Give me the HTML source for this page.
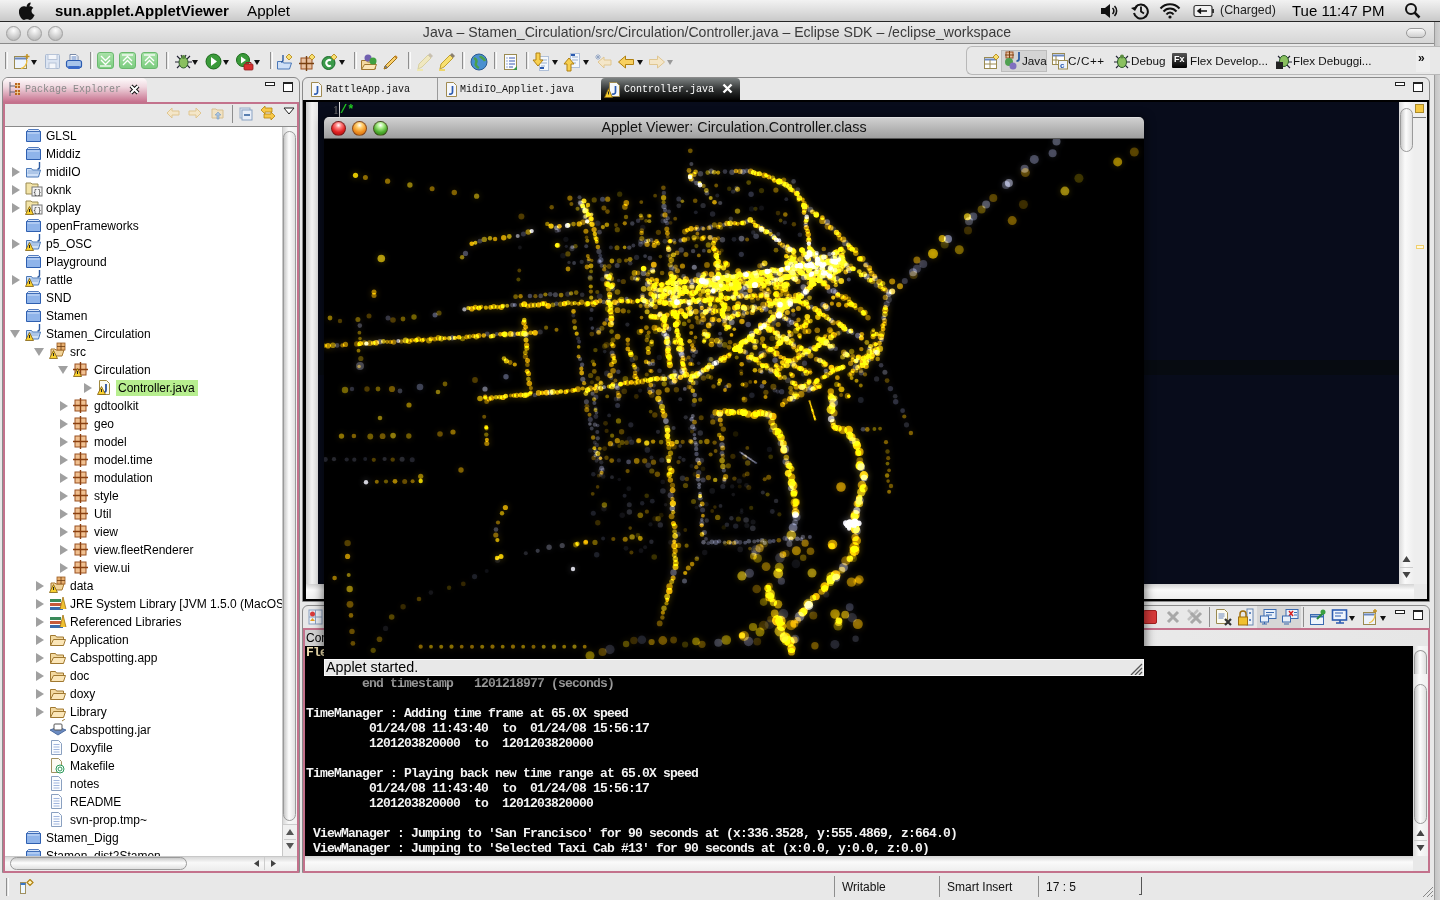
<!DOCTYPE html><html><head><meta charset="utf-8"><style>
*{margin:0;padding:0;box-sizing:border-box}
html,body{width:1440px;height:900px;overflow:hidden;background:#e8e8e8;font-family:"Liberation Sans",sans-serif}
div,svg{position:absolute}
.t{white-space:nowrap}
.sep{top:52px;width:3px;height:17px;border-left:1px solid #8e8e8e;border-right:1px solid #fbfbfb}
.dd{width:0;height:0;border-left:3.5px solid transparent;border-right:3.5px solid transparent;border-top:5px solid #111}
.tl{width:15px;height:15px;border-radius:50%;background:radial-gradient(circle at 50% 28%,#fdfdfd,#d3d3d3 50%,#acacac 100%);border:1px solid #a0a0a0}
.tri{width:0;height:0;border-top:5px solid transparent;border-bottom:5px solid transparent;border-left:8px solid #a0a0a0}
.trid{width:0;height:0;border-left:5px solid transparent;border-right:5px solid transparent;border-top:8px solid #a0a0a0}
.row{font-size:12px;color:#000;white-space:nowrap}
.mono{font-family:"Liberation Mono",monospace}
</style></head><body>
<div style="left:0;top:0;width:1440px;height:22px;background:linear-gradient(#f2f2f2,#dcdcdc 55%,#c9c9c9);border-bottom:1px solid #262626"></div>
<svg style="left:19px;top:2px" width="17" height="18" viewBox="0 0 17 18"><path d="M11.6 0.6c0.2 1.3-0.4 2.5-1.1 3.3-0.8 0.9-1.9 1.4-2.9 1.3-0.2-1.2 0.4-2.4 1.1-3.2 0.8-0.8 2-1.4 2.9-1.4zM15.6 13.1c-0.5 1.1-0.8 1.6-1.4 2.5-0.9 1.3-2.2 2.4-3.3 2.4-1.1 0-1.4-0.7-2.9-0.7-1.5 0-1.9 0.7-3 0.7-1.2 0-2.3-1.2-3.1-2.3C-0.5 12.3-0.7 8.5 1 6.3c0.9-1.3 2.3-2.1 3.7-2.1 1.3 0 2.1 0.7 3.2 0.7 1.1 0 1.7-0.7 3.2-0.7 1.1 0 2.4 0.6 3.3 1.7-2.9 1.6-2.4 5.7 1.2 7.2z" fill="#111"/></svg>
<div class="t" style="left:55px;top:2px;font-size:15px;font-weight:bold">sun.applet.AppletViewer</div>
<div class="t" style="left:247px;top:2px;font-size:15.2px">Applet</div>
<svg style="left:1100px;top:3px" width="20" height="16" viewBox="0 0 20 16"><path d="M1 5h4l5-4v14l-5-4H1z" fill="#111"/><path d="M12.5 5a4 4 0 0 1 0 6M14.5 3a7 7 0 0 1 0 10" stroke="#111" stroke-width="1.6" fill="none"/></svg>
<svg style="left:1131px;top:2px" width="20" height="18" viewBox="0 0 20 18"><path d="M4.5 5A7 7 0 1 1 3 11" stroke="#111" stroke-width="2" fill="none"/><path d="M0 6l4 3 3-5z" fill="#111"/><path d="M10 4.5v5l3 2" stroke="#111" stroke-width="1.8" fill="none"/></svg>
<svg style="left:1159px;top:2px" width="22" height="17" viewBox="0 0 22 17"><path d="M1.5 6.5a13 13 0 0 1 19 0M4.5 9.5a8.5 8.5 0 0 1 13 0M7.5 12.5a4 4 0 0 1 7 0" stroke="#111" stroke-width="2" fill="none"/><circle cx="11" cy="15" r="1.6" fill="#111"/></svg>
<svg style="left:1193px;top:4px" width="22" height="14" viewBox="0 0 22 14"><rect x="1" y="1.5" width="18" height="11" rx="2" fill="#f2f2f2" stroke="#333" stroke-width="1.2"/><rect x="19" y="5" width="2" height="4" fill="#333"/><path d="M5 7h9M8 4.5l-3 2.5 3 2.5" stroke="#111" stroke-width="1.6" fill="#111"/></svg>
<div class="t" style="left:1220px;top:3px;font-size:12.4px;color:#222">(Charged)</div>
<div class="t" style="left:1292px;top:2px;font-size:15px">Tue 11:47 PM</div>
<svg style="left:1404px;top:2px" width="18" height="18" viewBox="0 0 18 18"><circle cx="7" cy="7" r="5" stroke="#111" stroke-width="2" fill="none"/><path d="M10.5 10.5l5 5" stroke="#111" stroke-width="2.5"/></svg>
<div style="left:1434px;top:22px;width:6px;height:878px;border-left:1px solid #9a9a9a;background:linear-gradient(90deg,#c4c4c4,#d2d2d2)"></div>
<div style="left:0;top:22px;width:1434px;height:22px;background:linear-gradient(#ececec,#d6d6d6);border-bottom:1px solid #8a8a8a"></div>
<div class="tl" style="left:6px;top:26px"></div>
<div class="tl" style="left:27px;top:26px"></div>
<div class="tl" style="left:48px;top:26px"></div>
<div class="t" style="left:0;width:1434px;top:24px;text-align:center;font-size:14.1px;color:#3a3a3a">Java – Stamen_Circulation/src/Circulation/Controller.java – Eclipse SDK – /eclipse_workspace</div>
<div style="left:1406px;top:28px;width:20px;height:10px;border-radius:5px;border:1px solid #999;background:linear-gradient(#fbfbfb,#cfcfcf)"></div>
<div class="sep" style="left:5px"></div>
<div class="sep" style="left:90px"></div>
<div class="sep" style="left:166px"></div>
<div class="sep" style="left:270px"></div>
<div class="sep" style="left:354px"></div>
<div class="sep" style="left:408px"></div>
<div class="sep" style="left:462px"></div>
<div class="sep" style="left:494px"></div>
<div class="sep" style="left:526px"></div>
<svg style="left:13px;top:53px" width="18" height="18" viewBox="0 0 18 18"><rect x="1.5" y="3.5" width="12" height="12" fill="#eef4fc" stroke="#9a8a50"/><path d="M1.5 5.5h12" stroke="#6a88c0" stroke-width="2"/><path d="M14 1v5M11.5 3.5h5" stroke="#c09020" stroke-width="1.5"/><path d="M14 7c0 5-3 8-6 8.5" stroke="#f0c040" stroke-width="1.3" fill="none"/></svg>
<div class="dd" style="left:31px;top:60px"></div>
<svg style="left:44px;top:53px" width="17" height="17" viewBox="0 0 17 17"><rect x="1.5" y="1.5" width="14" height="14" rx="1" fill="#dbe4f2" stroke="#a8b8d0"/><rect x="4" y="1.5" width="9" height="5" fill="#f4f6fa" stroke="#b8c4d8"/><rect x="5" y="10" width="7" height="5.5" fill="#f4f6fa" stroke="#b8c4d8"/></svg>
<svg style="left:65px;top:53px" width="18" height="18" viewBox="0 0 18 18"><path d="M5 1.5h6l2 2v4H5z" fill="#fff" stroke="#7a8aa8"/><path d="M6.5 4h5M6.5 6h5" stroke="#2a5ab0" stroke-width="0.8"/><rect x="1.5" y="7.5" width="15" height="7" rx="2" fill="#a8c4ea" stroke="#2a5ab0" stroke-width="1.2"/><rect x="3" y="13" width="12" height="3" rx="1" fill="#3a6ac8"/></svg>
<div style="left:97px;top:52px;width:17px;height:17px;border-radius:3px;background:linear-gradient(#a8e2a8,#7ccc80);border:1px solid #6ab86e"></div>
<div style="left:119px;top:52px;width:17px;height:17px;border-radius:3px;background:linear-gradient(#a8e2a8,#7ccc80);border:1px solid #6ab86e"></div>
<div style="left:141px;top:52px;width:17px;height:17px;border-radius:3px;background:linear-gradient(#a8e2a8,#7ccc80);border:1px solid #6ab86e"></div>
<svg style="left:97px;top:52px" width="17" height="17" viewBox="0 0 17 17"><path d="M4 4l4.5 4.5L13 4M4 8l4.5 4.5L13 8" stroke="#fff" stroke-width="1.3" fill="none"/><path d="M3 14h11" stroke="#fff" stroke-width="1.3"/></svg>
<svg style="left:119px;top:52px" width="17" height="17" viewBox="0 0 17 17"><path d="M3 3h11" stroke="#fff" stroke-width="1.3"/><path d="M4 9l4.5-4.5L13 9M4 13l4.5-4.5L13 13" stroke="#fff" stroke-width="1.3" fill="none"/></svg>
<svg style="left:141px;top:52px" width="17" height="17" viewBox="0 0 17 17"><path d="M3 3h11" stroke="#fff" stroke-width="1.3"/><path d="M4 9l4.5-4.5L13 9M4 13l4.5-4.5L13 13" stroke="#fff" stroke-width="1.3" fill="none"/></svg>
<svg style="left:174px;top:52px" width="19" height="19" viewBox="0 0 19 19"><path d="M3 4l3 3M16 4l-3 3M1 10h4M14 10h4M3 16l3-3M16 16l-3-3M7 3l1 2M12 3l-1 2" stroke="#223" stroke-width="1.1"/><ellipse cx="9.5" cy="10.5" rx="4.5" ry="5.5" fill="#8ac060" stroke="#2a5a2a"/><circle cx="9.5" cy="5" r="2" fill="#5a8a40"/></svg>
<div class="dd" style="left:192px;top:60px"></div>
<svg style="left:205px;top:53px" width="17" height="17" viewBox="0 0 17 17"><circle cx="8.5" cy="8.5" r="7.5" fill="#3a9a3a" stroke="#1a6a1a"/><path d="M6 4l6 4.5-6 4.5z" fill="#fff"/></svg>
<div class="dd" style="left:223px;top:60px"></div>
<svg style="left:236px;top:53px" width="18" height="18" viewBox="0 0 18 18"><circle cx="7" cy="7" r="6.5" fill="#3a9a3a" stroke="#1a6a1a"/><path d="M5 3.5l5 3.5-5 3.5z" fill="#fff"/><rect x="8" y="11" width="9" height="6" rx="1" fill="#d83030" stroke="#902020" stroke-width="0.8"/><path d="M10 11v-1.5h5V11" stroke="#902020" fill="none"/></svg>
<div class="dd" style="left:254px;top:60px"></div>
<svg style="left:276px;top:53px" width="18" height="18" viewBox="0 0 18 18"><path d="M1.5 8.5h5l1 1.5h8l-2 6H1.5z" fill="#cfe0f7" stroke="#4a78b8"/><path d="M7 2v5c0 1.5-1 2-2 2" stroke="#2c5aa0" stroke-width="1.4" fill="none"/><path d="M13 1l3 3-3 3-3-3z" fill="#f8e070" stroke="#b08010" stroke-width="0.8"/></svg>
<svg style="left:299px;top:53px" width="18" height="18" viewBox="0 0 18 18"><rect x="2" y="5" width="11" height="11" fill="#e8c0a0" stroke="#9a5020"/><path d="M7.5 3v15M0 10.5h15" stroke="#7a4010" stroke-width="1.4"/><path d="M13 1l3 3-3 3-3-3z" fill="#f8e070" stroke="#b08010" stroke-width="0.8"/></svg>
<svg style="left:321px;top:53px" width="18" height="18" viewBox="0 0 18 18"><circle cx="7.5" cy="10" r="6.5" fill="#3a9a4a" stroke="#1a6a2a"/><path d="M10 7.5a3 3 0 1 0 0 5" stroke="#fff" stroke-width="2" fill="none"/><path d="M13 1l3 3-3 3-3-3z" fill="#f8e070" stroke="#b08010" stroke-width="0.8"/></svg>
<div class="dd" style="left:339px;top:60px"></div>
<svg style="left:360px;top:53px" width="18" height="18" viewBox="0 0 18 18"><path d="M1.5 7.5h5l1 1.5h8v7h-14z" fill="#f3d9a0" stroke="#a07830"/><path d="M1.5 16.5l3-5h12l-2 5z" fill="#fbe6b8" stroke="#a07830"/><circle cx="8" cy="5" r="3.5" fill="#7060b0"/><circle cx="13" cy="8" r="3.5" fill="#40a040"/></svg>
<svg style="left:382px;top:53px" width="18" height="18" viewBox="0 0 18 18"><path d="M2 16l3-1 10-10-2-2L3 13z" fill="#f8d070" stroke="#a07010"/><path d="M3 13l2 2" stroke="#777" stroke-width="2"/><path d="M13 3l2 2" stroke="#c08020" stroke-width="2"/></svg>
<svg style="left:416px;top:53px" width="18" height="18" viewBox="0 0 18 18"><path d="M2 16l4-2 9-9-3-3-9 9z" fill="#f0e8c0" stroke="#d8d0a0"/><path d="M12 2l3 3 2-2-3-3z" fill="#c8c0b0"/><path d="M1 17h6" stroke="#f0e8a0" stroke-width="1.5"/></svg>
<svg style="left:438px;top:53px" width="18" height="18" viewBox="0 0 18 18"><path d="M2 16l4-2 9-9-3-3-9 9z" fill="#f8e070" stroke="#c0a030"/><path d="M12 2l3 3 2-2-3-3z" fill="#8a8070"/><path d="M1 17h6" stroke="#f0d040" stroke-width="1.5"/></svg>
<svg style="left:470px;top:53px" width="18" height="18" viewBox="0 0 18 18"><circle cx="9" cy="9" r="8" fill="#4a90d0" stroke="#2a5a90"/><path d="M4 5c2 1 3 3 2 5s1 4 3 5M10 3c1 2 4 2 5 5" stroke="#4aa04a" stroke-width="2.5" fill="none"/></svg>
<svg style="left:502px;top:53px" width="17" height="18" viewBox="0 0 17 18"><rect x="2.5" y="1.5" width="12" height="15" fill="#fafcff" stroke="#9a8a50"/><path d="M4.5 5h1M7 5h6M4.5 8h1M7 8h6M4.5 11h1M7 11h6M4.5 14h1M7 14h4" stroke="#3a5ab0"/><path d="M11 17l4-4v4z" fill="#3a9a4a"/></svg>
<svg style="left:532px;top:52px" width="18" height="20" viewBox="0 0 18 20"><rect x="7.5" y="4.5" width="9" height="14" fill="#f4f8fc" stroke="#b0c0d8"/><path d="M9 8h6M9 11h6M9 14h4" stroke="#9ab0d0"/><rect x="8" y="15" width="4" height="2" fill="#2a5ab0"/><path d="M4 1v7H1l5 6 5-6H8V1z" fill="#f8d050" stroke="#b08010"/></svg>
<div class="dd" style="left:552px;top:60px"></div>
<svg style="left:563px;top:52px" width="18" height="20" viewBox="0 0 18 20"><rect x="7.5" y="1.5" width="9" height="14" fill="#f4f8fc" stroke="#b0c0d8"/><path d="M9 5h6M9 8h6M9 11h4" stroke="#9ab0d0"/><rect x="8" y="2" width="4" height="2" fill="#2a5ab0"/><path d="M4 19v-7H1l5-6 5 6H8v7z" fill="#f8d050" stroke="#b08010"/></svg>
<div class="dd" style="left:583px;top:60px"></div>
<svg style="left:595px;top:54px" width="18" height="16" viewBox="0 0 18 16"><path d="M3 8l6-5v3h7v5H9v3z" fill="#f4e6c8" stroke="#e0c690"/><path d="M1 1l4 4M5 1L1 5M3 0v6M0 3h6" stroke="#8aa0c0" stroke-width="0.8"/></svg>
<svg style="left:617px;top:54px" width="18" height="16" viewBox="0 0 18 16"><path d="M1.5 8l7-6v3.5h8v5h-8V14z" fill="#f8d060" stroke="#b08010"/></svg>
<div class="dd" style="left:637px;top:60px"></div>
<svg style="left:648px;top:54px" width="18" height="16" viewBox="0 0 18 16"><path d="M16.5 8l-7-6v3.5h-8v5h8V14z" fill="#f4e6c8" stroke="#e0c690"/></svg>
<div style="left:667px;top:60px;width:0;height:0;border-left:3.5px solid transparent;border-right:3.5px solid transparent;border-top:5px solid #999"></div>
<div style="left:966px;top:46px;width:475px;height:29px;border:1px solid #b8b8b8;border-right:none;border-radius:6px 0 0 6px;background:#e8e8e8"></div>
<div style="left:1368px;top:55px;width:22px;height:22px"></div>
<svg style="left:983px;top:54px" width="16" height="16" viewBox="0 0 16 16"><rect x="1.5" y="3.5" width="12" height="11" fill="#fff" stroke="#9a8a50"/><path d="M1.5 5.5h12" stroke="#6a88c0" stroke-width="2"/><path d="M1.5 10h12M7 6v8" stroke="#9a8a50"/><path d="M13 0l3 3-3 3-3-3z" fill="#f8e070" stroke="#b08010" stroke-width="0.8"/></svg>
<div style="left:1001px;top:50px;width:46px;height:22px;background:#d4d4d4;border:1px solid #bcbcbc"></div>
<svg style="left:1004px;top:51px" width="18" height="19" viewBox="0 0 18 19"><rect x="2" y="1" width="7" height="6" fill="#e8c0a0" stroke="#9a5020"/><path d="M5.5 0v8M1 4h9" stroke="#7a4010"/><circle cx="5" cy="11" r="4" fill="#50a050"/><circle cx="9" cy="15" r="3.5" fill="#8070c0"/><path d="M15 1v7c0 1.5-1 2-2.5 2" stroke="#2c5aa0" stroke-width="1.8" fill="none"/></svg>
<div class="t" style="left:1022px;top:54px;font-size:11.7px;color:#111">Java</div>
<svg style="left:1051px;top:52px" width="18" height="18" viewBox="0 0 18 18"><rect x="1.5" y="1.5" width="12" height="11" fill="#fff" stroke="#9a8a50"/><path d="M1.5 3.5h12" stroke="#6a88c0" stroke-width="2"/><path d="M1.5 8h6M5 4v9" stroke="#9a8a50"/><rect x="7.5" y="8.5" width="9" height="8.5" fill="#eef4fc" stroke="#9a8a50"/><text x="9" y="16" font-size="8" font-weight="bold" fill="#2a5ab0" font-family="Liberation Sans">c</text></svg>
<div class="t" style="left:1068px;top:54px;font-size:11.7px;color:#111;letter-spacing:0.6px">C/C++</div>
<svg style="left:1113px;top:52px" width="18" height="18" viewBox="0 0 18 18"><path d="M3 4l3 3M15 4l-3 3M1 10h4M13 10h4M3 16l3-3M15 16l-3-3" stroke="#223" stroke-width="1.1"/><ellipse cx="9" cy="10" rx="4.5" ry="5.5" fill="#8ac060" stroke="#2a5a2a"/><circle cx="9" cy="4.5" r="2" fill="#5a8a40"/></svg>
<div class="t" style="left:1131px;top:54px;font-size:11.7px;color:#111">Debug</div>
<div style="left:1172px;top:53px;width:15px;height:15px;background:linear-gradient(#555,#000);border-radius:1px"></div>
<div class="t" style="left:1174px;top:54px;font-size:9px;color:#fff;font-weight:bold">Fx</div>
<div class="t" style="left:1190px;top:54px;font-size:11.7px;color:#111">Flex Develop...</div>
<svg style="left:1275px;top:52px" width="18" height="18" viewBox="0 0 18 18"><path d="M3 4l3 3M15 4l-3 3M1 10h4M13 10h4M3 16l3-3M15 16l-3-3" stroke="#223" stroke-width="1.1"/><ellipse cx="9" cy="9" rx="4.5" ry="5.5" fill="#8ac060" stroke="#2a5a2a"/><rect x="1" y="10" width="7" height="7" fill="#222"/></svg>
<div class="t" style="left:1293px;top:54px;font-size:11.7px;color:#111">Flex Debuggi...</div>
<div style="left:1416px;top:50px;width:14px;height:22px;background:#eeeeee"></div>
<div class="t" style="left:1418px;top:51px;font-size:12px;font-weight:bold;color:#111">»</div>
<div style="left:2px;top:77px;width:298px;height:796px;border:1px solid #8a8a8a;border-radius:6px 6px 0 0;background:#e8e8e8"></div>
<div style="left:3px;top:78px;width:144px;height:25px;border-radius:5px 5px 0 0;background:linear-gradient(#fefafb,#f0d8e0 35%,#c46a88)"></div>
<svg style="left:9px;top:82px" width="12" height="14" viewBox="0 0 12 14"><path d="M1 0v14M1 4h5M1 10h5" stroke="#667" stroke-width="1"/><rect x="6" y="1" width="5" height="5" fill="#b9651f"/><rect x="6" y="8" width="5" height="5" fill="#b9651f"/><path d="M8.5 1v5M6 3.5h5M8.5 8v5M6 10.5h5" stroke="#f3d8a0" stroke-width="0.8"/></svg>
<div class="t mono" style="left:25px;top:84px;font-size:10px;color:#8a8a8a;letter-spacing:0px">Package Explorer</div>
<svg style="left:129px;top:84px" width="11" height="11" viewBox="0 0 11 11"><path d="M2 2l7 7M9 2l-7 7" stroke="#111" stroke-width="4"/><path d="M2 2l7 7M9 2l-7 7" stroke="#fff" stroke-width="2"/></svg>
<div style="left:265px;top:82px;width:10px;height:4px;border:1px solid #222;background:#fff"></div>
<div style="left:283px;top:82px;width:10px;height:10px;border:1px solid #222;border-top-width:2px;background:#fff"></div>
<div style="left:3px;top:102px;width:296px;height:771px;border:2px solid #c3728c;border-top-width:2px;background:#e8e8e8"></div>
<svg style="left:166px;top:107px" width="14" height="12" viewBox="0 0 14 12"><path d="M1 6l5-5v3h7v4H6v3z" fill="#f4e6c8" stroke="#e0c690"/></svg>
<svg style="left:188px;top:107px" width="14" height="12" viewBox="0 0 14 12"><path d="M13 6l-5-5v3H1v4h7v3z" fill="#f4e6c8" stroke="#e0c690"/></svg>
<svg style="left:211px;top:106px" width="14" height="14" viewBox="0 0 14 14"><path d="M1 3h4l1 1h6v8H1z" fill="#f0e2c4" stroke="#d8c090"/><path d="M7 6l3 3h-2v4H6V9H4z" fill="#a9c4e0" stroke="#7a9cc0" stroke-width="0.6"/></svg>
<div style="left:232px;top:105px;width:1px;height:18px;background:#8e8e8e"></div>
<svg style="left:239px;top:107px" width="14" height="14" viewBox="0 0 14 14"><rect x="1" y="1" width="10" height="10" fill="#dfe8f4" stroke="#99aec8"/><rect x="3" y="3" width="10" height="10" fill="#e8eef8" stroke="#8aa2c2"/><path d="M5 8h6" stroke="#2a5a9a" stroke-width="1.5"/></svg>
<svg style="left:260px;top:105px" width="16" height="16" viewBox="0 0 16 16"><path d="M1 5l4-4v2h7v4H5v2z" fill="#f7c84a" stroke="#b8860b" stroke-width="0.8"/><path d="M15 11l-4-4v2H4v4h7v2z" fill="#f7c84a" stroke="#b8860b" stroke-width="0.8"/></svg>
<svg style="left:283px;top:107px" width="12" height="8" viewBox="0 0 12 8"><path d="M1 1h10L6 7z" fill="#fff" stroke="#222"/></svg>
<div style="left:5px;top:126px;width:292px;height:1px;background:#8a8a8a"></div>
<div style="left:5px;top:127px;width:277px;height:729px;background:#fff;overflow:hidden" id="tree">
<svg style="left:20px;top:1px" width="17" height="15" viewBox="0 0 17 15"><path d="M1.5 3.5h14v10h-14z" fill="#8fb4ea" stroke="#2e5fb0"/><path d="M1.5 3.5l2-2h10l2 2z" fill="#d6e4f8" stroke="#2e5fb0" stroke-width="0.8"/><path d="M2.5 5h12" stroke="#cfe0fa"/></svg>
<div class="row" style="left:41px;top:2px">GLSL</div>
<svg style="left:20px;top:19px" width="17" height="15" viewBox="0 0 17 15"><path d="M1.5 3.5h14v10h-14z" fill="#8fb4ea" stroke="#2e5fb0"/><path d="M1.5 3.5l2-2h10l2 2z" fill="#d6e4f8" stroke="#2e5fb0" stroke-width="0.8"/><path d="M2.5 5h12" stroke="#cfe0fa"/></svg>
<div class="row" style="left:41px;top:20px">Middiz</div>
<div class="tri" style="left:7px;top:40px"></div>
<svg style="left:20px;top:34px" width="18" height="18" viewBox="0 0 18 18"><path d="M1.5 7.5h5l1 1.5h8l-2 7H1.5z" fill="#cfe0f7" stroke="#4a78b8"/><path d="M3 10h12M2.5 12h11" stroke="#7a9ed0" stroke-width="0.8"/><path d="M14.5 1v5c0 1.3-1 2-2 2" stroke="#2c5aa0" stroke-width="1.4" fill="none"/></svg>
<div class="row" style="left:41px;top:38px">midiIO</div>
<div class="tri" style="left:7px;top:58px"></div>
<svg style="left:20px;top:52px" width="18" height="18" viewBox="0 0 18 18"><path d="M1 4h5l1 1h6v10H1z" fill="#f3e4a8" stroke="#9a8a50"/><rect x="7" y="8" width="10" height="9" fill="#f4f4f4" stroke="#777"/><text x="8" y="15" font-size="7" fill="#333" font-family="Liberation Mono">{}</text></svg>
<div class="row" style="left:41px;top:56px">oknk</div>
<div class="tri" style="left:7px;top:76px"></div>
<svg style="left:20px;top:70px" width="18" height="18" viewBox="0 0 18 18"><path d="M1 4h5l1 1h6v10H1z" fill="#f3e4a8" stroke="#9a8a50"/><rect x="7" y="8" width="10" height="9" fill="#f4f4f4" stroke="#777"/><text x="8" y="15" font-size="7" fill="#333" font-family="Liberation Mono">{}</text></svg><svg style="left:20px;top:79px" width="9" height="9" viewBox="0 0 9 9"><path d="M4.5 0.5l4 8h-8z" fill="#f8d030" stroke="#806010" stroke-width="0.8"/><path d="M4.5 3v3" stroke="#222"/></svg>
<div class="row" style="left:41px;top:74px">okplay</div>
<svg style="left:20px;top:91px" width="17" height="15" viewBox="0 0 17 15"><path d="M1.5 3.5h14v10h-14z" fill="#8fb4ea" stroke="#2e5fb0"/><path d="M1.5 3.5l2-2h10l2 2z" fill="#d6e4f8" stroke="#2e5fb0" stroke-width="0.8"/><path d="M2.5 5h12" stroke="#cfe0fa"/></svg>
<div class="row" style="left:41px;top:92px">openFrameworks</div>
<div class="tri" style="left:7px;top:112px"></div>
<svg style="left:20px;top:106px" width="18" height="18" viewBox="0 0 18 18"><path d="M1.5 7.5h5l1 1.5h8l-2 7H1.5z" fill="#cfe0f7" stroke="#4a78b8"/><path d="M3 10h12M2.5 12h11" stroke="#7a9ed0" stroke-width="0.8"/><path d="M14.5 1v5c0 1.3-1 2-2 2" stroke="#2c5aa0" stroke-width="1.4" fill="none"/></svg><svg style="left:20px;top:115px" width="9" height="9" viewBox="0 0 9 9"><path d="M4.5 0.5l4 8h-8z" fill="#f8d030" stroke="#806010" stroke-width="0.8"/><path d="M4.5 3v3" stroke="#222"/></svg>
<div class="row" style="left:41px;top:110px">p5_OSC</div>
<svg style="left:20px;top:127px" width="17" height="15" viewBox="0 0 17 15"><path d="M1.5 3.5h14v10h-14z" fill="#8fb4ea" stroke="#2e5fb0"/><path d="M1.5 3.5l2-2h10l2 2z" fill="#d6e4f8" stroke="#2e5fb0" stroke-width="0.8"/><path d="M2.5 5h12" stroke="#cfe0fa"/></svg>
<div class="row" style="left:41px;top:128px">Playground</div>
<div class="tri" style="left:7px;top:148px"></div>
<svg style="left:20px;top:142px" width="18" height="18" viewBox="0 0 18 18"><path d="M1.5 7.5h5l1 1.5h8l-2 7H1.5z" fill="#cfe0f7" stroke="#4a78b8"/><path d="M3 10h12M2.5 12h11" stroke="#7a9ed0" stroke-width="0.8"/><path d="M14.5 1v5c0 1.3-1 2-2 2" stroke="#2c5aa0" stroke-width="1.4" fill="none"/></svg><svg style="left:20px;top:151px" width="9" height="9" viewBox="0 0 9 9"><path d="M4.5 0.5l4 8h-8z" fill="#f8d030" stroke="#806010" stroke-width="0.8"/><path d="M4.5 3v3" stroke="#222"/></svg>
<div class="row" style="left:41px;top:146px">rattle</div>
<svg style="left:20px;top:163px" width="17" height="15" viewBox="0 0 17 15"><path d="M1.5 3.5h14v10h-14z" fill="#8fb4ea" stroke="#2e5fb0"/><path d="M1.5 3.5l2-2h10l2 2z" fill="#d6e4f8" stroke="#2e5fb0" stroke-width="0.8"/><path d="M2.5 5h12" stroke="#cfe0fa"/></svg>
<div class="row" style="left:41px;top:164px">SND</div>
<svg style="left:20px;top:181px" width="17" height="15" viewBox="0 0 17 15"><path d="M1.5 3.5h14v10h-14z" fill="#8fb4ea" stroke="#2e5fb0"/><path d="M1.5 3.5l2-2h10l2 2z" fill="#d6e4f8" stroke="#2e5fb0" stroke-width="0.8"/><path d="M2.5 5h12" stroke="#cfe0fa"/></svg>
<div class="row" style="left:41px;top:182px">Stamen</div>
<div class="trid" style="left:5px;top:203px"></div>
<svg style="left:20px;top:196px" width="18" height="18" viewBox="0 0 18 18"><path d="M1.5 7.5h5l1 1.5h8l-2 7H1.5z" fill="#cfe0f7" stroke="#4a78b8"/><path d="M3 10h12M2.5 12h11" stroke="#7a9ed0" stroke-width="0.8"/><path d="M14.5 1v5c0 1.3-1 2-2 2" stroke="#2c5aa0" stroke-width="1.4" fill="none"/></svg><svg style="left:20px;top:205px" width="9" height="9" viewBox="0 0 9 9"><path d="M4.5 0.5l4 8h-8z" fill="#f8d030" stroke="#806010" stroke-width="0.8"/><path d="M4.5 3v3" stroke="#222"/></svg>
<div class="row" style="left:41px;top:200px">Stamen_Circulation</div>
<div class="trid" style="left:29px;top:221px"></div>
<svg style="left:44px;top:214px" width="18" height="18" viewBox="0 0 18 18"><path d="M2 8h4l1 1h8l-2 6H2z" fill="#f2d49a" stroke="#a87830"/><rect x="8" y="2" width="8" height="7" fill="#e8b070" stroke="#9a5a20" stroke-width="0.8"/><path d="M12 2v7M8 5.5h8" stroke="#6a3a10" stroke-width="0.8"/></svg><svg style="left:44px;top:223px" width="9" height="9" viewBox="0 0 9 9"><path d="M4.5 0.5l4 8h-8z" fill="#f8d030" stroke="#806010" stroke-width="0.8"/><path d="M4.5 3v3" stroke="#222"/></svg>
<div class="row" style="left:65px;top:218px">src</div>
<div class="trid" style="left:53px;top:239px"></div>
<svg style="left:68px;top:235px" width="15" height="15" viewBox="0 0 15 15"><rect x="2" y="2" width="11" height="11" fill="#f0c090" stroke="#9a5020"/><path d="M7.5 0v15M0 7.5h15" stroke="#8a4010" stroke-width="1.4"/></svg><svg style="left:68px;top:241px" width="9" height="9" viewBox="0 0 9 9"><path d="M4.5 0.5l4 8h-8z" fill="#f8d030" stroke="#806010" stroke-width="0.8"/><path d="M4.5 3v3" stroke="#222"/></svg>
<div class="row" style="left:89px;top:236px">Circulation</div>
<div class="tri" style="left:79px;top:256px"></div>
<svg style="left:92px;top:252px" width="15" height="17" viewBox="0 0 15 17"><path d="M2.5 1.5h7l3 3v11h-10z" fill="#fbfaf2" stroke="#a08a40"/><path d="M9 5v6c0 2-1.5 2.5-3.5 2" stroke="#2850a0" stroke-width="1.8" fill="none"/></svg><svg style="left:92px;top:259px" width="9" height="9" viewBox="0 0 9 9"><path d="M4.5 0.5l4 8h-8z" fill="#f8d030" stroke="#806010" stroke-width="0.8"/><path d="M4.5 3v3" stroke="#222"/></svg>
<div style="left:111px;top:253px;width:82px;height:16px;background:#b7ee8f"></div>
<div class="row" style="left:113px;top:254px">Controller.java</div>
<div class="tri" style="left:55px;top:274px"></div>
<svg style="left:68px;top:271px" width="15" height="15" viewBox="0 0 15 15"><rect x="2" y="2" width="11" height="11" fill="#f0c090" stroke="#9a5020"/><path d="M7.5 0v15M0 7.5h15" stroke="#8a4010" stroke-width="1.4"/></svg>
<div class="row" style="left:89px;top:272px">gdtoolkit</div>
<div class="tri" style="left:55px;top:292px"></div>
<svg style="left:68px;top:289px" width="15" height="15" viewBox="0 0 15 15"><rect x="2" y="2" width="11" height="11" fill="#f0c090" stroke="#9a5020"/><path d="M7.5 0v15M0 7.5h15" stroke="#8a4010" stroke-width="1.4"/></svg>
<div class="row" style="left:89px;top:290px">geo</div>
<div class="tri" style="left:55px;top:310px"></div>
<svg style="left:68px;top:307px" width="15" height="15" viewBox="0 0 15 15"><rect x="2" y="2" width="11" height="11" fill="#f0c090" stroke="#9a5020"/><path d="M7.5 0v15M0 7.5h15" stroke="#8a4010" stroke-width="1.4"/></svg>
<div class="row" style="left:89px;top:308px">model</div>
<div class="tri" style="left:55px;top:328px"></div>
<svg style="left:68px;top:325px" width="15" height="15" viewBox="0 0 15 15"><rect x="2" y="2" width="11" height="11" fill="#f0c090" stroke="#9a5020"/><path d="M7.5 0v15M0 7.5h15" stroke="#8a4010" stroke-width="1.4"/></svg>
<div class="row" style="left:89px;top:326px">model.time</div>
<div class="tri" style="left:55px;top:346px"></div>
<svg style="left:68px;top:343px" width="15" height="15" viewBox="0 0 15 15"><rect x="2" y="2" width="11" height="11" fill="#f0c090" stroke="#9a5020"/><path d="M7.5 0v15M0 7.5h15" stroke="#8a4010" stroke-width="1.4"/></svg>
<div class="row" style="left:89px;top:344px">modulation</div>
<div class="tri" style="left:55px;top:364px"></div>
<svg style="left:68px;top:361px" width="15" height="15" viewBox="0 0 15 15"><rect x="2" y="2" width="11" height="11" fill="#f0c090" stroke="#9a5020"/><path d="M7.5 0v15M0 7.5h15" stroke="#8a4010" stroke-width="1.4"/></svg>
<div class="row" style="left:89px;top:362px">style</div>
<div class="tri" style="left:55px;top:382px"></div>
<svg style="left:68px;top:379px" width="15" height="15" viewBox="0 0 15 15"><rect x="2" y="2" width="11" height="11" fill="#f0c090" stroke="#9a5020"/><path d="M7.5 0v15M0 7.5h15" stroke="#8a4010" stroke-width="1.4"/></svg>
<div class="row" style="left:89px;top:380px">Util</div>
<div class="tri" style="left:55px;top:400px"></div>
<svg style="left:68px;top:397px" width="15" height="15" viewBox="0 0 15 15"><rect x="2" y="2" width="11" height="11" fill="#f0c090" stroke="#9a5020"/><path d="M7.5 0v15M0 7.5h15" stroke="#8a4010" stroke-width="1.4"/></svg>
<div class="row" style="left:89px;top:398px">view</div>
<div class="tri" style="left:55px;top:418px"></div>
<svg style="left:68px;top:415px" width="15" height="15" viewBox="0 0 15 15"><rect x="2" y="2" width="11" height="11" fill="#f0c090" stroke="#9a5020"/><path d="M7.5 0v15M0 7.5h15" stroke="#8a4010" stroke-width="1.4"/></svg>
<div class="row" style="left:89px;top:416px">view.fleetRenderer</div>
<div class="tri" style="left:55px;top:436px"></div>
<svg style="left:68px;top:433px" width="15" height="15" viewBox="0 0 15 15"><rect x="2" y="2" width="11" height="11" fill="#f0c090" stroke="#9a5020"/><path d="M7.5 0v15M0 7.5h15" stroke="#8a4010" stroke-width="1.4"/></svg>
<div class="row" style="left:89px;top:434px">view.ui</div>
<div class="tri" style="left:31px;top:454px"></div>
<svg style="left:44px;top:448px" width="18" height="18" viewBox="0 0 18 18"><path d="M2 8h4l1 1h8l-2 6H2z" fill="#f2d49a" stroke="#a87830"/><rect x="8" y="2" width="8" height="7" fill="#e8b070" stroke="#9a5a20" stroke-width="0.8"/><path d="M12 2v7M8 5.5h8" stroke="#6a3a10" stroke-width="0.8"/></svg><svg style="left:44px;top:457px" width="9" height="9" viewBox="0 0 9 9"><path d="M4.5 0.5l4 8h-8z" fill="#f8d030" stroke="#806010" stroke-width="0.8"/><path d="M4.5 3v3" stroke="#222"/></svg>
<div class="row" style="left:65px;top:452px">data</div>
<div class="tri" style="left:31px;top:472px"></div>
<svg style="left:44px;top:469px" width="18" height="15" viewBox="0 0 18 15"><rect x="1" y="3" width="11" height="3" fill="#3a8a5a"/><rect x="1" y="7" width="11" height="3" fill="#c85a3a"/><rect x="1" y="11" width="13" height="3" fill="#3a6aaa"/><path d="M11 13l3-12 3 12" fill="#f0c030" stroke="#a07010" stroke-width="0.8"/></svg>
<div class="row" style="left:65px;top:470px">JRE System Library [JVM 1.5.0 (MacOS X Default)]</div>
<div class="tri" style="left:31px;top:490px"></div>
<svg style="left:44px;top:487px" width="18" height="15" viewBox="0 0 18 15"><rect x="1" y="3" width="11" height="3" fill="#3a8a5a"/><rect x="1" y="7" width="11" height="3" fill="#c85a3a"/><rect x="1" y="11" width="13" height="3" fill="#3a6aaa"/><path d="M11 13l3-12 3 12" fill="#f0c030" stroke="#a07010" stroke-width="0.8"/></svg>
<div class="row" style="left:65px;top:488px">Referenced Libraries</div>
<div class="tri" style="left:31px;top:508px"></div>
<svg style="left:44px;top:505px" width="18" height="15" viewBox="0 0 18 15"><path d="M1.5 3.5h5l1 1.5h7v8h-13z" fill="#f3d9a0" stroke="#a07830"/><path d="M1.5 13.5l3-6h12l-2 6z" fill="#fbe6b8" stroke="#a07830"/></svg>
<div class="row" style="left:65px;top:506px">Application</div>
<div class="tri" style="left:31px;top:526px"></div>
<svg style="left:44px;top:523px" width="18" height="15" viewBox="0 0 18 15"><path d="M1.5 3.5h5l1 1.5h7v8h-13z" fill="#f3d9a0" stroke="#a07830"/><path d="M1.5 13.5l3-6h12l-2 6z" fill="#fbe6b8" stroke="#a07830"/></svg>
<div class="row" style="left:65px;top:524px">Cabspotting.app</div>
<div class="tri" style="left:31px;top:544px"></div>
<svg style="left:44px;top:541px" width="18" height="15" viewBox="0 0 18 15"><path d="M1.5 3.5h5l1 1.5h7v8h-13z" fill="#f3d9a0" stroke="#a07830"/><path d="M1.5 13.5l3-6h12l-2 6z" fill="#fbe6b8" stroke="#a07830"/></svg>
<div class="row" style="left:65px;top:542px">doc</div>
<div class="tri" style="left:31px;top:562px"></div>
<svg style="left:44px;top:559px" width="18" height="15" viewBox="0 0 18 15"><path d="M1.5 3.5h5l1 1.5h7v8h-13z" fill="#f3d9a0" stroke="#a07830"/><path d="M1.5 13.5l3-6h12l-2 6z" fill="#fbe6b8" stroke="#a07830"/></svg>
<div class="row" style="left:65px;top:560px">doxy</div>
<div class="tri" style="left:31px;top:580px"></div>
<svg style="left:44px;top:577px" width="18" height="15" viewBox="0 0 18 15"><path d="M1.5 3.5h5l1 1.5h7v8h-13z" fill="#f3d9a0" stroke="#a07830"/><path d="M1.5 13.5l3-6h12l-2 6z" fill="#fbe6b8" stroke="#a07830"/></svg>
<div class="row" style="left:65px;top:578px">Library</div>
<svg style="left:44px;top:592px" width="18" height="18" viewBox="0 0 18 18"><path d="M1 11l8 5 8-5-8-3z" fill="#6a8ac0" stroke="#3a5a90" stroke-width="0.8"/><rect x="5" y="5" width="8" height="6" rx="1" fill="#fff" stroke="#555"/><path d="M13 2l3-2" stroke="#a08040"/></svg>
<div class="row" style="left:65px;top:596px">Cabspotting.jar</div>
<svg style="left:44px;top:612px" width="15" height="17" viewBox="0 0 15 17"><path d="M2.5 1.5h7l3 3v11h-10z" fill="#fafcff" stroke="#8aa0c0"/><path d="M4.5 5.5h6M4.5 8h6M4.5 10.5h6M4.5 13h6" stroke="#7a98d0" stroke-width="0.7"/></svg>
<div class="row" style="left:65px;top:614px">Doxyfile</div>
<svg style="left:44px;top:630px" width="17" height="17" viewBox="0 0 17 17"><path d="M2.5 1.5h7l3 3v11h-10z" fill="#fbfaf2" stroke="#a09060"/><circle cx="11" cy="12" r="4" fill="#fff" stroke="#2a9a5a"/><circle cx="11" cy="12" r="2" fill="none" stroke="#2a9a5a"/></svg>
<div class="row" style="left:65px;top:632px">Makefile</div>
<svg style="left:44px;top:648px" width="15" height="17" viewBox="0 0 15 17"><path d="M2.5 1.5h7l3 3v11h-10z" fill="#fafcff" stroke="#8aa0c0"/><path d="M4.5 5.5h6M4.5 8h6M4.5 10.5h6M4.5 13h6" stroke="#7a98d0" stroke-width="0.7"/></svg>
<div class="row" style="left:65px;top:650px">notes</div>
<svg style="left:44px;top:666px" width="15" height="17" viewBox="0 0 15 17"><path d="M2.5 1.5h7l3 3v11h-10z" fill="#fafcff" stroke="#8aa0c0"/><path d="M4.5 5.5h6M4.5 8h6M4.5 10.5h6M4.5 13h6" stroke="#7a98d0" stroke-width="0.7"/></svg>
<div class="row" style="left:65px;top:668px">README</div>
<svg style="left:44px;top:684px" width="15" height="17" viewBox="0 0 15 17"><path d="M2.5 1.5h7l3 3v11h-10z" fill="#fafcff" stroke="#8aa0c0"/><path d="M4.5 5.5h6M4.5 8h6M4.5 10.5h6M4.5 13h6" stroke="#7a98d0" stroke-width="0.7"/></svg>
<div class="row" style="left:65px;top:686px">svn-prop.tmp~</div>
<svg style="left:20px;top:703px" width="17" height="15" viewBox="0 0 17 15"><path d="M1.5 3.5h14v10h-14z" fill="#8fb4ea" stroke="#2e5fb0"/><path d="M1.5 3.5l2-2h10l2 2z" fill="#d6e4f8" stroke="#2e5fb0" stroke-width="0.8"/><path d="M2.5 5h12" stroke="#cfe0fa"/></svg>
<div class="row" style="left:41px;top:704px">Stamen_Digg</div>
<svg style="left:20px;top:721px" width="17" height="15" viewBox="0 0 17 15"><path d="M1.5 3.5h14v10h-14z" fill="#8fb4ea" stroke="#2e5fb0"/><path d="M1.5 3.5l2-2h10l2 2z" fill="#d6e4f8" stroke="#2e5fb0" stroke-width="0.8"/><path d="M2.5 5h12" stroke="#cfe0fa"/></svg>
<div class="row" style="left:41px;top:722px">Stamen_dist2Stamen</div>
</div>
<div style="left:282px;top:127px;width:15px;height:729px;background:linear-gradient(90deg,#d8d8d8,#f8f8f8 40%,#f0f0f0);border-left:1px solid #c8c8c8"></div>
<div style="left:283px;top:131px;width:13px;height:690px;border-radius:7px;border:1px solid #9a9a9a;background:linear-gradient(90deg,#c8c8c8,#fdfdfd 45%,#e0e0e0)"></div>
<div style="left:283px;top:824px;width:14px;height:32px;background:#f0f0f0;border-top:1px solid #ccc"></div>
<svg style="left:284px;top:826px" width="12" height="28" viewBox="0 0 12 28"><path d="M2 9h8l-4-6z M2 17h8l-4 6z" fill="#555"/><path d="M0 13.5h12" stroke="#ccc"/></svg>
<div style="left:5px;top:856px;width:292px;height:15px;background:linear-gradient(#d8d8d8,#f8f8f8 40%,#ececec);border-top:1px solid #c8c8c8"></div>
<div style="left:10px;top:857px;width:177px;height:13px;border-radius:7px;border:1px solid #9a9a9a;background:linear-gradient(#c8c8c8,#fdfdfd 45%,#e0e0e0)"></div>
<svg style="left:250px;top:857px" width="32" height="13" viewBox="0 0 32 13"><path d="M9 3v7l-5-3.5z" fill="#444"/><path d="M21 3v7l5-3.5z" fill="#444"/><path d="M14.5 0v13" stroke="#ccc"/></svg>
<div style="left:302px;top:77px;width:1128px;height:525px;border:1px solid #8a8a8a;border-radius:6px 6px 0 0;background:#e8e8e8"></div>
<div style="left:437px;top:78px;width:1px;height:22px;background:#9a9a9a"></div>
<svg style="left:311px;top:82px" width="11" height="15" viewBox="0 0 11 15"><path d="M0.5 0.5h7l3 3v11h-10z" fill="#f6f8fc" stroke="#a08a50"/><path d="M6.5 4v6c0 1.8-1.3 2.4-3.5 2" stroke="#2a5ab0" stroke-width="1.7" fill="none"/></svg>
<div class="t mono" style="left:326px;top:84px;font-size:10px;color:#111">RattleApp.java</div>
<svg style="left:446px;top:82px" width="11" height="15" viewBox="0 0 11 15"><path d="M0.5 0.5h7l3 3v11h-10z" fill="#f6f8fc" stroke="#a08a50"/><path d="M6.5 4v6c0 1.8-1.3 2.4-3.5 2" stroke="#2a5ab0" stroke-width="1.7" fill="none"/></svg>
<div class="t mono" style="left:460px;top:84px;font-size:10px;color:#111">MidiIO_Appliet.java</div>
<div style="left:601px;top:78px;width:139px;height:23px;border-radius:4px 4px 0 0;background:linear-gradient(#7d8282,#2a2c2c 55%,#000)"></div>
<svg style="left:609px;top:82px" width="11" height="15" viewBox="0 0 11 15"><path d="M0.5 0.5h7l3 3v11h-10z" fill="#f6f8fc" stroke="#a08a50"/><path d="M6.5 4v6c0 1.8-1.3 2.4-3.5 2" stroke="#2a5ab0" stroke-width="1.7" fill="none"/></svg><svg style="left:604px;top:88px" width="9" height="10" viewBox="0 0 9 10"><path d="M4.5 0.5l4 9h-8z" fill="#f8d030" stroke="#806010" stroke-width="0.8"/><path d="M4.5 3.5v3" stroke="#222"/></svg>
<div class="t mono" style="left:624px;top:84px;font-size:10px;color:#fff">Controller.java</div>
<svg style="left:722px;top:83px" width="11" height="11" viewBox="0 0 11 11"><path d="M1.5 1.5l8 8M9.5 1.5l-8 8" stroke="#fff" stroke-width="2.4"/></svg>
<div style="left:1395px;top:82px;width:10px;height:4px;border:1px solid #222;background:#fff"></div>
<div style="left:1413px;top:82px;width:10px;height:10px;border:1px solid #222;border-top-width:2px;background:#fff"></div>
<div style="left:303px;top:100px;width:1126px;height:501px;background:#000"></div>
<div style="left:306px;top:102px;width:12px;height:482px;background:linear-gradient(90deg,#c8c8c8,#f4f4f4 50%,#e4e4e4)"></div>
<div style="left:318px;top:102px;width:1081px;height:482px;background:#080c1b"></div>
<div style="left:318px;top:360px;width:1081px;height:15px;background:#070b11"></div>
<div class="t" style="left:333px;top:104px;font-size:11.5px;color:#777;font-family:'Liberation Serif',serif">1</div>
<div style="left:339px;top:102px;width:1px;height:16px;background:#ddd"></div>
<div class="t mono" style="left:340px;top:103px;font-size:12px;color:#22cc22;font-weight:bold">/*</div>
<div style="left:1399px;top:102px;width:15px;height:482px;background:linear-gradient(90deg,#d8d8d8,#fafafa 40%,#eeeeee)"></div>
<div style="left:1400px;top:108px;width:13px;height:44px;border-radius:7px;border:1px solid #9a9a9a;background:linear-gradient(90deg,#c8c8c8,#fdfdfd 45%,#e0e0e0)"></div>
<svg style="left:1400px;top:552px" width="13" height="32" viewBox="0 0 13 32"><path d="M2.5 10h8l-4-6z M2.5 20h8l-4 6z" fill="#444"/><path d="M0 15.5h13" stroke="#ccc"/></svg>
<div style="left:1414px;top:102px;width:13px;height:482px;background:#eeeeee"></div>
<div style="left:1415px;top:104px;width:9px;height:9px;background:#f5c842;border:1px solid #aa8a2a"></div>
<div style="left:1413px;top:117px;width:13px;height:1px;background:#777"></div>
<div style="left:1416px;top:245px;width:8px;height:4px;border:1px solid #f0d070;background:#fff8e0"></div>
<div style="left:306px;top:584px;width:1108px;height:15px;background:linear-gradient(#d4d4d4,#fafafa 40%,#eeeeee)"></div>
<div style="left:1414px;top:584px;width:13px;height:15px;background:#e8e8e8"></div>
<div style="left:302px;top:605px;width:1128px;height:268px;border:1px solid #8a8a8a;border-radius:6px 6px 0 0;background:#e8e8e8"></div>
<svg style="left:308px;top:609px" width="16" height="16" viewBox="0 0 16 16"><rect x="1" y="1" width="13" height="14" fill="#eef2f8" stroke="#8aa0c0"/><path d="M1 8h13M7.5 1v14" stroke="#8aa0c0"/><circle cx="4.5" cy="5" r="2.5" fill="#d83a3a"/><path d="M2 12h5l-2.5-3z" fill="#e8a020"/></svg>
<div style="left:303px;top:628px;width:1127px;height:245px;border:2px solid #c3728c;background:#e8e8e8"></div>
<div style="left:305px;top:630px;width:1123px;height:16px;background:linear-gradient(90deg,#cfcfcf,#f2f2f2 10%,#e6e6e6)"></div>
<div class="t" style="left:306px;top:631px;font-size:12px;color:#000">Console</div>
<div style="left:305px;top:646px;width:1108px;height:210px;background:#000"></div>
<div class="t mono" style="left:306px;top:645px;font-size:13px;letter-spacing:-0.8px;line-height:15px;font-weight:bold;color:#f0e0b0;white-space:pre">Flex Debugging: </div>
<div class="t mono" style="left:306px;top:676px;font-size:13px;letter-spacing:-0.8px;line-height:15px;font-weight:bold;color:#a8a8a8;white-space:pre">        end timestamp   1201218977 (seconds)</div>
<div class="t mono" style="left:306px;top:706px;font-size:13px;letter-spacing:-0.8px;line-height:15px;font-weight:bold;color:#f4f4f4;white-space:pre">TimeManager : Adding time frame at 65.0X speed</div>
<div class="t mono" style="left:306px;top:721px;font-size:13px;letter-spacing:-0.8px;line-height:15px;font-weight:bold;color:#f4f4f4;white-space:pre">         01/24/08 11:43:40  to  01/24/08 15:56:17</div>
<div class="t mono" style="left:306px;top:736px;font-size:13px;letter-spacing:-0.8px;line-height:15px;font-weight:bold;color:#f4f4f4;white-space:pre">         1201203820000  to  1201203820000</div>
<div class="t mono" style="left:306px;top:766px;font-size:13px;letter-spacing:-0.8px;line-height:15px;font-weight:bold;color:#f4f4f4;white-space:pre">TimeManager : Playing back new time range at 65.0X speed</div>
<div class="t mono" style="left:306px;top:781px;font-size:13px;letter-spacing:-0.8px;line-height:15px;font-weight:bold;color:#f4f4f4;white-space:pre">         01/24/08 11:43:40  to  01/24/08 15:56:17</div>
<div class="t mono" style="left:306px;top:796px;font-size:13px;letter-spacing:-0.8px;line-height:15px;font-weight:bold;color:#f4f4f4;white-space:pre">         1201203820000  to  1201203820000</div>
<div class="t mono" style="left:306px;top:826px;font-size:13px;letter-spacing:-0.8px;line-height:15px;font-weight:bold;color:#f4f4f4;white-space:pre"> ViewManager : Jumping to &#39;San Francisco&#39; for 90 seconds at (x:336.3528, y:555.4869, z:664.0)</div>
<div class="t mono" style="left:306px;top:841px;font-size:13px;letter-spacing:-0.8px;line-height:15px;font-weight:bold;color:#f4f4f4;white-space:pre"> ViewManager : Jumping to &#39;Selected Taxi Cab #13&#39; for 90 seconds at (x:0.0, y:0.0, z:0.0)</div>
<div style="left:1413px;top:646px;width:15px;height:210px;background:linear-gradient(90deg,#d8d8d8,#fafafa 40%,#eeeeee)"></div>
<div style="left:1414px;top:650px;width:13px;height:24px;border-radius:7px 7px 0 0;border:1px solid #9a9a9a;border-bottom:none;background:linear-gradient(90deg,#c8c8c8,#fdfdfd 45%,#e0e0e0)"></div>
<div style="left:1414px;top:684px;width:13px;height:140px;border-radius:7px;border:1px solid #9a9a9a;background:linear-gradient(90deg,#c8c8c8,#fdfdfd 45%,#e0e0e0)"></div>
<svg style="left:1414px;top:826px" width="13" height="30" viewBox="0 0 13 30"><path d="M2.5 10h8l-4-6z M2.5 19h8l-4 6z" fill="#444"/><path d="M0 14.5h13" stroke="#ccc"/></svg>
<div style="left:305px;top:856px;width:1108px;height:15px;background:linear-gradient(#d4d4d4,#fafafa 40%,#eeeeee)"></div>
<div style="left:1143px;top:610px;width:14px;height:14px;background:#d83a3a;border:1px solid #a02020;border-radius:2px"></div>
<svg style="left:1166px;top:610px" width="14" height="14" viewBox="0 0 14 14"><path d="M2 2l10 10M12 2l-10 10" stroke="#a8a8a8" stroke-width="3"/></svg>
<svg style="left:1186px;top:608px" width="18" height="18" viewBox="0 0 18 18"><path d="M2 2l10 10M12 2l-10 10" stroke="#c0c0c0" stroke-width="2.5"/><path d="M5 5l10 10M15 5l-10 10" stroke="#a8a8a8" stroke-width="3"/></svg>
<div style="left:1209px;top:607px;width:1px;height:20px;background:#8e8e8e"></div>
<svg style="left:1215px;top:608px" width="18" height="18" viewBox="0 0 18 18"><path d="M1.5 1.5h8l3 3v11h-11z" fill="#fbfaf0" stroke="#9a8a50"/><path d="M3.5 6h6M3.5 8h6M3.5 10h5" stroke="#6a88c0"/><path d="M10 11l6 6M16 11l-6 6" stroke="#333" stroke-width="2.2"/></svg>
<svg style="left:1237px;top:608px" width="18" height="18" viewBox="0 0 18 18"><rect x="10" y="1" width="6" height="16" fill="#eef2f8" stroke="#6a88b0"/><path d="M13 4v2M13 11v2" stroke="#3a6ab0" stroke-width="1.5"/><path d="M3 9V6a3 3 0 0 1 6 0v3" stroke="#a07010" stroke-width="1.5" fill="none"/><rect x="1.5" y="9" width="9" height="8" fill="#f0c030" stroke="#a07010"/></svg>
<div style="left:1257px;top:606px;width:44px;height:22px;background:#d6d6d6"></div>
<svg style="left:1259px;top:608px" width="18" height="18" viewBox="0 0 18 18"><rect x="5" y="1.5" width="12" height="9" fill="#e8f0fa" stroke="#3a6ab0"/><path d="M7 4.5h8M7 7h6" stroke="#3a6ab0"/><rect x="1.5" y="8" width="8" height="6" fill="#e8f0fa" stroke="#3a6ab0"/><path d="M3 16h5M5.5 14v2" stroke="#3a6ab0"/></svg>
<svg style="left:1281px;top:608px" width="18" height="18" viewBox="0 0 18 18"><rect x="5" y="1.5" width="12" height="9" fill="#e8f0fa" stroke="#3a6ab0"/><path d="M8 3l4 5M12 3l-4 5" stroke="#d82020" stroke-width="1.5"/><path d="M13 4.5h3M13 7h3" stroke="#3a6ab0"/><rect x="1.5" y="8" width="8" height="6" fill="#e8f0fa" stroke="#3a6ab0"/><path d="M3 16h5" stroke="#3a6ab0"/></svg>
<div style="left:1303px;top:607px;width:1px;height:20px;background:#8e8e8e"></div>
<svg style="left:1309px;top:608px" width="18" height="18" viewBox="0 0 18 18"><rect x="1.5" y="6.5" width="13" height="10" fill="#eef4fc" stroke="#3a6ab0"/><path d="M1.5 8.5h13" stroke="#3a6ab0" stroke-width="2"/><path d="M8 11l6-6" stroke="#2a8a3a" stroke-width="2"/><circle cx="14" cy="4" r="2.5" fill="#3aa040"/></svg>
<svg style="left:1331px;top:608px" width="18" height="18" viewBox="0 0 18 18"><rect x="1.5" y="2" width="14" height="10" fill="#eef4fc" stroke="#2a5ab0" stroke-width="1.6"/><path d="M4 5h8M4 8h6" stroke="#2a5ab0"/><path d="M5 15h8M9 12v3" stroke="#2a5ab0" stroke-width="1.6"/></svg>
<div class="dd" style="left:1349px;top:616px"></div>
<svg style="left:1362px;top:607px" width="18" height="19" viewBox="0 0 18 19"><rect x="1.5" y="5.5" width="12" height="12" fill="#eef4fc" stroke="#9a8a50"/><path d="M1.5 7.5h12" stroke="#6a88c0" stroke-width="2"/><path d="M13 2v4M11 4h4" stroke="#c09020" stroke-width="1.4"/><path d="M13 7c0 5-3 8-6 9" stroke="#f0c040" stroke-width="1.2" fill="none"/></svg>
<div class="dd" style="left:1380px;top:616px"></div>
<div style="left:1395px;top:610px;width:10px;height:4px;border:1px solid #222;background:#fff"></div>
<div style="left:1413px;top:610px;width:10px;height:10px;border:1px solid #222;border-top-width:2px;background:#fff"></div>
<div style="left:6px;top:878px;width:3px;height:18px;border-left:1px solid #8e8e8e;border-right:1px solid #fbfbfb"></div>
<svg style="left:19px;top:879px" width="16" height="16" viewBox="0 0 16 16"><rect x="1.5" y="3.5" width="5" height="11" fill="#eef8ff" stroke="#a09060"/><path d="M1.5 5h5" stroke="#3a78c8" stroke-width="2"/><path d="M11 0.5l3 3-3 3-3-3z" fill="#fff6c0" stroke="#b08010" stroke-width="1.2"/></svg>
<div style="left:834px;top:876px;width:1px;height:21px;background:#8e8e8e"></div>
<div style="left:939px;top:876px;width:1px;height:21px;background:#8e8e8e"></div>
<div style="left:1038px;top:876px;width:1px;height:21px;background:#8e8e8e"></div>
<div style="left:1139px;top:877px;width:3px;height:18px;border-right:1px solid #555;border-bottom:1px solid #555"></div>
<div class="t" style="left:842px;top:880px;font-size:12px;color:#111">Writable</div>
<div class="t" style="left:947px;top:880px;font-size:12px;color:#111">Smart Insert</div>
<div class="t" style="left:1046px;top:880px;font-size:12px;color:#111">17 : 5</div>
<svg style="left:1420px;top:884px" width="14" height="14" viewBox="0 0 14 14"><path d="M13 3L3 13M13 7L7 13M13 11l-2 2" stroke="#888" stroke-width="1"/></svg>
<div style="left:324px;top:117px;width:820px;height:559px;border-radius:5px 5px 0 0;box-shadow:0 2px 10px 2px rgba(0,0,0,0.5)"></div>
<div style="left:324px;top:117px;width:820px;height:559px;background:#000;border-radius:5px 5px 0 0;overflow:hidden"></div>
<div style="left:324px;top:117px;width:820px;height:22px;border-radius:5px 5px 0 0;background:linear-gradient(#f0f0f0 0,#d0d0d0 1px,#bdbdbd 40%,#9f9f9f 100%);border-bottom:1px solid #555"></div>
<div style="left:331px;top:121px;width:15px;height:15px;border-radius:50%;background:radial-gradient(circle at 50% 25%,#fff 0,#ff8080 25%,#e02020 60%,#a01010 100%);border:1px solid rgba(60,20,20,0.55)"></div>
<div style="left:352px;top:121px;width:15px;height:15px;border-radius:50%;background:radial-gradient(circle at 50% 25%,#fff 0,#ffd070 25%,#f09020 60%,#c06010 100%);border:1px solid rgba(60,20,20,0.55)"></div>
<div style="left:373px;top:121px;width:15px;height:15px;border-radius:50%;background:radial-gradient(circle at 50% 25%,#fff 0,#b0f090 25%,#50b030 60%,#287010 100%);border:1px solid rgba(60,20,20,0.55)"></div>
<div class="t" style="left:324px;width:820px;top:119px;text-align:center;font-size:14.3px;color:#111">Applet Viewer: Circulation.Controller.class</div>
<div style="left:324px;top:659px;width:820px;height:17px;background:#e8e8e8;border:1px solid #fafafa"></div>
<div class="t" style="left:326px;top:659px;font-size:14.3px;color:#000">Applet started.</div>
<svg style="left:1130px;top:663px" width="13" height="12" viewBox="0 0 13 12"><path d="M12 1L1 12M12 5L5 12M12 9l-3 3" stroke="#555" stroke-width="1.3"/></svg>
<style>#map circle{mix-blend-mode:plus-lighter}.c0{fill:#ffe000;fill-opacity:0.8}.c1{fill:#ffc400;fill-opacity:0.5}.c2{fill:#ffdc10;fill-opacity:0.5}.c3{fill:#eab000;fill-opacity:0.5}.c4{fill:#eab000;fill-opacity:0.3}.c5{fill:#ffdc10;fill-opacity:0.6}.c6{fill:#f5b800;fill-opacity:0.6}.c7{fill:#f5b800;fill-opacity:0.5}.c8{fill:#9aa0c8;fill-opacity:0.4}.c9{fill:#ffc400;fill-opacity:0.8}.c10{fill:#ffdc10;fill-opacity:0.7}.c11{fill:#9aa0c8;fill-opacity:0.3}.c12{fill:#f5b800;fill-opacity:0.7}.c13{fill:#ffc400;fill-opacity:0.7}.c14{fill:#f4f4ff;fill-opacity:0.5}.c15{fill:#8890b8;fill-opacity:0.3}.c16{fill:#ffd000;fill-opacity:0.5}.c17{fill:#f4f4ff;fill-opacity:0.8}.c18{fill:#ffd000;fill-opacity:0.8}.c19{fill:#f4f4ff;fill-opacity:0.4}.c20{fill:#f5b800;fill-opacity:0.8}.c21{fill:#f5b800;fill-opacity:0.4}.c22{fill:#ffd000;fill-opacity:0.4}.c23{fill:#ffdc10;fill-opacity:0.8}.c24{fill:#ffd000;fill-opacity:0.7}.c25{fill:#c0c4e0;fill-opacity:0.1}.c26{fill:#ffc400;fill-opacity:0.3}.c27{fill:#ffdc10;fill-opacity:0.3}.c28{fill:#8890b8;fill-opacity:0.2}.c29{fill:#c0c4e0;fill-opacity:0.3}.c30{fill:#c0c4e0;fill-opacity:0.2}.c31{fill:#a8aed0;fill-opacity:0.3}.c32{fill:#eab000;fill-opacity:0.6}.c33{fill:#ffd000;fill-opacity:0.6}.c34{fill:#ffc400;fill-opacity:0.6}.c35{fill:#f5b800;fill-opacity:0.3}.c36{fill:#ffdc10;fill-opacity:0.4}.c37{fill:#8890b8;fill-opacity:0.5}.c38{fill:#ffd000;fill-opacity:0.3}.c39{fill:#eab000;fill-opacity:0.4}.c40{fill:#f4f4ff;fill-opacity:0.7}.c41{fill:#c0c4e0;fill-opacity:0.4}.c42{fill:#f4f4ff;fill-opacity:0.6}.c43{fill:#eab000;fill-opacity:0.8}.c44{fill:#a8aed0;fill-opacity:0.4}.c45{fill:#a8aed0;fill-opacity:0.2}.c46{fill:#ffc400;fill-opacity:0.4}.c47{fill:#eab000;fill-opacity:0.7}.c48{fill:#9aa0c8;fill-opacity:0.5}.c49{fill:#9aa0c8;fill-opacity:0.2}.c50{fill:#8890b8;fill-opacity:0.4}.c51{fill:#c0c4e0;fill-opacity:0.5}.c52{fill:#ffe800;fill-opacity:0.8}.c53{fill:#f5b800;fill-opacity:0.2}.c54{fill:#ffd000;fill-opacity:0.2}.c55{fill:#eab000;fill-opacity:0.2}.c56{fill:#8890b8;fill-opacity:0.1}.c57{fill:#ffd800;fill-opacity:0.8}.c58{fill:#ffdc10;fill-opacity:0.2}.c59{fill:#9aa0c8;fill-opacity:0.1}.c60{fill:#ffc400;fill-opacity:0.2}.c61{fill:#a8aed0;fill-opacity:0.5}.c62{fill:#a8aed0;fill-opacity:0.1}.c63{fill:#ffdc10;fill-opacity:0.1}.c64{fill:#f5b800;fill-opacity:0.1}.c65{fill:#ffc400;fill-opacity:0.1}.c66{fill:#eab000;fill-opacity:0.1}.c67{fill:#ffd000;fill-opacity:0.1}.c68{fill:#9aa0c8;fill-opacity:0.6}.c69{fill:#ffe060;fill-opacity:0.8}</style><svg id="map" style="left:324px;top:139px" width="820" height="520"><defs><filter id="bl" x="-5%" y="-5%" width="110%" height="110%"><feGaussianBlur stdDeviation="0.75"/></filter><filter id="gl" x="-5%" y="-5%" width="110%" height="110%"><feGaussianBlur stdDeviation="3"/></filter><g id="dots"><circle cx="31.5" cy="36.3" r="2.6" class="c0"/><circle cx="41.4" cy="38.5" r="2.5" class="c1"/><circle cx="63.6" cy="42.2" r="2.6" class="c1"/><circle cx="85.9" cy="46.0" r="2.7" class="c2"/><circle cx="108.1" cy="49.8" r="2.5" class="c3"/><circle cx="130.3" cy="53.5" r="2.7" class="c3"/><circle cx="152.6" cy="57.2" r="2.6" class="c2"/><circle cx="197.4" cy="77.5" r="3.0" class="c4"/><circle cx="57.3" cy="119.5" r="3.8" class="c5"/><circle cx="50.0" cy="153.0" r="2.5" class="c6"/><circle cx="50.0" cy="156.6" r="2.5" class="c7"/><circle cx="138.1" cy="118.2" r="2.2" class="c2"/><circle cx="141.5" cy="114.4" r="2.6" class="c8"/><circle cx="147.7" cy="104.7" r="2.3" class="c9"/><circle cx="151.4" cy="103.7" r="2.0" class="c10"/><circle cx="155.9" cy="102.2" r="2.4" class="c11"/><circle cx="160.3" cy="100.4" r="2.7" class="c2"/><circle cx="166.0" cy="99.2" r="2.2" class="c5"/><circle cx="171.1" cy="100.0" r="2.2" class="c12"/><circle cx="179.7" cy="98.7" r="2.7" class="c13"/><circle cx="185.3" cy="97.5" r="2.4" class="c5"/><circle cx="193.7" cy="97.0" r="2.0" class="c14"/><circle cx="199.4" cy="94.9" r="2.5" class="c15"/><circle cx="204.3" cy="93.0" r="2.8" class="c16"/><circle cx="207.7" cy="92.1" r="2.1" class="c17"/><circle cx="223.3" cy="84.9" r="2.2" class="c16"/><circle cx="227.1" cy="87.1" r="2.6" class="c18"/><circle cx="232.3" cy="88.7" r="2.3" class="c19"/><circle cx="235.4" cy="87.3" r="2.4" class="c20"/><circle cx="243.4" cy="86.6" r="2.5" class="c17"/><circle cx="249.5" cy="85.1" r="2.3" class="c16"/><circle cx="255.2" cy="84.9" r="2.6" class="c13"/><circle cx="259.0" cy="83.2" r="2.7" class="c3"/><circle cx="263.1" cy="82.4" r="2.1" class="c17"/><circle cx="266.9" cy="79.9" r="2.7" class="c7"/><circle cx="264.4" cy="75.7" r="2.4" class="c21"/><circle cx="261.9" cy="70.2" r="2.7" class="c22"/><circle cx="260.0" cy="62.0" r="2.5" class="c23"/><circle cx="264.0" cy="66.0" r="2.2" class="c24"/><circle cx="195.9" cy="108.5" r="1.9" class="c25"/><circle cx="195.3" cy="131.5" r="1.9" class="c26"/><circle cx="194.4" cy="140.4" r="2.0" class="c27"/><circle cx="232.9" cy="106.3" r="2.2" class="c16"/><circle cx="242.3" cy="107.3" r="1.6" class="c28"/><circle cx="248.3" cy="107.9" r="2.0" class="c29"/><circle cx="251.5" cy="107.3" r="2.2" class="c27"/><circle cx="245.0" cy="123.4" r="1.7" class="c30"/><circle cx="250.1" cy="124.0" r="1.9" class="c31"/><circle cx="257.7" cy="122.9" r="2.1" class="c30"/><circle cx="264.5" cy="122.1" r="1.9" class="c28"/><circle cx="267.8" cy="121.4" r="1.6" class="c21"/><circle cx="276.0" cy="123.0" r="1.9" class="c28"/><circle cx="263.0" cy="128.0" r="2.4" class="c32"/><circle cx="267.0" cy="127.0" r="2.4" class="c33"/><circle cx="244.0" cy="130.0" r="2.4" class="c34"/><circle cx="6.0" cy="179.0" r="2.4" class="c16"/><circle cx="16.0" cy="182.0" r="2.2" class="c35"/><circle cx="45.0" cy="177.0" r="2.5" class="c4"/><circle cx="64.0" cy="179.0" r="2.5" class="c11"/><circle cx="69.0" cy="181.0" r="2.8" class="c4"/><circle cx="79.0" cy="180.0" r="2.4" class="c22"/><circle cx="90.0" cy="178.0" r="2.7" class="c36"/><circle cx="111.0" cy="176.0" r="2.5" class="c37"/><circle cx="115.0" cy="174.0" r="2.6" class="c38"/><circle cx="0.8" cy="206.7" r="2.1" class="c22"/><circle cx="4.0" cy="206.8" r="2.8" class="c34"/><circle cx="8.9" cy="206.3" r="2.8" class="c16"/><circle cx="13.1" cy="206.4" r="2.3" class="c31"/><circle cx="18.4" cy="206.4" r="2.1" class="c7"/><circle cx="21.5" cy="205.4" r="2.6" class="c32"/><circle cx="32.7" cy="204.9" r="2.7" class="c39"/><circle cx="36.2" cy="204.4" r="2.5" class="c9"/><circle cx="40.4" cy="203.9" r="2.7" class="c22"/><circle cx="42.4" cy="204.7" r="2.1" class="c40"/><circle cx="45.7" cy="204.2" r="2.9" class="c3"/><circle cx="49.2" cy="204.1" r="2.3" class="c2"/><circle cx="52.1" cy="203.8" r="2.8" class="c13"/><circle cx="56.0" cy="202.7" r="2.6" class="c41"/><circle cx="59.3" cy="202.4" r="2.3" class="c5"/><circle cx="63.1" cy="202.8" r="2.1" class="c1"/><circle cx="66.6" cy="202.9" r="2.2" class="c3"/><circle cx="69.7" cy="203.1" r="2.6" class="c1"/><circle cx="74.3" cy="201.9" r="2.0" class="c42"/><circle cx="77.3" cy="202.5" r="2.3" class="c21"/><circle cx="81.6" cy="201.4" r="2.9" class="c5"/><circle cx="84.9" cy="202.3" r="2.8" class="c1"/><circle cx="88.0" cy="201.2" r="2.3" class="c7"/><circle cx="92.0" cy="201.3" r="2.4" class="c24"/><circle cx="94.2" cy="200.3" r="2.8" class="c1"/><circle cx="98.2" cy="201.3" r="2.3" class="c12"/><circle cx="99.9" cy="200.6" r="2.1" class="c3"/><circle cx="105.0" cy="201.5" r="3.0" class="c16"/><circle cx="107.0" cy="199.9" r="2.4" class="c1"/><circle cx="110.8" cy="200.2" r="2.4" class="c7"/><circle cx="114.4" cy="198.9" r="2.8" class="c16"/><circle cx="117.4" cy="199.6" r="2.8" class="c2"/><circle cx="120.9" cy="199.3" r="2.0" class="c43"/><circle cx="125.2" cy="199.2" r="2.2" class="c10"/><circle cx="128.2" cy="198.8" r="2.6" class="c44"/><circle cx="130.9" cy="198.9" r="2.1" class="c18"/><circle cx="135.0" cy="198.2" r="2.3" class="c18"/><circle cx="138.6" cy="199.6" r="2.7" class="c36"/><circle cx="142.7" cy="198.0" r="2.4" class="c6"/><circle cx="145.6" cy="197.6" r="2.3" class="c2"/><circle cx="149.5" cy="197.0" r="2.2" class="c32"/><circle cx="152.3" cy="197.8" r="2.7" class="c2"/><circle cx="154.7" cy="196.6" r="2.7" class="c6"/><circle cx="159.8" cy="196.5" r="2.2" class="c13"/><circle cx="163.2" cy="195.0" r="2.4" class="c11"/><circle cx="166.9" cy="197.4" r="2.2" class="c23"/><circle cx="169.2" cy="196.8" r="2.4" class="c10"/><circle cx="172.7" cy="194.9" r="2.0" class="c11"/><circle cx="176.4" cy="195.3" r="2.3" class="c12"/><circle cx="180.3" cy="195.1" r="2.7" class="c9"/><circle cx="181.1" cy="195.4" r="3.0" class="c2"/><circle cx="186.7" cy="194.9" r="2.9" class="c24"/><circle cx="189.7" cy="195.2" r="2.8" class="c31"/><circle cx="193.8" cy="194.7" r="2.3" class="c9"/><circle cx="197.0" cy="194.7" r="2.7" class="c2"/><circle cx="200.2" cy="194.8" r="2.8" class="c20"/><circle cx="202.7" cy="194.6" r="2.2" class="c16"/><circle cx="206.8" cy="193.8" r="2.3" class="c34"/><circle cx="211.1" cy="193.8" r="2.8" class="c9"/><circle cx="216.3" cy="193.0" r="2.5" class="c45"/><circle cx="222.1" cy="188.7" r="2.1" class="c22"/><circle cx="232.5" cy="190.8" r="2.0" class="c1"/><circle cx="140.4" cy="170.4" r="2.1" class="c42"/><circle cx="144.3" cy="169.0" r="2.1" class="c10"/><circle cx="147.8" cy="169.8" r="2.8" class="c12"/><circle cx="151.3" cy="168.3" r="2.5" class="c34"/><circle cx="155.0" cy="169.1" r="2.5" class="c18"/><circle cx="157.3" cy="167.8" r="2.1" class="c32"/><circle cx="161.9" cy="168.7" r="2.1" class="c24"/><circle cx="166.5" cy="168.4" r="2.3" class="c13"/><circle cx="169.8" cy="167.6" r="2.6" class="c33"/><circle cx="173.3" cy="168.1" r="2.4" class="c16"/><circle cx="177.3" cy="168.3" r="2.7" class="c12"/><circle cx="179.0" cy="166.9" r="2.2" class="c10"/><circle cx="183.2" cy="166.8" r="2.0" class="c5"/><circle cx="188.4" cy="166.1" r="2.4" class="c29"/><circle cx="190.9" cy="165.9" r="2.0" class="c37"/><circle cx="197.1" cy="166.1" r="2.3" class="c46"/><circle cx="200.3" cy="165.2" r="2.9" class="c18"/><circle cx="203.7" cy="167.1" r="2.5" class="c3"/><circle cx="207.2" cy="166.2" r="2.8" class="c3"/><circle cx="210.5" cy="166.1" r="2.6" class="c2"/><circle cx="214.6" cy="165.9" r="2.6" class="c43"/><circle cx="218.4" cy="164.8" r="2.5" class="c12"/><circle cx="220.6" cy="164.7" r="2.7" class="c1"/><circle cx="224.2" cy="166.9" r="2.8" class="c9"/><circle cx="228.9" cy="165.9" r="2.4" class="c36"/><circle cx="232.3" cy="164.8" r="2.3" class="c31"/><circle cx="236.6" cy="165.2" r="2.7" class="c22"/><circle cx="240.5" cy="164.7" r="2.6" class="c9"/><circle cx="243.9" cy="163.8" r="2.5" class="c5"/><circle cx="247.9" cy="164.6" r="2.4" class="c46"/><circle cx="250.8" cy="164.1" r="2.2" class="c5"/><circle cx="254.6" cy="164.8" r="2.0" class="c47"/><circle cx="257.6" cy="163.2" r="2.7" class="c1"/><circle cx="262.8" cy="165.1" r="2.8" class="c1"/><circle cx="264.0" cy="164.4" r="2.5" class="c24"/><circle cx="269.6" cy="165.3" r="2.8" class="c7"/><circle cx="271.9" cy="163.2" r="2.8" class="c43"/><circle cx="276.0" cy="162.0" r="2.4" class="c6"/><circle cx="279.6" cy="162.9" r="2.2" class="c31"/><circle cx="283.9" cy="163.4" r="2.6" class="c13"/><circle cx="286.1" cy="164.3" r="2.7" class="c36"/><circle cx="290.9" cy="163.3" r="2.8" class="c12"/><circle cx="295.2" cy="161.9" r="2.3" class="c7"/><circle cx="298.1" cy="162.2" r="2.3" class="c6"/><circle cx="305.9" cy="162.0" r="2.6" class="c1"/><circle cx="308.7" cy="163.0" r="2.3" class="c21"/><circle cx="313.4" cy="162.0" r="2.4" class="c20"/><circle cx="317.7" cy="160.7" r="2.2" class="c9"/><circle cx="320.2" cy="162.2" r="2.3" class="c48"/><circle cx="323.7" cy="162.7" r="2.4" class="c16"/><circle cx="327.4" cy="161.4" r="2.5" class="c44"/><circle cx="191.6" cy="157.7" r="2.4" class="c22"/><circle cx="196.6" cy="157.3" r="2.2" class="c32"/><circle cx="205.9" cy="157.0" r="2.3" class="c8"/><circle cx="211.4" cy="157.2" r="2.1" class="c21"/><circle cx="216.7" cy="156.9" r="2.3" class="c29"/><circle cx="221.4" cy="155.5" r="2.1" class="c16"/><circle cx="226.2" cy="155.3" r="2.3" class="c31"/><circle cx="231.4" cy="155.8" r="2.5" class="c29"/><circle cx="237.1" cy="156.1" r="2.4" class="c16"/><circle cx="243.8" cy="155.1" r="2.7" class="c45"/><circle cx="247.1" cy="154.4" r="2.1" class="c2"/><circle cx="252.2" cy="153.6" r="2.3" class="c22"/><circle cx="258.2" cy="155.7" r="2.3" class="c30"/><circle cx="266.9" cy="152.6" r="2.1" class="c3"/><circle cx="273.3" cy="153.0" r="2.1" class="c38"/><circle cx="200.3" cy="181.1" r="2.3" class="c10"/><circle cx="200.0" cy="183.7" r="2.7" class="c12"/><circle cx="201.6" cy="188.2" r="2.4" class="c12"/><circle cx="200.3" cy="192.0" r="2.5" class="c7"/><circle cx="201.9" cy="195.7" r="2.6" class="c8"/><circle cx="202.0" cy="201.0" r="2.5" class="c24"/><circle cx="202.6" cy="206.2" r="2.6" class="c47"/><circle cx="202.8" cy="209.2" r="2.5" class="c33"/><circle cx="201.3" cy="213.7" r="2.4" class="c16"/><circle cx="201.4" cy="217.5" r="2.6" class="c39"/><circle cx="203.5" cy="221.6" r="2.5" class="c12"/><circle cx="203.4" cy="225.7" r="2.3" class="c46"/><circle cx="203.2" cy="232.3" r="2.4" class="c13"/><circle cx="204.6" cy="234.8" r="2.5" class="c47"/><circle cx="204.4" cy="240.1" r="2.4" class="c2"/><circle cx="205.3" cy="244.5" r="2.8" class="c12"/><circle cx="206.9" cy="249.1" r="2.1" class="c3"/><circle cx="206.8" cy="253.5" r="2.0" class="c47"/><circle cx="249.5" cy="172.4" r="2.3" class="c13"/><circle cx="249.3" cy="176.5" r="1.9" class="c49"/><circle cx="250.3" cy="182.5" r="2.4" class="c21"/><circle cx="250.9" cy="188.8" r="2.2" class="c5"/><circle cx="252.7" cy="194.7" r="2.1" class="c24"/><circle cx="254.1" cy="199.5" r="2.0" class="c49"/><circle cx="255.1" cy="202.7" r="2.0" class="c15"/><circle cx="254.7" cy="207.9" r="1.8" class="c33"/><circle cx="254.6" cy="217.4" r="2.0" class="c34"/><circle cx="256.1" cy="220.0" r="2.1" class="c29"/><circle cx="258.1" cy="225.7" r="2.2" class="c8"/><circle cx="257.3" cy="229.7" r="2.1" class="c47"/><circle cx="257.7" cy="234.0" r="2.4" class="c13"/><circle cx="258.8" cy="240.3" r="2.5" class="c44"/><circle cx="260.1" cy="244.2" r="2.1" class="c34"/><circle cx="261.9" cy="254.5" r="2.4" class="c5"/><circle cx="262.4" cy="262.7" r="2.5" class="c29"/><circle cx="262.9" cy="267.3" r="2.4" class="c35"/><circle cx="262.8" cy="270.7" r="2.5" class="c3"/><circle cx="265.5" cy="275.8" r="2.0" class="c3"/><circle cx="266.3" cy="280.4" r="2.5" class="c11"/><circle cx="265.9" cy="285.0" r="1.8" class="c41"/><circle cx="267.7" cy="289.5" r="1.9" class="c31"/><circle cx="269.1" cy="298.5" r="2.2" class="c1"/><circle cx="270.8" cy="303.5" r="1.9" class="c49"/><circle cx="270.3" cy="309.2" r="1.9" class="c24"/><circle cx="271.7" cy="312.2" r="2.2" class="c50"/><circle cx="271.4" cy="316.4" r="1.8" class="c44"/><circle cx="272.5" cy="321.8" r="1.9" class="c49"/><circle cx="33.9" cy="180.4" r="2.5" class="c22"/><circle cx="35.8" cy="186.6" r="2.3" class="c29"/><circle cx="35.4" cy="193.7" r="1.9" class="c22"/><circle cx="36.0" cy="199.6" r="1.8" class="c22"/><circle cx="34.9" cy="205.7" r="1.8" class="c22"/><circle cx="34.5" cy="211.7" r="1.9" class="c16"/><circle cx="36.8" cy="219.5" r="2.6" class="c38"/><circle cx="35.1" cy="227.5" r="1.8" class="c46"/><circle cx="36.0" cy="227.0" r="4.0" class="c29"/><circle cx="21.0" cy="251.0" r="3.2" class="c36"/><circle cx="28.0" cy="250.0" r="2.2" class="c15"/><circle cx="43.0" cy="250.0" r="2.7" class="c4"/><circle cx="54.0" cy="250.0" r="2.4" class="c22"/><circle cx="68.0" cy="250.0" r="3.1" class="c46"/><circle cx="96.0" cy="248.0" r="3.3" class="c50"/><circle cx="121.0" cy="245.0" r="2.4" class="c22"/><circle cx="151.0" cy="241.0" r="2.9" class="c4"/><circle cx="182.0" cy="237.7" r="2.7" class="c37"/><circle cx="161.0" cy="250.0" r="2.6" class="c51"/><circle cx="114.0" cy="253.0" r="2.3" class="c2"/><circle cx="76.0" cy="252.0" r="2.4" class="c31"/><circle cx="180.0" cy="219.5" r="2.3" class="c5"/><circle cx="182.3" cy="221.9" r="2.5" class="c10"/><circle cx="186.1" cy="223.5" r="2.4" class="c3"/><circle cx="190.8" cy="225.5" r="2.1" class="c13"/><circle cx="156.0" cy="259.5" r="2.8" class="c33"/><circle cx="161.1" cy="258.9" r="2.0" class="c32"/><circle cx="165.0" cy="260.1" r="2.5" class="c3"/><circle cx="167.6" cy="258.9" r="2.6" class="c47"/><circle cx="172.1" cy="258.2" r="2.3" class="c5"/><circle cx="175.7" cy="258.2" r="2.4" class="c33"/><circle cx="178.9" cy="258.5" r="2.6" class="c13"/><circle cx="181.7" cy="257.2" r="2.4" class="c23"/><circle cx="186.8" cy="256.4" r="2.0" class="c3"/><circle cx="189.9" cy="256.5" r="2.3" class="c34"/><circle cx="192.6" cy="256.3" r="2.6" class="c6"/><circle cx="196.8" cy="256.0" r="2.5" class="c43"/><circle cx="200.7" cy="256.3" r="2.8" class="c10"/><circle cx="202.9" cy="255.8" r="2.6" class="c33"/><circle cx="205.9" cy="254.8" r="2.4" class="c16"/><circle cx="210.9" cy="256.1" r="2.2" class="c11"/><circle cx="214.6" cy="253.9" r="2.8" class="c47"/><circle cx="218.2" cy="253.9" r="2.3" class="c47"/><circle cx="222.5" cy="253.6" r="2.9" class="c20"/><circle cx="226.4" cy="253.3" r="2.9" class="c48"/><circle cx="228.9" cy="252.9" r="2.8" class="c10"/><circle cx="233.4" cy="253.4" r="2.4" class="c12"/><circle cx="236.8" cy="252.5" r="2.3" class="c23"/><circle cx="241.7" cy="252.9" r="2.3" class="c20"/><circle cx="243.8" cy="251.8" r="2.0" class="c32"/><circle cx="248.7" cy="251.5" r="2.5" class="c6"/><circle cx="250.8" cy="251.2" r="2.1" class="c32"/><circle cx="253.8" cy="250.3" r="3.0" class="c32"/><circle cx="258.7" cy="249.5" r="2.1" class="c34"/><circle cx="263.6" cy="250.9" r="2.7" class="c23"/><circle cx="266.3" cy="249.4" r="2.9" class="c3"/><circle cx="270.6" cy="249.4" r="2.0" class="c20"/><circle cx="274.0" cy="248.8" r="2.1" class="c31"/><circle cx="276.8" cy="249.6" r="2.5" class="c10"/><circle cx="280.0" cy="248.3" r="2.0" class="c51"/><circle cx="284.8" cy="247.5" r="2.0" class="c33"/><circle cx="287.9" cy="247.4" r="2.9" class="c5"/><circle cx="292.1" cy="247.0" r="2.8" class="c31"/><circle cx="296.4" cy="245.3" r="2.3" class="c20"/><circle cx="300.6" cy="244.1" r="2.1" class="c47"/><circle cx="303.4" cy="244.0" r="2.8" class="c7"/><circle cx="307.3" cy="243.4" r="2.4" class="c20"/><circle cx="311.4" cy="244.0" r="2.4" class="c7"/><circle cx="314.3" cy="242.7" r="2.8" class="c16"/><circle cx="318.4" cy="242.4" r="2.8" class="c7"/><circle cx="321.2" cy="240.7" r="2.3" class="c2"/><circle cx="326.8" cy="240.5" r="2.4" class="c10"/><circle cx="329.9" cy="239.7" r="2.5" class="c2"/><circle cx="332.9" cy="239.7" r="2.7" class="c18"/><circle cx="337.5" cy="239.7" r="2.4" class="c34"/><circle cx="340.9" cy="239.9" r="2.4" class="c23"/><circle cx="345.2" cy="238.3" r="2.3" class="c50"/><circle cx="348.7" cy="237.5" r="3.0" class="c9"/><circle cx="352.7" cy="237.3" r="2.7" class="c31"/><circle cx="356.4" cy="238.3" r="2.6" class="c43"/><circle cx="360.0" cy="236.6" r="2.4" class="c34"/><circle cx="362.3" cy="235.7" r="2.9" class="c24"/><circle cx="367.0" cy="237.3" r="2.3" class="c5"/><circle cx="371.7" cy="236.7" r="2.3" class="c6"/><circle cx="375.4" cy="234.9" r="2.5" class="c41"/><circle cx="161.2" cy="257.8" r="2.2" class="c47"/><circle cx="162.6" cy="262.7" r="2.4" class="c21"/><circle cx="160.2" cy="277.7" r="2.0" class="c21"/><circle cx="162.2" cy="288.2" r="2.1" class="c24"/><circle cx="162.5" cy="289.4" r="2.1" class="c16"/><circle cx="162.3" cy="295.6" r="2.2" class="c36"/><circle cx="162.9" cy="300.7" r="2.0" class="c13"/><circle cx="162.8" cy="304.6" r="2.5" class="c32"/><circle cx="17.5" cy="297.1" r="2.7" class="c16"/><circle cx="29.9" cy="297.0" r="2.3" class="c3"/><circle cx="46.3" cy="297.5" r="2.9" class="c22"/><circle cx="58.6" cy="297.2" r="2.9" class="c46"/><circle cx="69.1" cy="296.6" r="2.8" class="c2"/><circle cx="84.8" cy="297.0" r="2.7" class="c22"/><circle cx="1.4" cy="320.5" r="2.4" class="c49"/><circle cx="10.0" cy="320.2" r="2.1" class="c30"/><circle cx="22.7" cy="320.5" r="2.1" class="c49"/><circle cx="30.3" cy="320.7" r="2.1" class="c45"/><circle cx="41.2" cy="320.1" r="2.0" class="c28"/><circle cx="49.8" cy="320.8" r="2.1" class="c26"/><circle cx="60.6" cy="320.0" r="2.1" class="c30"/><circle cx="68.7" cy="320.6" r="2.2" class="c26"/><circle cx="78.1" cy="320.3" r="2.5" class="c30"/><circle cx="88.2" cy="320.7" r="2.5" class="c49"/><circle cx="116.0" cy="295.0" r="2.8" class="c39"/><circle cx="129.0" cy="293.0" r="2.6" class="c1"/><circle cx="137.0" cy="331.0" r="2.7" class="c3"/><circle cx="56.0" cy="279.0" r="2.3" class="c2"/><circle cx="85.0" cy="266.0" r="2.6" class="c16"/><circle cx="42.0" cy="343.2" r="2.2" class="c17"/><circle cx="52.8" cy="342.8" r="2.0" class="c1"/><circle cx="62.0" cy="342.5" r="2.1" class="c22"/><circle cx="71.0" cy="342.3" r="2.4" class="c34"/><circle cx="80.7" cy="342.4" r="2.5" class="c39"/><circle cx="88.6" cy="342.3" r="2.0" class="c7"/><circle cx="96.7" cy="342.0" r="2.2" class="c52"/><circle cx="96.7" cy="337.3" r="2.6" class="c16"/><circle cx="23.6" cy="404.1" r="3.2" class="c35"/><circle cx="23.6" cy="417.4" r="2.6" class="c47"/><circle cx="24.7" cy="435.9" r="2.0" class="c2"/><circle cx="25.7" cy="450.0" r="3.2" class="c2"/><circle cx="26.0" cy="465.3" r="3.4" class="c39"/><circle cx="27.0" cy="476.4" r="2.3" class="c3"/><circle cx="28.0" cy="492.4" r="2.7" class="c39"/><circle cx="28.9" cy="504.4" r="2.4" class="c39"/><circle cx="10.6" cy="439.0" r="2.3" class="c32"/><circle cx="49.2" cy="511.3" r="2.6" class="c27"/><circle cx="55.5" cy="500.2" r="2.8" class="c26"/><circle cx="61.6" cy="489.4" r="2.6" class="c25"/><circle cx="67.7" cy="478.0" r="2.8" class="c38"/><circle cx="79.1" cy="467.8" r="2.7" class="c53"/><circle cx="95.0" cy="460.0" r="2.3" class="c35"/><circle cx="106.9" cy="453.6" r="2.3" class="c25"/><circle cx="125.1" cy="448.8" r="2.2" class="c54"/><circle cx="139.3" cy="444.9" r="2.4" class="c55"/><circle cx="150.6" cy="437.6" r="2.6" class="c28"/><circle cx="162.7" cy="432.1" r="2.0" class="c56"/><circle cx="173.6" cy="421.2" r="2.7" class="c25"/><circle cx="177.0" cy="417.6" r="2.5" class="c57"/><circle cx="173.0" cy="419.0" r="2.2" class="c57"/><circle cx="181.4" cy="368.5" r="2.6" class="c13"/><circle cx="178.0" cy="374.3" r="2.2" class="c33"/><circle cx="174.0" cy="383.5" r="2.1" class="c3"/><circle cx="172.0" cy="390.5" r="2.3" class="c29"/><circle cx="171.8" cy="396.0" r="2.6" class="c3"/><circle cx="173.4" cy="401.1" r="2.1" class="c24"/><circle cx="201.8" cy="414.2" r="2.0" class="c45"/><circle cx="213.7" cy="411.8" r="2.1" class="c31"/><circle cx="225.1" cy="408.3" r="2.7" class="c29"/><circle cx="238.2" cy="406.5" r="2.6" class="c29"/><circle cx="251.8" cy="405.8" r="2.7" class="c22"/><circle cx="261.9" cy="402.7" r="2.3" class="c21"/><circle cx="249.0" cy="430.0" r="2.2" class="c17"/><circle cx="96.7" cy="507.7" r="2.1" class="c7"/><circle cx="107.0" cy="507.7" r="1.9" class="c16"/><circle cx="117.2" cy="507.7" r="2.0" class="c16"/><circle cx="127.5" cy="507.7" r="2.1" class="c16"/><circle cx="137.7" cy="507.7" r="1.9" class="c7"/><circle cx="148.0" cy="507.7" r="2.0" class="c7"/><circle cx="158.2" cy="507.7" r="2.0" class="c16"/><circle cx="168.5" cy="507.7" r="2.1" class="c1"/><circle cx="178.7" cy="507.7" r="1.9" class="c16"/><circle cx="189.0" cy="507.7" r="2.1" class="c1"/><circle cx="199.2" cy="507.7" r="1.9" class="c16"/><circle cx="209.5" cy="507.7" r="2.0" class="c3"/><circle cx="219.7" cy="507.7" r="2.0" class="c2"/><circle cx="230.0" cy="507.7" r="2.2" class="c2"/><circle cx="240.2" cy="507.7" r="1.9" class="c16"/><circle cx="250.5" cy="507.7" r="2.1" class="c2"/><circle cx="260.7" cy="507.7" r="1.9" class="c1"/><circle cx="266.0" cy="516.8" r="4.5" class="c36"/><circle cx="366.1" cy="36.8" r="2.3" class="c27"/><circle cx="370.0" cy="35.4" r="2.5" class="c1"/><circle cx="371.6" cy="32.8" r="2.3" class="c33"/><circle cx="376.5" cy="34.7" r="2.7" class="c31"/><circle cx="383.7" cy="33.6" r="2.3" class="c36"/><circle cx="387.2" cy="32.3" r="2.7" class="c29"/><circle cx="390.1" cy="33.3" r="2.3" class="c2"/><circle cx="394.1" cy="33.6" r="2.1" class="c33"/><circle cx="401.0" cy="32.6" r="2.3" class="c11"/><circle cx="408.0" cy="33.3" r="2.7" class="c29"/><circle cx="412.0" cy="32.0" r="2.3" class="c6"/><circle cx="416.0" cy="32.4" r="2.6" class="c3"/><circle cx="419.0" cy="32.8" r="2.7" class="c37"/><circle cx="422.7" cy="31.9" r="2.4" class="c11"/><circle cx="366.5" cy="36.5" r="2.3" class="c1"/><circle cx="367.1" cy="40.0" r="2.5" class="c34"/><circle cx="372.5" cy="44.1" r="2.4" class="c8"/><circle cx="375.6" cy="44.0" r="2.0" class="c10"/><circle cx="379.6" cy="46.9" r="2.1" class="c22"/><circle cx="382.3" cy="51.4" r="2.4" class="c2"/><circle cx="382.9" cy="54.2" r="2.3" class="c29"/><circle cx="386.7" cy="59.0" r="2.0" class="c5"/><circle cx="390.5" cy="63.2" r="2.3" class="c13"/><circle cx="257.0" cy="64.5" r="2.7" class="c29"/><circle cx="258.5" cy="66.9" r="2.4" class="c33"/><circle cx="260.9" cy="71.4" r="2.7" class="c44"/><circle cx="264.0" cy="75.4" r="2.2" class="c24"/><circle cx="267.4" cy="79.8" r="2.4" class="c1"/><circle cx="268.3" cy="85.3" r="2.7" class="c46"/><circle cx="270.1" cy="90.6" r="2.6" class="c47"/><circle cx="270.8" cy="94.9" r="2.2" class="c24"/><circle cx="271.3" cy="98.7" r="2.2" class="c36"/><circle cx="272.7" cy="102.7" r="2.0" class="c24"/><circle cx="273.9" cy="108.0" r="2.3" class="c34"/><circle cx="275.0" cy="112.4" r="2.6" class="c31"/><circle cx="276.2" cy="116.7" r="2.0" class="c15"/><circle cx="276.9" cy="120.9" r="2.6" class="c50"/><circle cx="277.7" cy="126.7" r="2.1" class="c11"/><circle cx="280.2" cy="130.5" r="2.1" class="c7"/><circle cx="282.0" cy="136.8" r="2.1" class="c41"/><circle cx="285.1" cy="140.7" r="2.1" class="c50"/><circle cx="316.4" cy="102.4" r="2.3" class="c45"/><circle cx="322.1" cy="102.2" r="2.1" class="c44"/><circle cx="327.0" cy="101.0" r="2.2" class="c11"/><circle cx="332.6" cy="102.2" r="2.2" class="c34"/><circle cx="346.7" cy="101.9" r="2.1" class="c16"/><circle cx="350.1" cy="101.6" r="2.1" class="c31"/><circle cx="356.6" cy="101.4" r="2.2" class="c8"/><circle cx="360.4" cy="100.8" r="2.7" class="c16"/><circle cx="370.0" cy="98.4" r="2.5" class="c2"/><circle cx="378.2" cy="99.6" r="2.6" class="c32"/><circle cx="379.7" cy="98.5" r="2.4" class="c1"/><circle cx="386.6" cy="98.6" r="2.7" class="c31"/><circle cx="394.2" cy="99.2" r="2.0" class="c21"/><circle cx="398.5" cy="100.7" r="2.7" class="c29"/><circle cx="410.0" cy="100.3" r="2.4" class="c28"/><circle cx="417.5" cy="99.6" r="2.8" class="c41"/><circle cx="423.1" cy="100.4" r="2.0" class="c21"/><circle cx="432.1" cy="97.2" r="2.8" class="c31"/><circle cx="426.7" cy="32.3" r="2.9" class="c32"/><circle cx="429.7" cy="33.5" r="2.6" class="c10"/><circle cx="432.4" cy="34.7" r="2.5" class="c6"/><circle cx="435.4" cy="34.7" r="2.5" class="c23"/><circle cx="440.3" cy="36.3" r="2.9" class="c6"/><circle cx="442.3" cy="36.2" r="2.0" class="c6"/><circle cx="444.8" cy="38.0" r="2.4" class="c12"/><circle cx="448.6" cy="39.1" r="2.5" class="c2"/><circle cx="450.4" cy="41.5" r="2.3" class="c13"/><circle cx="454.8" cy="42.5" r="2.9" class="c18"/><circle cx="455.7" cy="42.4" r="2.8" class="c12"/><circle cx="459.8" cy="45.0" r="2.4" class="c5"/><circle cx="462.1" cy="45.8" r="2.9" class="c10"/><circle cx="465.3" cy="47.7" r="2.8" class="c10"/><circle cx="466.8" cy="50.6" r="2.5" class="c12"/><circle cx="468.7" cy="51.4" r="2.3" class="c33"/><circle cx="472.7" cy="54.5" r="2.8" class="c20"/><circle cx="473.5" cy="54.7" r="2.1" class="c20"/><circle cx="475.3" cy="59.0" r="2.7" class="c23"/><circle cx="478.7" cy="60.7" r="2.1" class="c47"/><circle cx="479.3" cy="66.1" r="2.3" class="c18"/><circle cx="480.4" cy="67.3" r="2.9" class="c23"/><circle cx="480.5" cy="70.7" r="2.6" class="c3"/><circle cx="480.0" cy="73.6" r="2.3" class="c13"/><circle cx="482.7" cy="77.9" r="2.3" class="c40"/><circle cx="482.6" cy="80.4" r="2.6" class="c2"/><circle cx="481.8" cy="82.6" r="2.3" class="c33"/><circle cx="481.7" cy="85.7" r="2.2" class="c37"/><circle cx="482.3" cy="88.6" r="2.6" class="c47"/><circle cx="483.6" cy="92.2" r="2.4" class="c12"/><circle cx="484.3" cy="95.6" r="2.7" class="c12"/><circle cx="484.8" cy="99.6" r="2.1" class="c16"/><circle cx="484.7" cy="101.2" r="2.8" class="c34"/><circle cx="484.9" cy="104.6" r="2.2" class="c17"/><circle cx="485.3" cy="108.3" r="2.2" class="c20"/><circle cx="485.4" cy="109.4" r="2.0" class="c20"/><circle cx="426.2" cy="80.9" r="2.8" class="c23"/><circle cx="429.5" cy="83.1" r="2.2" class="c34"/><circle cx="431.4" cy="86.5" r="2.4" class="c18"/><circle cx="434.0" cy="87.2" r="2.2" class="c34"/><circle cx="437.3" cy="89.3" r="2.2" class="c20"/><circle cx="437.5" cy="90.5" r="2.7" class="c42"/><circle cx="441.9" cy="92.7" r="2.8" class="c10"/><circle cx="443.4" cy="92.8" r="2.1" class="c18"/><circle cx="446.7" cy="95.1" r="2.1" class="c33"/><circle cx="449.3" cy="97.5" r="2.6" class="c48"/><circle cx="450.4" cy="98.9" r="2.4" class="c18"/><circle cx="452.2" cy="100.7" r="2.3" class="c40"/><circle cx="455.1" cy="101.3" r="2.1" class="c40"/><circle cx="455.8" cy="104.3" r="2.3" class="c1"/><circle cx="458.6" cy="106.2" r="2.5" class="c1"/><circle cx="460.9" cy="108.3" r="2.4" class="c29"/><circle cx="463.6" cy="108.7" r="2.8" class="c3"/><circle cx="465.9" cy="110.3" r="2.7" class="c42"/><circle cx="360.8" cy="92.6" r="2.8" class="c46"/><circle cx="363.4" cy="91.1" r="2.3" class="c47"/><circle cx="367.1" cy="89.8" r="2.7" class="c13"/><circle cx="371.5" cy="89.7" r="2.0" class="c7"/><circle cx="373.7" cy="90.3" r="2.3" class="c29"/><circle cx="378.3" cy="89.2" r="2.2" class="c11"/><circle cx="379.5" cy="89.7" r="2.0" class="c7"/><circle cx="384.8" cy="88.9" r="2.3" class="c3"/><circle cx="386.6" cy="88.0" r="2.5" class="c8"/><circle cx="390.4" cy="85.9" r="2.6" class="c22"/><circle cx="394.3" cy="87.9" r="2.2" class="c1"/><circle cx="395.9" cy="85.6" r="2.5" class="c46"/><circle cx="400.1" cy="85.8" r="2.1" class="c31"/><circle cx="403.0" cy="84.5" r="2.7" class="c34"/><circle cx="406.3" cy="84.3" r="2.8" class="c10"/><circle cx="410.9" cy="84.3" r="2.2" class="c12"/><circle cx="413.6" cy="84.8" r="2.1" class="c6"/><circle cx="417.7" cy="84.0" r="2.3" class="c33"/><circle cx="419.3" cy="83.9" r="2.7" class="c33"/><circle cx="422.8" cy="82.6" r="2.4" class="c31"/><circle cx="480.3" cy="64.3" r="2.4" class="c7"/><circle cx="482.8" cy="67.6" r="2.3" class="c7"/><circle cx="486.4" cy="70.6" r="2.9" class="c29"/><circle cx="488.4" cy="72.8" r="2.4" class="c33"/><circle cx="492.2" cy="75.4" r="2.9" class="c23"/><circle cx="492.5" cy="76.6" r="2.4" class="c1"/><circle cx="498.4" cy="78.6" r="2.3" class="c13"/><circle cx="498.4" cy="81.9" r="3.2" class="c1"/><circle cx="503.2" cy="83.1" r="2.9" class="c41"/><circle cx="503.7" cy="87.4" r="3.1" class="c21"/><circle cx="506.8" cy="88.7" r="2.7" class="c34"/><circle cx="509.5" cy="90.1" r="2.5" class="c49"/><circle cx="512.5" cy="93.4" r="2.7" class="c23"/><circle cx="514.7" cy="95.6" r="2.7" class="c12"/><circle cx="515.6" cy="99.3" r="2.5" class="c21"/><circle cx="519.3" cy="100.4" r="3.0" class="c32"/><circle cx="521.3" cy="103.9" r="3.2" class="c31"/><circle cx="524.4" cy="105.9" r="2.4" class="c5"/><circle cx="525.9" cy="108.5" r="2.9" class="c13"/><circle cx="528.2" cy="110.2" r="2.5" class="c18"/><circle cx="531.5" cy="111.0" r="2.9" class="c22"/><circle cx="531.8" cy="114.3" r="2.7" class="c32"/><circle cx="535.3" cy="119.8" r="2.5" class="c3"/><circle cx="536.0" cy="119.8" r="2.9" class="c1"/><circle cx="538.5" cy="119.8" r="3.1" class="c16"/><circle cx="542.1" cy="125.5" r="2.6" class="c50"/><circle cx="541.4" cy="126.3" r="2.3" class="c7"/><circle cx="545.3" cy="129.0" r="2.8" class="c6"/><circle cx="546.0" cy="131.7" r="2.4" class="c22"/><circle cx="547.6" cy="134.6" r="2.8" class="c3"/><circle cx="550.7" cy="137.2" r="2.5" class="c32"/><circle cx="551.0" cy="139.3" r="2.8" class="c44"/><circle cx="555.4" cy="143.0" r="3.1" class="c1"/><circle cx="558.8" cy="144.4" r="2.5" class="c2"/><circle cx="560.3" cy="149.6" r="2.5" class="c46"/><circle cx="339.4" cy="48.8" r="2.3" class="c39"/><circle cx="339.9" cy="53.9" r="2.2" class="c11"/><circle cx="339.6" cy="58.7" r="2.6" class="c33"/><circle cx="339.6" cy="63.2" r="2.0" class="c36"/><circle cx="340.0" cy="67.4" r="2.6" class="c44"/><circle cx="341.1" cy="71.1" r="2.2" class="c50"/><circle cx="341.0" cy="75.9" r="2.6" class="c6"/><circle cx="341.6" cy="81.7" r="2.3" class="c31"/><circle cx="343.0" cy="84.1" r="2.2" class="c15"/><circle cx="342.8" cy="90.0" r="2.5" class="c1"/><circle cx="343.4" cy="94.2" r="2.4" class="c6"/><circle cx="343.7" cy="97.8" r="2.0" class="c35"/><circle cx="345.0" cy="102.0" r="2.1" class="c26"/><circle cx="344.2" cy="108.4" r="2.1" class="c34"/><circle cx="344.6" cy="110.3" r="2.6" class="c32"/><circle cx="346.1" cy="117.4" r="2.3" class="c38"/><circle cx="347.3" cy="121.1" r="2.8" class="c16"/><circle cx="346.2" cy="125.8" r="2.6" class="c22"/><circle cx="347.4" cy="128.7" r="2.6" class="c31"/><circle cx="346.8" cy="134.7" r="2.7" class="c34"/><circle cx="347.6" cy="137.7" r="2.6" class="c12"/><circle cx="349.3" cy="140.1" r="2.3" class="c6"/><circle cx="349.0" cy="144.5" r="2.6" class="c24"/><circle cx="350.2" cy="149.9" r="2.2" class="c32"/><circle cx="349.4" cy="152.7" r="2.5" class="c20"/><circle cx="349.1" cy="158.1" r="2.9" class="c43"/><circle cx="350.6" cy="159.8" r="2.5" class="c18"/><circle cx="350.7" cy="164.5" r="2.9" class="c21"/><circle cx="350.6" cy="166.9" r="2.5" class="c23"/><circle cx="390.7" cy="100.8" r="2.9" class="c6"/><circle cx="389.4" cy="104.4" r="2.5" class="c33"/><circle cx="389.8" cy="109.5" r="2.7" class="c9"/><circle cx="391.8" cy="111.9" r="3.0" class="c3"/><circle cx="392.2" cy="116.8" r="2.8" class="c23"/><circle cx="393.0" cy="118.8" r="2.3" class="c33"/><circle cx="394.3" cy="122.4" r="2.6" class="c18"/><circle cx="392.1" cy="125.0" r="2.9" class="c18"/><circle cx="394.4" cy="128.3" r="2.7" class="c33"/><circle cx="393.4" cy="131.8" r="2.4" class="c7"/><circle cx="394.5" cy="135.7" r="2.8" class="c18"/><circle cx="395.2" cy="140.7" r="2.2" class="c18"/><circle cx="396.3" cy="144.0" r="2.6" class="c23"/><circle cx="396.8" cy="146.7" r="2.1" class="c51"/><circle cx="394.9" cy="147.7" r="2.3" class="c16"/><circle cx="396.5" cy="153.7" r="2.3" class="c33"/><circle cx="397.0" cy="156.6" r="2.5" class="c23"/><circle cx="397.1" cy="160.2" r="2.5" class="c7"/><circle cx="397.9" cy="164.4" r="2.4" class="c10"/><circle cx="399.3" cy="166.7" r="2.0" class="c32"/><circle cx="398.7" cy="171.3" r="2.3" class="c13"/><circle cx="398.9" cy="175.7" r="2.8" class="c12"/><circle cx="399.3" cy="177.7" r="2.3" class="c9"/><circle cx="400.2" cy="181.5" r="2.5" class="c50"/><circle cx="400.8" cy="185.3" r="2.6" class="c7"/><circle cx="402.0" cy="187.5" r="2.0" class="c2"/><circle cx="280.7" cy="127.3" r="2.0" class="c22"/><circle cx="283.0" cy="134.2" r="2.7" class="c49"/><circle cx="282.4" cy="137.9" r="2.4" class="c16"/><circle cx="288.4" cy="184.1" r="2.1" class="c31"/><circle cx="287.6" cy="192.6" r="2.3" class="c36"/><circle cx="289.0" cy="201.1" r="2.5" class="c38"/><circle cx="289.1" cy="206.7" r="2.5" class="c32"/><circle cx="288.1" cy="214.0" r="2.5" class="c31"/><circle cx="290.0" cy="219.1" r="2.1" class="c1"/><circle cx="290.2" cy="222.2" r="2.7" class="c33"/><circle cx="289.1" cy="231.8" r="2.8" class="c7"/><circle cx="291.4" cy="241.5" r="2.0" class="c39"/><circle cx="293.5" cy="248.9" r="2.4" class="c8"/><circle cx="293.9" cy="253.8" r="2.1" class="c39"/><circle cx="294.7" cy="260.0" r="2.1" class="c30"/><circle cx="293.6" cy="266.6" r="2.5" class="c15"/><circle cx="260.9" cy="72.3" r="2.5" class="c5"/><circle cx="261.0" cy="77.9" r="2.3" class="c29"/><circle cx="261.9" cy="92.2" r="2.5" class="c6"/><circle cx="262.6" cy="98.4" r="1.8" class="c26"/><circle cx="263.3" cy="101.7" r="2.0" class="c16"/><circle cx="262.2" cy="107.3" r="2.0" class="c31"/><circle cx="263.8" cy="116.9" r="2.0" class="c1"/><circle cx="264.8" cy="120.2" r="1.9" class="c1"/><circle cx="267.1" cy="132.4" r="1.9" class="c36"/><circle cx="266.3" cy="139.2" r="2.5" class="c27"/><circle cx="266.8" cy="147.5" r="2.1" class="c33"/><circle cx="267.2" cy="158.7" r="2.1" class="c5"/><circle cx="268.3" cy="163.3" r="2.1" class="c3"/><circle cx="267.6" cy="171.1" r="2.0" class="c11"/><circle cx="267.1" cy="179.7" r="2.0" class="c49"/><circle cx="268.4" cy="189.1" r="1.8" class="c50"/><circle cx="267.8" cy="195.1" r="2.4" class="c4"/><circle cx="268.8" cy="222.5" r="2.1" class="c27"/><circle cx="270.1" cy="225.5" r="2.1" class="c34"/><circle cx="270.3" cy="232.4" r="2.4" class="c21"/><circle cx="272.1" cy="251.9" r="2.3" class="c39"/><circle cx="271.9" cy="258.0" r="2.5" class="c15"/><circle cx="271.5" cy="270.9" r="2.0" class="c2"/><circle cx="366.3" cy="11.8" r="2.4" class="c46"/><circle cx="367.4" cy="25.0" r="2.0" class="c29"/><circle cx="365.0" cy="31.5" r="2.4" class="c1"/><circle cx="369.1" cy="41.7" r="2.1" class="c28"/><circle cx="371.2" cy="61.8" r="2.3" class="c21"/><circle cx="371.8" cy="73.3" r="1.9" class="c28"/><circle cx="372.8" cy="88.3" r="2.2" class="c39"/><circle cx="373.4" cy="94.7" r="1.9" class="c3"/><circle cx="373.4" cy="98.6" r="1.9" class="c38"/><circle cx="372.4" cy="107.1" r="2.1" class="c27"/><circle cx="374.8" cy="116.4" r="1.9" class="c1"/><circle cx="376.0" cy="141.5" r="2.2" class="c39"/><circle cx="376.4" cy="155.8" r="2.2" class="c3"/><circle cx="317.3" cy="63.1" r="1.9" class="c21"/><circle cx="316.8" cy="76.5" r="2.1" class="c2"/><circle cx="317.5" cy="78.9" r="2.4" class="c35"/><circle cx="317.8" cy="91.6" r="2.3" class="c26"/><circle cx="317.8" cy="99.6" r="2.5" class="c22"/><circle cx="319.2" cy="103.6" r="1.9" class="c30"/><circle cx="321.1" cy="117.1" r="1.9" class="c31"/><circle cx="256.0" cy="63.5" r="2.3" class="c29"/><circle cx="258.8" cy="66.9" r="2.1" class="c34"/><circle cx="259.2" cy="69.3" r="2.1" class="c31"/><circle cx="263.0" cy="72.2" r="2.1" class="c7"/><circle cx="261.7" cy="77.4" r="2.1" class="c36"/><circle cx="264.5" cy="83.3" r="2.1" class="c36"/><circle cx="267.8" cy="85.6" r="2.5" class="c36"/><circle cx="282.9" cy="85.8" r="2.3" class="c33"/><circle cx="292.0" cy="86.0" r="1.9" class="c26"/><circle cx="300.8" cy="84.3" r="2.1" class="c6"/><circle cx="308.3" cy="84.5" r="2.2" class="c31"/><circle cx="314.1" cy="81.7" r="2.2" class="c15"/><circle cx="322.1" cy="81.8" r="1.9" class="c38"/><circle cx="325.4" cy="82.2" r="1.9" class="c2"/><circle cx="339.0" cy="82.0" r="2.5" class="c28"/><circle cx="343.8" cy="79.3" r="2.0" class="c31"/><circle cx="351.2" cy="79.7" r="1.9" class="c39"/><circle cx="286.9" cy="108.4" r="2.0" class="c45"/><circle cx="293.0" cy="108.7" r="2.5" class="c22"/><circle cx="300.6" cy="108.4" r="1.8" class="c33"/><circle cx="305.3" cy="108.6" r="2.2" class="c29"/><circle cx="309.4" cy="106.5" r="1.9" class="c11"/><circle cx="316.4" cy="105.5" r="2.4" class="c15"/><circle cx="323.1" cy="105.3" r="2.6" class="c32"/><circle cx="329.6" cy="103.4" r="1.9" class="c39"/><circle cx="334.2" cy="104.4" r="2.1" class="c16"/><circle cx="340.9" cy="102.3" r="2.4" class="c45"/><circle cx="345.9" cy="102.5" r="2.2" class="c7"/><circle cx="359.4" cy="100.7" r="2.4" class="c4"/><circle cx="363.9" cy="99.7" r="2.3" class="c35"/><circle cx="370.2" cy="100.5" r="2.0" class="c35"/><circle cx="275.2" cy="122.5" r="2.3" class="c15"/><circle cx="287.9" cy="122.0" r="2.4" class="c33"/><circle cx="295.2" cy="121.7" r="2.5" class="c38"/><circle cx="302.0" cy="121.6" r="2.0" class="c46"/><circle cx="306.1" cy="120.3" r="2.4" class="c16"/><circle cx="312.6" cy="118.3" r="2.6" class="c49"/><circle cx="325.9" cy="119.1" r="2.4" class="c11"/><circle cx="336.4" cy="117.6" r="1.8" class="c38"/><circle cx="344.0" cy="116.7" r="1.8" class="c30"/><circle cx="349.5" cy="115.9" r="2.4" class="c5"/><circle cx="353.1" cy="113.9" r="2.4" class="c3"/><circle cx="361.9" cy="115.4" r="2.5" class="c3"/><circle cx="369.1" cy="112.1" r="2.2" class="c29"/><circle cx="379.8" cy="111.7" r="1.9" class="c31"/><circle cx="385.1" cy="112.2" r="2.1" class="c16"/><circle cx="366.0" cy="38.0" r="2.2" class="c17"/><circle cx="376.0" cy="46.0" r="2.4" class="c17"/><circle cx="324.9" cy="76.8" r="2.1" class="c22"/><circle cx="238.9" cy="116.8" r="2.7" class="c56"/><circle cx="330.2" cy="106.5" r="2.5" class="c34"/><circle cx="302.0" cy="78.0" r="2.2" class="c22"/><circle cx="279.9" cy="69.0" r="2.5" class="c39"/><circle cx="338.1" cy="76.1" r="1.8" class="c45"/><circle cx="244.8" cy="86.1" r="2.2" class="c16"/><circle cx="286.9" cy="135.5" r="2.0" class="c2"/><circle cx="233.7" cy="106.3" r="2.6" class="c5"/><circle cx="331.1" cy="56.7" r="1.9" class="c26"/><circle cx="346.6" cy="83.8" r="1.9" class="c55"/><circle cx="255.5" cy="58.3" r="2.0" class="c31"/><circle cx="265.9" cy="138.2" r="2.4" class="c49"/><circle cx="308.3" cy="138.9" r="2.5" class="c26"/><circle cx="354.8" cy="60.0" r="2.5" class="c15"/><circle cx="326.0" cy="77.0" r="1.8" class="c21"/><circle cx="267.4" cy="75.7" r="1.9" class="c5"/><circle cx="273.8" cy="84.2" r="2.6" class="c28"/><circle cx="278.9" cy="88.1" r="2.1" class="c33"/><circle cx="374.5" cy="135.9" r="2.6" class="c31"/><circle cx="241.9" cy="100.3" r="2.6" class="c56"/><circle cx="354.8" cy="66.8" r="2.4" class="c30"/><circle cx="248.0" cy="109.6" r="2.6" class="c30"/><circle cx="227.7" cy="68.2" r="2.2" class="c21"/><circle cx="324.3" cy="101.6" r="2.1" class="c2"/><circle cx="300.9" cy="67.9" r="2.8" class="c3"/><circle cx="293.2" cy="126.5" r="2.5" class="c31"/><circle cx="350.2" cy="130.1" r="2.6" class="c28"/><circle cx="314.2" cy="139.5" r="2.0" class="c22"/><circle cx="247.4" cy="65.0" r="2.0" class="c46"/><circle cx="302.3" cy="63.9" r="2.8" class="c6"/><circle cx="267.9" cy="75.1" r="1.8" class="c30"/><circle cx="293.3" cy="90.7" r="2.6" class="c38"/><circle cx="283.5" cy="72.6" r="2.3" class="c39"/><circle cx="235.0" cy="91.4" r="1.9" class="c11"/><circle cx="358.4" cy="62.2" r="1.8" class="c2"/><circle cx="306.2" cy="124.2" r="2.3" class="c30"/><circle cx="245.9" cy="59.1" r="2.6" class="c7"/><circle cx="313.9" cy="134.0" r="2.4" class="c39"/><circle cx="278.5" cy="60.2" r="2.5" class="c50"/><circle cx="323.7" cy="135.4" r="2.2" class="c39"/><circle cx="270.2" cy="60.9" r="2.6" class="c38"/><circle cx="253.5" cy="69.8" r="2.0" class="c36"/><circle cx="295.7" cy="55.2" r="2.6" class="c58"/><circle cx="232.8" cy="91.7" r="2.3" class="c49"/><circle cx="285.1" cy="127.5" r="2.4" class="c35"/><circle cx="318.7" cy="88.4" r="2.7" class="c59"/><circle cx="315.1" cy="140.7" r="2.1" class="c59"/><circle cx="351.6" cy="127.8" r="2.3" class="c21"/><circle cx="350.7" cy="103.7" r="1.8" class="c21"/><circle cx="284.5" cy="137.3" r="2.3" class="c26"/><circle cx="283.7" cy="60.2" r="2.6" class="c1"/><circle cx="334.4" cy="93.3" r="2.6" class="c4"/><circle cx="357.2" cy="110.9" r="2.7" class="c31"/><circle cx="275.5" cy="93.2" r="2.4" class="c11"/><circle cx="272.4" cy="99.9" r="2.4" class="c32"/><circle cx="344.8" cy="110.4" r="2.7" class="c31"/><circle cx="317.6" cy="94.0" r="2.3" class="c1"/><circle cx="243.9" cy="114.9" r="2.6" class="c38"/><circle cx="345.0" cy="72.4" r="2.0" class="c15"/><circle cx="437.5" cy="51.6" r="2.6" class="c58"/><circle cx="427.6" cy="69.9" r="2.6" class="c56"/><circle cx="469.6" cy="42.4" r="2.3" class="c31"/><circle cx="459.8" cy="41.1" r="2.5" class="c21"/><circle cx="409.0" cy="52.7" r="2.1" class="c49"/><circle cx="461.3" cy="75.5" r="2.3" class="c1"/><circle cx="397.7" cy="111.5" r="2.0" class="c53"/><circle cx="385.8" cy="98.5" r="2.4" class="c7"/><circle cx="473.8" cy="50.7" r="2.5" class="c45"/><circle cx="460.9" cy="83.5" r="2.1" class="c45"/><circle cx="437.5" cy="68.9" r="2.5" class="c59"/><circle cx="396.2" cy="64.0" r="2.1" class="c29"/><circle cx="456.6" cy="81.5" r="1.9" class="c38"/><circle cx="392.2" cy="46.5" r="1.9" class="c46"/><circle cx="388.6" cy="75.0" r="2.7" class="c49"/><circle cx="379.1" cy="66.5" r="2.6" class="c30"/><circle cx="429.2" cy="93.5" r="2.2" class="c28"/><circle cx="405.2" cy="49.8" r="2.2" class="c58"/><circle cx="406.4" cy="87.7" r="1.9" class="c25"/><circle cx="462.3" cy="60.2" r="1.9" class="c45"/><circle cx="427.1" cy="55.3" r="2.7" class="c15"/><circle cx="413.6" cy="50.3" r="2.5" class="c16"/><circle cx="406.8" cy="79.6" r="2.2" class="c30"/><circle cx="437.2" cy="87.6" r="2.1" class="c49"/><circle cx="417.3" cy="115.3" r="2.6" class="c15"/><circle cx="463.6" cy="106.5" r="1.8" class="c16"/><circle cx="445.8" cy="92.2" r="2.4" class="c15"/><circle cx="413.5" cy="72.1" r="2.7" class="c2"/><circle cx="412.6" cy="49.1" r="2.3" class="c30"/><circle cx="452.0" cy="111.2" r="2.4" class="c22"/><circle cx="469.9" cy="85.3" r="2.2" class="c35"/><circle cx="475.9" cy="95.8" r="2.3" class="c49"/><circle cx="457.3" cy="45.2" r="1.9" class="c25"/><circle cx="454.0" cy="74.1" r="2.3" class="c60"/><circle cx="393.3" cy="56.5" r="2.0" class="c28"/><circle cx="412.1" cy="51.6" r="2.2" class="c59"/><circle cx="424.7" cy="43.6" r="2.4" class="c27"/><circle cx="474.5" cy="61.0" r="2.0" class="c21"/><circle cx="451.9" cy="51.1" r="2.6" class="c46"/><circle cx="395.1" cy="114.0" r="2.3" class="c46"/><circle cx="431.5" cy="69.8" r="2.1" class="c58"/><circle cx="454.3" cy="94.9" r="2.0" class="c28"/><circle cx="396.8" cy="88.5" r="2.3" class="c27"/><circle cx="384.3" cy="105.9" r="2.6" class="c36"/><circle cx="439.0" cy="89.6" r="2.2" class="c39"/><circle cx="328.2" cy="146.3" r="2.3" class="c21"/><circle cx="330.5" cy="146.8" r="2.9" class="c20"/><circle cx="333.0" cy="144.8" r="2.4" class="c21"/><circle cx="337.2" cy="145.8" r="2.4" class="c13"/><circle cx="338.2" cy="145.5" r="2.6" class="c47"/><circle cx="344.0" cy="144.3" r="2.3" class="c10"/><circle cx="345.6" cy="143.0" r="2.4" class="c18"/><circle cx="348.7" cy="144.4" r="2.3" class="c10"/><circle cx="350.9" cy="143.5" r="2.1" class="c12"/><circle cx="355.6" cy="143.9" r="3.0" class="c22"/><circle cx="360.8" cy="142.5" r="2.5" class="c24"/><circle cx="364.7" cy="142.5" r="2.1" class="c21"/><circle cx="367.9" cy="142.3" r="2.9" class="c41"/><circle cx="371.8" cy="141.1" r="3.0" class="c6"/><circle cx="374.3" cy="141.9" r="2.6" class="c10"/><circle cx="378.5" cy="141.2" r="3.1" class="c50"/><circle cx="382.6" cy="141.9" r="2.4" class="c23"/><circle cx="384.7" cy="142.0" r="2.1" class="c21"/><circle cx="390.7" cy="140.3" r="3.1" class="c8"/><circle cx="393.9" cy="139.1" r="2.4" class="c17"/><circle cx="401.0" cy="139.0" r="2.2" class="c47"/><circle cx="403.2" cy="140.7" r="2.5" class="c34"/><circle cx="408.9" cy="137.5" r="2.5" class="c44"/><circle cx="410.9" cy="138.3" r="3.0" class="c16"/><circle cx="413.8" cy="138.8" r="3.0" class="c3"/><circle cx="421.4" cy="138.5" r="2.1" class="c33"/><circle cx="424.3" cy="137.0" r="2.7" class="c24"/><circle cx="427.2" cy="138.1" r="3.0" class="c34"/><circle cx="430.0" cy="135.8" r="2.6" class="c9"/><circle cx="432.6" cy="136.8" r="2.7" class="c29"/><circle cx="435.7" cy="136.4" r="2.2" class="c3"/><circle cx="442.8" cy="136.3" r="2.5" class="c46"/><circle cx="446.6" cy="135.8" r="2.2" class="c18"/><circle cx="451.5" cy="134.0" r="2.5" class="c15"/><circle cx="454.5" cy="135.0" r="2.6" class="c45"/><circle cx="455.8" cy="134.0" r="3.0" class="c13"/><circle cx="462.4" cy="130.8" r="2.7" class="c7"/><circle cx="326.9" cy="154.8" r="2.6" class="c13"/><circle cx="330.3" cy="156.3" r="2.7" class="c1"/><circle cx="333.4" cy="157.1" r="2.6" class="c37"/><circle cx="335.8" cy="156.7" r="2.3" class="c32"/><circle cx="339.6" cy="155.3" r="2.4" class="c10"/><circle cx="343.6" cy="155.2" r="2.1" class="c24"/><circle cx="346.1" cy="153.4" r="2.4" class="c37"/><circle cx="348.6" cy="153.9" r="2.2" class="c43"/><circle cx="352.3" cy="153.2" r="3.1" class="c15"/><circle cx="355.8" cy="154.2" r="2.4" class="c9"/><circle cx="359.0" cy="152.8" r="2.1" class="c3"/><circle cx="362.3" cy="152.5" r="2.6" class="c23"/><circle cx="365.0" cy="154.4" r="2.2" class="c3"/><circle cx="369.1" cy="153.9" r="3.1" class="c12"/><circle cx="372.0" cy="153.6" r="2.2" class="c10"/><circle cx="373.9" cy="150.5" r="3.1" class="c3"/><circle cx="379.3" cy="152.1" r="2.6" class="c5"/><circle cx="383.9" cy="151.6" r="2.1" class="c39"/><circle cx="384.1" cy="152.5" r="3.0" class="c33"/><circle cx="389.4" cy="151.7" r="2.4" class="c29"/><circle cx="391.8" cy="151.0" r="2.3" class="c43"/><circle cx="396.0" cy="148.6" r="2.9" class="c43"/><circle cx="398.1" cy="149.5" r="2.4" class="c46"/><circle cx="401.4" cy="148.0" r="3.0" class="c7"/><circle cx="404.5" cy="149.7" r="2.9" class="c20"/><circle cx="408.3" cy="149.5" r="2.2" class="c6"/><circle cx="410.9" cy="149.2" r="3.0" class="c1"/><circle cx="414.4" cy="148.5" r="3.0" class="c18"/><circle cx="419.3" cy="149.2" r="2.2" class="c8"/><circle cx="422.0" cy="147.9" r="2.9" class="c44"/><circle cx="425.0" cy="146.7" r="2.5" class="c16"/><circle cx="427.5" cy="146.3" r="2.9" class="c43"/><circle cx="431.0" cy="146.0" r="3.1" class="c17"/><circle cx="434.4" cy="146.3" r="2.4" class="c20"/><circle cx="440.1" cy="146.3" r="2.5" class="c13"/><circle cx="444.8" cy="144.2" r="2.7" class="c5"/><circle cx="447.2" cy="143.9" r="2.2" class="c31"/><circle cx="449.9" cy="144.8" r="2.3" class="c2"/><circle cx="452.5" cy="145.0" r="2.8" class="c12"/><circle cx="456.6" cy="144.4" r="2.6" class="c34"/><circle cx="460.6" cy="146.2" r="3.0" class="c23"/><circle cx="462.7" cy="145.1" r="2.7" class="c12"/><circle cx="328.1" cy="165.3" r="2.4" class="c18"/><circle cx="328.0" cy="164.8" r="2.2" class="c24"/><circle cx="331.1" cy="167.7" r="2.6" class="c1"/><circle cx="335.4" cy="163.9" r="2.2" class="c10"/><circle cx="340.0" cy="164.7" r="2.5" class="c7"/><circle cx="341.3" cy="164.2" r="2.6" class="c3"/><circle cx="346.4" cy="164.6" r="3.1" class="c33"/><circle cx="349.0" cy="163.8" r="2.6" class="c12"/><circle cx="352.8" cy="163.2" r="3.0" class="c42"/><circle cx="356.7" cy="163.0" r="2.3" class="c10"/><circle cx="359.3" cy="162.2" r="2.2" class="c24"/><circle cx="364.2" cy="163.2" r="2.4" class="c31"/><circle cx="365.7" cy="162.9" r="2.8" class="c29"/><circle cx="366.2" cy="163.5" r="3.0" class="c33"/><circle cx="372.1" cy="162.4" r="2.7" class="c9"/><circle cx="375.4" cy="160.1" r="2.2" class="c5"/><circle cx="379.2" cy="160.7" r="3.0" class="c39"/><circle cx="382.0" cy="161.7" r="2.7" class="c2"/><circle cx="383.6" cy="160.6" r="2.2" class="c20"/><circle cx="386.5" cy="160.9" r="2.7" class="c13"/><circle cx="390.9" cy="160.3" r="3.1" class="c21"/><circle cx="394.0" cy="161.1" r="2.6" class="c13"/><circle cx="398.5" cy="158.0" r="2.2" class="c46"/><circle cx="402.6" cy="159.3" r="2.8" class="c9"/><circle cx="404.9" cy="158.8" r="2.1" class="c10"/><circle cx="408.7" cy="158.5" r="2.1" class="c1"/><circle cx="409.9" cy="159.2" r="2.6" class="c23"/><circle cx="414.8" cy="158.0" r="2.1" class="c61"/><circle cx="417.1" cy="157.0" r="2.8" class="c47"/><circle cx="421.3" cy="155.8" r="3.1" class="c44"/><circle cx="422.5" cy="158.7" r="2.4" class="c5"/><circle cx="427.7" cy="157.4" r="3.1" class="c33"/><circle cx="430.4" cy="155.9" r="2.5" class="c46"/><circle cx="431.8" cy="156.9" r="2.2" class="c46"/><circle cx="436.9" cy="156.0" r="2.7" class="c16"/><circle cx="437.4" cy="157.0" r="2.5" class="c6"/><circle cx="442.8" cy="157.8" r="2.8" class="c43"/><circle cx="451.0" cy="155.6" r="2.3" class="c46"/><circle cx="452.3" cy="154.9" r="2.9" class="c18"/><circle cx="457.0" cy="155.6" r="2.2" class="c3"/><circle cx="462.4" cy="154.4" r="2.9" class="c39"/><circle cx="327.0" cy="177.0" r="2.6" class="c10"/><circle cx="330.2" cy="177.8" r="2.9" class="c9"/><circle cx="333.2" cy="178.1" r="2.9" class="c33"/><circle cx="335.7" cy="175.6" r="2.5" class="c61"/><circle cx="340.0" cy="176.9" r="2.2" class="c24"/><circle cx="342.9" cy="176.1" r="2.5" class="c12"/><circle cx="348.8" cy="175.0" r="2.2" class="c13"/><circle cx="353.0" cy="174.4" r="3.1" class="c47"/><circle cx="357.1" cy="172.2" r="2.9" class="c13"/><circle cx="359.8" cy="175.3" r="2.5" class="c24"/><circle cx="365.8" cy="174.3" r="3.1" class="c10"/><circle cx="371.8" cy="172.6" r="2.9" class="c34"/><circle cx="377.4" cy="172.5" r="2.5" class="c49"/><circle cx="381.8" cy="172.8" r="2.8" class="c9"/><circle cx="385.3" cy="171.6" r="2.4" class="c8"/><circle cx="388.9" cy="170.9" r="2.1" class="c32"/><circle cx="391.3" cy="172.2" r="2.6" class="c33"/><circle cx="394.8" cy="171.8" r="2.6" class="c22"/><circle cx="399.2" cy="170.8" r="2.8" class="c46"/><circle cx="399.4" cy="170.9" r="2.6" class="c2"/><circle cx="404.1" cy="169.7" r="2.6" class="c7"/><circle cx="410.7" cy="168.7" r="2.7" class="c43"/><circle cx="413.4" cy="167.9" r="2.7" class="c23"/><circle cx="420.2" cy="169.5" r="3.0" class="c29"/><circle cx="423.1" cy="168.8" r="2.8" class="c39"/><circle cx="428.3" cy="167.9" r="2.4" class="c33"/><circle cx="430.5" cy="168.0" r="2.7" class="c41"/><circle cx="439.3" cy="165.9" r="3.1" class="c46"/><circle cx="446.9" cy="164.9" r="2.2" class="c36"/><circle cx="455.6" cy="165.6" r="3.0" class="c51"/><circle cx="456.5" cy="165.8" r="2.8" class="c19"/><circle cx="460.6" cy="165.4" r="2.3" class="c1"/><circle cx="463.0" cy="167.8" r="2.9" class="c2"/><circle cx="332.3" cy="151.4" r="2.9" class="c15"/><circle cx="334.3" cy="151.3" r="2.2" class="c2"/><circle cx="337.6" cy="150.8" r="3.2" class="c3"/><circle cx="342.8" cy="150.0" r="3.1" class="c10"/><circle cx="345.1" cy="149.1" r="2.5" class="c24"/><circle cx="348.8" cy="150.3" r="2.3" class="c12"/><circle cx="351.9" cy="149.0" r="3.1" class="c5"/><circle cx="355.0" cy="149.3" r="2.3" class="c9"/><circle cx="360.3" cy="148.8" r="2.8" class="c10"/><circle cx="362.4" cy="149.3" r="3.1" class="c21"/><circle cx="367.9" cy="148.0" r="2.6" class="c2"/><circle cx="367.9" cy="146.8" r="2.7" class="c8"/><circle cx="374.7" cy="148.8" r="2.7" class="c13"/><circle cx="375.0" cy="147.8" r="2.4" class="c34"/><circle cx="380.9" cy="146.3" r="3.1" class="c24"/><circle cx="385.0" cy="145.4" r="3.1" class="c16"/><circle cx="388.0" cy="145.1" r="3.1" class="c16"/><circle cx="390.6" cy="145.1" r="2.7" class="c33"/><circle cx="392.4" cy="146.2" r="2.4" class="c5"/><circle cx="397.6" cy="145.0" r="3.0" class="c2"/><circle cx="398.7" cy="148.3" r="3.2" class="c18"/><circle cx="404.1" cy="144.0" r="2.5" class="c47"/><circle cx="409.7" cy="145.9" r="2.9" class="c6"/><circle cx="411.3" cy="143.3" r="3.1" class="c18"/><circle cx="414.5" cy="145.4" r="2.7" class="c20"/><circle cx="416.0" cy="142.7" r="2.8" class="c32"/><circle cx="421.0" cy="144.1" r="2.7" class="c16"/><circle cx="426.7" cy="142.8" r="2.9" class="c24"/><circle cx="429.1" cy="142.9" r="3.2" class="c6"/><circle cx="432.0" cy="140.7" r="2.4" class="c24"/><circle cx="434.3" cy="141.0" r="3.1" class="c34"/><circle cx="438.9" cy="140.1" r="2.7" class="c47"/><circle cx="442.7" cy="142.4" r="2.3" class="c24"/><circle cx="443.8" cy="142.5" r="2.3" class="c2"/><circle cx="448.5" cy="139.4" r="2.4" class="c33"/><circle cx="452.8" cy="140.3" r="2.5" class="c37"/><circle cx="457.3" cy="140.1" r="3.1" class="c43"/><circle cx="458.8" cy="139.7" r="2.3" class="c23"/><circle cx="464.2" cy="138.2" r="2.9" class="c12"/><circle cx="395.0" cy="181.2" r="2.3" class="c13"/><circle cx="401.1" cy="180.7" r="2.4" class="c21"/><circle cx="403.5" cy="178.7" r="2.5" class="c41"/><circle cx="406.1" cy="179.1" r="2.6" class="c5"/><circle cx="408.8" cy="177.2" r="2.6" class="c24"/><circle cx="413.6" cy="176.6" r="2.1" class="c6"/><circle cx="414.1" cy="175.3" r="2.8" class="c12"/><circle cx="420.1" cy="174.5" r="2.4" class="c50"/><circle cx="423.0" cy="174.0" r="2.1" class="c6"/><circle cx="428.8" cy="171.5" r="2.0" class="c37"/><circle cx="429.0" cy="171.7" r="2.1" class="c1"/><circle cx="431.5" cy="169.6" r="2.8" class="c46"/><circle cx="435.4" cy="169.2" r="2.1" class="c33"/><circle cx="439.8" cy="168.8" r="2.2" class="c29"/><circle cx="441.8" cy="170.1" r="2.7" class="c8"/><circle cx="446.6" cy="166.4" r="2.9" class="c5"/><circle cx="449.6" cy="164.4" r="2.1" class="c43"/><circle cx="453.4" cy="166.1" r="2.6" class="c32"/><circle cx="456.7" cy="161.9" r="3.0" class="c13"/><circle cx="460.7" cy="163.4" r="2.2" class="c36"/><circle cx="464.1" cy="161.5" r="2.7" class="c47"/><circle cx="282.9" cy="145.0" r="3.0" class="c34"/><circle cx="283.9" cy="145.4" r="2.5" class="c47"/><circle cx="284.7" cy="150.0" r="2.6" class="c1"/><circle cx="285.6" cy="155.4" r="2.7" class="c47"/><circle cx="285.7" cy="158.0" r="2.3" class="c10"/><circle cx="284.5" cy="161.4" r="2.2" class="c44"/><circle cx="285.9" cy="165.3" r="2.5" class="c24"/><circle cx="286.9" cy="167.9" r="2.5" class="c5"/><circle cx="286.5" cy="172.2" r="3.0" class="c24"/><circle cx="287.3" cy="176.3" r="2.9" class="c21"/><circle cx="287.3" cy="179.7" r="3.0" class="c9"/><circle cx="303.8" cy="200.8" r="2.4" class="c47"/><circle cx="303.8" cy="205.0" r="2.1" class="c39"/><circle cx="303.8" cy="209.9" r="2.4" class="c12"/><circle cx="306.4" cy="213.5" r="2.6" class="c16"/><circle cx="307.0" cy="215.6" r="2.7" class="c24"/><circle cx="308.2" cy="220.6" r="2.6" class="c28"/><circle cx="309.7" cy="226.2" r="2.1" class="c34"/><circle cx="310.8" cy="228.4" r="2.4" class="c16"/><circle cx="311.1" cy="233.9" r="2.3" class="c7"/><circle cx="311.1" cy="237.5" r="2.6" class="c32"/><circle cx="313.0" cy="239.6" r="2.1" class="c1"/><circle cx="336.4" cy="174.5" r="2.3" class="c32"/><circle cx="339.2" cy="178.4" r="2.8" class="c7"/><circle cx="340.6" cy="179.6" r="3.0" class="c23"/><circle cx="340.7" cy="182.3" r="2.3" class="c20"/><circle cx="339.8" cy="185.7" r="3.0" class="c3"/><circle cx="341.9" cy="187.8" r="3.2" class="c47"/><circle cx="339.7" cy="191.6" r="2.4" class="c20"/><circle cx="340.1" cy="194.4" r="2.9" class="c41"/><circle cx="342.5" cy="197.3" r="3.0" class="c51"/><circle cx="343.3" cy="199.9" r="2.7" class="c13"/><circle cx="342.7" cy="203.0" r="3.0" class="c18"/><circle cx="344.4" cy="204.0" r="2.9" class="c31"/><circle cx="344.4" cy="209.3" r="2.9" class="c16"/><circle cx="343.8" cy="211.6" r="2.9" class="c20"/><circle cx="344.2" cy="215.6" r="3.2" class="c32"/><circle cx="344.8" cy="217.8" r="2.5" class="c9"/><circle cx="345.4" cy="218.5" r="3.0" class="c12"/><circle cx="345.4" cy="223.0" r="2.8" class="c32"/><circle cx="345.9" cy="226.1" r="3.1" class="c13"/><circle cx="349.7" cy="173.4" r="3.1" class="c20"/><circle cx="352.1" cy="177.1" r="2.8" class="c24"/><circle cx="352.4" cy="177.0" r="2.9" class="c43"/><circle cx="353.0" cy="178.2" r="2.5" class="c1"/><circle cx="353.9" cy="183.5" r="2.9" class="c33"/><circle cx="352.0" cy="185.6" r="3.2" class="c43"/><circle cx="351.4" cy="186.0" r="2.4" class="c43"/><circle cx="353.1" cy="190.9" r="2.2" class="c18"/><circle cx="353.0" cy="192.8" r="2.7" class="c13"/><circle cx="354.4" cy="196.0" r="2.5" class="c5"/><circle cx="355.1" cy="200.5" r="2.7" class="c6"/><circle cx="356.7" cy="201.2" r="2.5" class="c23"/><circle cx="355.8" cy="203.7" r="2.6" class="c6"/><circle cx="355.2" cy="209.3" r="2.9" class="c10"/><circle cx="357.3" cy="210.2" r="3.0" class="c12"/><circle cx="356.9" cy="213.5" r="3.1" class="c11"/><circle cx="357.8" cy="215.7" r="2.8" class="c61"/><circle cx="358.9" cy="218.8" r="2.3" class="c1"/><circle cx="358.4" cy="221.8" r="2.6" class="c1"/><circle cx="358.3" cy="224.6" r="2.3" class="c24"/><circle cx="359.4" cy="225.5" r="2.3" class="c43"/><circle cx="359.4" cy="228.2" r="2.9" class="c7"/><circle cx="360.8" cy="231.0" r="2.6" class="c47"/><circle cx="366.9" cy="240.6" r="2.6" class="c9"/><circle cx="368.7" cy="237.2" r="2.6" class="c3"/><circle cx="372.2" cy="236.7" r="3.0" class="c13"/><circle cx="373.3" cy="235.1" r="3.0" class="c43"/><circle cx="377.1" cy="233.1" r="2.7" class="c37"/><circle cx="379.3" cy="231.1" r="2.6" class="c13"/><circle cx="382.7" cy="230.0" r="3.0" class="c13"/><circle cx="383.4" cy="228.0" r="2.3" class="c20"/><circle cx="388.1" cy="228.1" r="2.3" class="c18"/><circle cx="390.2" cy="224.5" r="2.6" class="c14"/><circle cx="392.4" cy="223.8" r="2.7" class="c14"/><circle cx="396.1" cy="221.6" r="2.5" class="c16"/><circle cx="397.2" cy="219.6" r="2.6" class="c12"/><circle cx="400.5" cy="218.5" r="2.7" class="c13"/><circle cx="404.5" cy="216.7" r="2.7" class="c34"/><circle cx="405.9" cy="215.3" r="2.2" class="c7"/><circle cx="410.3" cy="210.4" r="2.3" class="c9"/><circle cx="411.3" cy="210.1" r="2.9" class="c18"/><circle cx="412.1" cy="209.7" r="2.6" class="c33"/><circle cx="416.8" cy="206.6" r="2.6" class="c34"/><circle cx="418.2" cy="203.0" r="2.6" class="c10"/><circle cx="420.8" cy="202.6" r="3.0" class="c20"/><circle cx="425.4" cy="200.8" r="2.5" class="c43"/><circle cx="426.7" cy="198.4" r="2.5" class="c6"/><circle cx="428.1" cy="197.8" r="2.3" class="c23"/><circle cx="428.7" cy="196.4" r="2.4" class="c6"/><circle cx="431.9" cy="191.9" r="2.6" class="c7"/><circle cx="434.8" cy="193.2" r="2.8" class="c6"/><circle cx="436.8" cy="189.1" r="2.4" class="c40"/><circle cx="439.7" cy="187.2" r="2.6" class="c61"/><circle cx="440.6" cy="185.9" r="2.5" class="c37"/><circle cx="444.1" cy="183.9" r="2.5" class="c3"/><circle cx="446.2" cy="181.3" r="2.6" class="c16"/><circle cx="447.7" cy="179.8" r="2.3" class="c23"/><circle cx="448.8" cy="178.7" r="3.1" class="c32"/><circle cx="455.0" cy="176.5" r="3.1" class="c17"/><circle cx="454.9" cy="174.6" r="2.3" class="c3"/><circle cx="458.2" cy="171.8" r="2.4" class="c13"/><circle cx="458.7" cy="169.3" r="2.7" class="c7"/><circle cx="461.4" cy="168.2" r="2.4" class="c47"/><circle cx="463.6" cy="166.9" r="2.9" class="c33"/><circle cx="466.4" cy="165.2" r="2.6" class="c40"/><circle cx="470.1" cy="162.3" r="2.3" class="c47"/><circle cx="472.3" cy="161.8" r="2.7" class="c2"/><circle cx="474.5" cy="159.1" r="2.7" class="c13"/><circle cx="474.9" cy="155.7" r="2.6" class="c33"/><circle cx="480.0" cy="154.0" r="3.0" class="c37"/><circle cx="482.0" cy="152.7" r="2.9" class="c42"/><circle cx="483.3" cy="150.4" r="3.0" class="c12"/><circle cx="486.2" cy="148.3" r="2.7" class="c20"/><circle cx="487.4" cy="145.9" r="2.5" class="c16"/><circle cx="489.4" cy="145.5" r="2.3" class="c10"/><circle cx="491.7" cy="140.8" r="2.3" class="c3"/><circle cx="495.4" cy="141.4" r="2.8" class="c47"/><circle cx="496.5" cy="140.0" r="2.4" class="c16"/><circle cx="498.9" cy="136.7" r="2.4" class="c13"/><circle cx="501.3" cy="134.1" r="2.3" class="c40"/><circle cx="503.7" cy="133.6" r="2.7" class="c47"/><circle cx="507.6" cy="130.5" r="2.5" class="c50"/><circle cx="509.1" cy="128.4" r="2.8" class="c33"/><circle cx="512.2" cy="126.9" r="3.0" class="c9"/><circle cx="514.8" cy="125.0" r="3.1" class="c34"/><circle cx="376.3" cy="143.5" r="2.9" class="c24"/><circle cx="378.1" cy="142.0" r="2.9" class="c17"/><circle cx="381.6" cy="143.5" r="3.0" class="c44"/><circle cx="384.2" cy="141.4" r="2.2" class="c13"/><circle cx="386.5" cy="141.4" r="2.8" class="c6"/><circle cx="391.0" cy="139.4" r="2.6" class="c23"/><circle cx="392.1" cy="138.6" r="2.6" class="c5"/><circle cx="395.4" cy="139.5" r="3.1" class="c43"/><circle cx="398.5" cy="139.3" r="3.0" class="c23"/><circle cx="401.2" cy="139.1" r="3.0" class="c18"/><circle cx="405.8" cy="138.2" r="2.9" class="c24"/><circle cx="408.0" cy="139.4" r="2.5" class="c12"/><circle cx="408.5" cy="138.8" r="2.6" class="c20"/><circle cx="412.7" cy="137.2" r="2.4" class="c23"/><circle cx="415.5" cy="135.0" r="2.5" class="c12"/><circle cx="417.5" cy="135.8" r="2.3" class="c47"/><circle cx="421.3" cy="135.2" r="2.6" class="c42"/><circle cx="422.7" cy="135.8" r="2.4" class="c40"/><circle cx="425.7" cy="134.7" r="2.4" class="c24"/><circle cx="431.1" cy="134.8" r="2.7" class="c43"/><circle cx="431.2" cy="133.9" r="2.7" class="c41"/><circle cx="434.2" cy="132.9" r="2.7" class="c33"/><circle cx="437.8" cy="133.3" r="2.4" class="c18"/><circle cx="441.0" cy="133.1" r="2.9" class="c5"/><circle cx="443.3" cy="132.5" r="2.8" class="c17"/><circle cx="445.8" cy="132.0" r="2.3" class="c51"/><circle cx="448.1" cy="130.5" r="2.6" class="c5"/><circle cx="451.0" cy="131.6" r="3.0" class="c33"/><circle cx="455.3" cy="131.3" r="2.4" class="c24"/><circle cx="457.3" cy="130.8" r="2.5" class="c17"/><circle cx="459.4" cy="130.3" r="2.4" class="c9"/><circle cx="463.1" cy="128.0" r="2.7" class="c32"/><circle cx="463.6" cy="129.0" r="2.6" class="c17"/><circle cx="468.8" cy="130.4" r="3.0" class="c9"/><circle cx="470.5" cy="127.3" r="2.9" class="c43"/><circle cx="473.0" cy="127.3" r="2.9" class="c20"/><circle cx="476.0" cy="125.9" r="2.4" class="c17"/><circle cx="479.0" cy="126.8" r="2.4" class="c13"/><circle cx="482.0" cy="126.2" r="2.2" class="c42"/><circle cx="485.2" cy="126.3" r="2.7" class="c42"/><circle cx="487.3" cy="126.2" r="2.6" class="c17"/><circle cx="493.4" cy="126.4" r="2.3" class="c23"/><circle cx="493.3" cy="124.3" r="2.3" class="c17"/><circle cx="496.4" cy="124.9" r="2.3" class="c40"/><circle cx="500.2" cy="125.5" r="2.4" class="c40"/><circle cx="502.5" cy="123.4" r="3.0" class="c12"/><circle cx="504.2" cy="123.1" r="3.0" class="c43"/><circle cx="508.9" cy="122.8" r="2.3" class="c23"/><circle cx="511.3" cy="122.9" r="2.7" class="c17"/><circle cx="513.4" cy="121.4" r="2.4" class="c12"/><circle cx="514.5" cy="120.0" r="2.7" class="c44"/><circle cx="498.5" cy="136.9" r="2.9" class="c8"/><circle cx="479.9" cy="138.3" r="2.9" class="c41"/><circle cx="490.2" cy="126.1" r="2.3" class="c23"/><circle cx="495.1" cy="141.2" r="2.7" class="c13"/><circle cx="516.3" cy="110.1" r="2.2" class="c18"/><circle cx="484.2" cy="137.0" r="2.7" class="c32"/><circle cx="467.9" cy="132.2" r="2.9" class="c13"/><circle cx="505.1" cy="133.4" r="2.8" class="c34"/><circle cx="470.9" cy="139.9" r="2.7" class="c20"/><circle cx="489.4" cy="137.0" r="2.7" class="c7"/><circle cx="485.5" cy="113.4" r="2.7" class="c51"/><circle cx="493.6" cy="120.3" r="2.4" class="c44"/><circle cx="498.9" cy="130.9" r="2.6" class="c47"/><circle cx="506.6" cy="130.1" r="2.9" class="c12"/><circle cx="484.4" cy="138.3" r="2.5" class="c9"/><circle cx="516.8" cy="130.1" r="2.7" class="c5"/><circle cx="464.1" cy="111.8" r="2.8" class="c7"/><circle cx="469.5" cy="117.8" r="3.0" class="c33"/><circle cx="511.9" cy="142.9" r="2.0" class="c2"/><circle cx="468.8" cy="139.6" r="2.1" class="c51"/><circle cx="472.2" cy="126.3" r="2.0" class="c2"/><circle cx="505.3" cy="135.6" r="2.2" class="c6"/><circle cx="471.5" cy="120.9" r="3.0" class="c39"/><circle cx="488.7" cy="127.0" r="2.1" class="c12"/><circle cx="486.3" cy="128.7" r="2.9" class="c47"/><circle cx="470.5" cy="129.5" r="2.7" class="c15"/><circle cx="505.1" cy="135.1" r="2.9" class="c7"/><circle cx="476.6" cy="120.2" r="2.9" class="c16"/><circle cx="474.0" cy="126.7" r="2.2" class="c11"/><circle cx="509.2" cy="137.5" r="2.6" class="c13"/><circle cx="489.4" cy="141.0" r="2.6" class="c34"/><circle cx="496.8" cy="121.8" r="2.9" class="c43"/><circle cx="518.9" cy="122.6" r="2.8" class="c7"/><circle cx="519.0" cy="127.3" r="2.3" class="c13"/><circle cx="496.6" cy="122.8" r="2.4" class="c10"/><circle cx="466.9" cy="137.1" r="3.0" class="c6"/><circle cx="472.6" cy="136.7" r="2.2" class="c36"/><circle cx="473.9" cy="142.4" r="2.6" class="c7"/><circle cx="489.0" cy="114.9" r="2.2" class="c10"/><circle cx="491.2" cy="117.1" r="2.7" class="c34"/><circle cx="471.7" cy="140.1" r="2.8" class="c8"/><circle cx="482.9" cy="115.2" r="2.1" class="c9"/><circle cx="509.4" cy="141.5" r="2.8" class="c7"/><circle cx="509.3" cy="119.7" r="3.0" class="c50"/><circle cx="484.4" cy="120.0" r="2.6" class="c18"/><circle cx="485.0" cy="131.8" r="2.7" class="c5"/><circle cx="467.6" cy="130.7" r="2.7" class="c33"/><circle cx="486.2" cy="126.9" r="2.5" class="c34"/><circle cx="481.6" cy="115.0" r="2.4" class="c34"/><circle cx="517.5" cy="109.8" r="2.3" class="c43"/><circle cx="491.3" cy="128.0" r="2.6" class="c34"/><circle cx="513.3" cy="114.1" r="2.3" class="c5"/><circle cx="511.8" cy="124.0" r="2.8" class="c13"/><circle cx="519.4" cy="112.6" r="2.3" class="c5"/><circle cx="515.0" cy="120.7" r="2.1" class="c37"/><circle cx="465.0" cy="121.8" r="2.1" class="c16"/><circle cx="482.5" cy="136.8" r="2.4" class="c13"/><circle cx="510.7" cy="113.3" r="2.2" class="c12"/><circle cx="476.7" cy="127.0" r="2.6" class="c6"/><circle cx="475.1" cy="130.1" r="2.4" class="c3"/><circle cx="482.9" cy="138.5" r="2.7" class="c3"/><circle cx="487.7" cy="142.8" r="2.5" class="c2"/><circle cx="481.5" cy="127.7" r="2.7" class="c43"/><circle cx="484.7" cy="113.5" r="2.6" class="c8"/><circle cx="479.2" cy="134.9" r="2.3" class="c9"/><circle cx="511.4" cy="132.7" r="3.0" class="c23"/><circle cx="496.9" cy="119.2" r="2.2" class="c5"/><circle cx="486.4" cy="113.5" r="3.0" class="c32"/><circle cx="482.2" cy="129.6" r="2.4" class="c1"/><circle cx="487.7" cy="125.2" r="2.3" class="c9"/><circle cx="489.8" cy="134.8" r="2.7" class="c3"/><circle cx="474.3" cy="131.0" r="3.0" class="c7"/><circle cx="505.6" cy="123.8" r="2.8" class="c12"/><circle cx="477.5" cy="134.3" r="2.8" class="c39"/><circle cx="464.2" cy="124.8" r="2.5" class="c1"/><circle cx="493.0" cy="121.0" r="2.5" class="c1"/><circle cx="511.1" cy="131.2" r="2.4" class="c61"/><circle cx="511.1" cy="124.7" r="2.4" class="c16"/><circle cx="471.0" cy="129.4" r="2.7" class="c1"/><circle cx="505.9" cy="138.7" r="2.7" class="c34"/><circle cx="502.9" cy="122.9" r="2.4" class="c33"/><circle cx="504.9" cy="121.3" r="2.2" class="c3"/><circle cx="487.3" cy="115.5" r="2.7" class="c8"/><circle cx="469.1" cy="110.6" r="2.1" class="c47"/><circle cx="486.8" cy="111.0" r="2.9" class="c18"/><circle cx="478.4" cy="111.1" r="2.7" class="c47"/><circle cx="467.6" cy="120.7" r="2.0" class="c20"/><circle cx="520.1" cy="123.8" r="2.5" class="c5"/><circle cx="517.5" cy="118.8" r="2.9" class="c2"/><circle cx="510.8" cy="117.0" r="2.3" class="c5"/><circle cx="519.3" cy="120.0" r="2.4" class="c2"/><circle cx="462.5" cy="124.0" r="2.5" class="c18"/><circle cx="502.0" cy="117.9" r="2.1" class="c6"/><circle cx="480.0" cy="115.3" r="2.9" class="c13"/><circle cx="497.3" cy="118.1" r="2.5" class="c33"/><circle cx="478.8" cy="124.3" r="2.3" class="c12"/><circle cx="469.0" cy="121.2" r="2.7" class="c32"/><circle cx="495.6" cy="138.5" r="2.3" class="c34"/><circle cx="488.5" cy="124.8" r="2.2" class="c39"/><circle cx="468.5" cy="133.4" r="2.9" class="c50"/><circle cx="512.5" cy="122.9" r="2.4" class="c23"/><circle cx="498.6" cy="126.6" r="2.4" class="c29"/><circle cx="517.8" cy="116.9" r="3.0" class="c43"/><circle cx="492.4" cy="133.7" r="2.9" class="c24"/><circle cx="476.3" cy="133.3" r="2.6" class="c9"/><circle cx="462.3" cy="117.3" r="2.3" class="c18"/><circle cx="505.5" cy="115.1" r="2.2" class="c41"/><circle cx="466.3" cy="119.0" r="2.7" class="c2"/><circle cx="497.6" cy="131.0" r="2.7" class="c3"/><circle cx="493.9" cy="140.4" r="2.2" class="c47"/><circle cx="512.8" cy="112.5" r="2.6" class="c12"/><circle cx="487.0" cy="140.5" r="2.3" class="c16"/><circle cx="471.8" cy="124.0" r="2.0" class="c10"/><circle cx="497.7" cy="122.9" r="2.3" class="c33"/><circle cx="469.6" cy="112.5" r="2.8" class="c23"/><circle cx="483.2" cy="127.4" r="2.4" class="c37"/><circle cx="510.1" cy="140.1" r="2.1" class="c3"/><circle cx="492.8" cy="116.7" r="2.5" class="c8"/><circle cx="469.4" cy="135.4" r="2.8" class="c10"/><circle cx="516.3" cy="111.0" r="2.3" class="c34"/><circle cx="494.8" cy="121.5" r="2.2" class="c10"/><circle cx="499.8" cy="110.0" r="2.3" class="c3"/><circle cx="489.0" cy="113.3" r="2.7" class="c10"/><circle cx="486.3" cy="123.9" r="2.3" class="c37"/><circle cx="477.7" cy="111.0" r="2.7" class="c18"/><circle cx="511.0" cy="119.6" r="2.0" class="c47"/><circle cx="467.2" cy="123.2" r="2.3" class="c36"/><circle cx="513.3" cy="123.3" r="2.6" class="c11"/><circle cx="466.0" cy="131.7" r="2.5" class="c10"/><circle cx="507.7" cy="122.1" r="2.5" class="c14"/><circle cx="489.6" cy="128.1" r="2.2" class="c42"/><circle cx="492.7" cy="114.1" r="2.1" class="c42"/><circle cx="476.9" cy="127.2" r="2.5" class="c42"/><circle cx="506.4" cy="128.8" r="2.6" class="c14"/><circle cx="505.9" cy="137.2" r="2.5" class="c40"/><circle cx="493.0" cy="124.3" r="2.1" class="c42"/><circle cx="499.5" cy="133.7" r="2.7" class="c42"/><circle cx="508.8" cy="122.7" r="2.0" class="c42"/><circle cx="492.6" cy="133.1" r="2.2" class="c19"/><circle cx="499.9" cy="118.0" r="2.7" class="c42"/><circle cx="476.4" cy="126.5" r="2.6" class="c14"/><circle cx="509.2" cy="114.5" r="2.1" class="c42"/><circle cx="498.1" cy="128.7" r="2.7" class="c14"/><circle cx="472.8" cy="127.0" r="2.3" class="c42"/><circle cx="486.8" cy="135.9" r="2.2" class="c40"/><circle cx="493.7" cy="120.4" r="2.7" class="c14"/><circle cx="483.0" cy="118.0" r="2.6" class="c40"/><circle cx="485.6" cy="116.1" r="2.5" class="c14"/><circle cx="493.0" cy="130.0" r="2.0" class="c19"/><circle cx="503.8" cy="135.6" r="2.1" class="c14"/><circle cx="488.1" cy="134.7" r="2.2" class="c17"/><circle cx="414.1" cy="209.4" r="3.1" class="c20"/><circle cx="416.3" cy="211.2" r="2.7" class="c23"/><circle cx="419.9" cy="212.5" r="2.5" class="c7"/><circle cx="421.8" cy="213.4" r="2.4" class="c29"/><circle cx="424.4" cy="218.3" r="2.5" class="c20"/><circle cx="427.2" cy="218.4" r="2.3" class="c16"/><circle cx="428.8" cy="219.5" r="2.7" class="c2"/><circle cx="431.5" cy="220.5" r="2.3" class="c9"/><circle cx="435.0" cy="224.1" r="2.5" class="c16"/><circle cx="438.5" cy="226.3" r="2.4" class="c9"/><circle cx="441.6" cy="226.5" r="2.6" class="c3"/><circle cx="443.2" cy="229.0" r="2.5" class="c36"/><circle cx="447.0" cy="230.6" r="2.3" class="c7"/><circle cx="446.8" cy="231.9" r="2.7" class="c50"/><circle cx="451.6" cy="233.6" r="2.1" class="c46"/><circle cx="454.2" cy="235.4" r="3.0" class="c47"/><circle cx="456.2" cy="238.4" r="2.5" class="c6"/><circle cx="460.5" cy="238.4" r="2.4" class="c2"/><circle cx="468.3" cy="243.7" r="2.4" class="c10"/><circle cx="470.7" cy="244.4" r="2.7" class="c47"/><circle cx="472.3" cy="247.8" r="2.8" class="c6"/><circle cx="425.2" cy="197.3" r="2.2" class="c5"/><circle cx="429.5" cy="201.9" r="2.5" class="c18"/><circle cx="432.2" cy="202.6" r="2.5" class="c2"/><circle cx="438.0" cy="204.2" r="2.2" class="c39"/><circle cx="440.0" cy="206.9" r="2.2" class="c43"/><circle cx="443.8" cy="209.7" r="2.9" class="c21"/><circle cx="446.3" cy="210.5" r="2.4" class="c36"/><circle cx="449.6" cy="213.0" r="2.5" class="c22"/><circle cx="452.6" cy="214.4" r="3.0" class="c43"/><circle cx="456.5" cy="217.9" r="2.2" class="c12"/><circle cx="459.9" cy="219.3" r="2.2" class="c13"/><circle cx="462.5" cy="221.4" r="2.5" class="c43"/><circle cx="465.0" cy="221.7" r="2.5" class="c20"/><circle cx="469.0" cy="224.8" r="2.9" class="c50"/><circle cx="470.4" cy="226.8" r="2.8" class="c33"/><circle cx="475.1" cy="229.5" r="2.4" class="c32"/><circle cx="477.2" cy="229.7" r="2.6" class="c18"/><circle cx="480.9" cy="231.5" r="2.5" class="c6"/><circle cx="482.4" cy="233.9" r="2.8" class="c33"/><circle cx="486.4" cy="233.6" r="2.1" class="c32"/><circle cx="439.3" cy="187.3" r="2.9" class="c16"/><circle cx="443.1" cy="189.1" r="2.4" class="c5"/><circle cx="445.0" cy="190.9" r="2.9" class="c43"/><circle cx="447.6" cy="190.8" r="3.0" class="c6"/><circle cx="450.9" cy="194.0" r="2.3" class="c9"/><circle cx="453.3" cy="194.1" r="2.7" class="c47"/><circle cx="455.7" cy="197.3" r="2.2" class="c29"/><circle cx="459.4" cy="198.1" r="2.9" class="c33"/><circle cx="462.8" cy="199.8" r="2.7" class="c16"/><circle cx="463.8" cy="202.8" r="3.1" class="c5"/><circle cx="467.1" cy="204.5" r="2.3" class="c13"/><circle cx="469.7" cy="205.7" r="2.4" class="c50"/><circle cx="475.7" cy="208.7" r="3.1" class="c32"/><circle cx="477.7" cy="209.3" r="2.6" class="c5"/><circle cx="480.9" cy="213.0" r="2.6" class="c5"/><circle cx="484.5" cy="212.3" r="2.3" class="c43"/><circle cx="486.5" cy="216.6" r="2.9" class="c3"/><circle cx="492.4" cy="220.3" r="2.5" class="c7"/><circle cx="495.3" cy="221.0" r="2.8" class="c15"/><circle cx="499.4" cy="222.8" r="2.3" class="c5"/><circle cx="500.3" cy="225.4" r="3.0" class="c3"/><circle cx="501.7" cy="225.0" r="2.6" class="c32"/><circle cx="507.4" cy="228.6" r="2.8" class="c9"/><circle cx="508.5" cy="231.6" r="2.1" class="c36"/><circle cx="455.3" cy="174.4" r="2.5" class="c41"/><circle cx="457.0" cy="175.5" r="2.4" class="c23"/><circle cx="459.8" cy="177.7" r="2.5" class="c46"/><circle cx="462.2" cy="179.8" r="2.3" class="c6"/><circle cx="464.5" cy="181.1" r="2.7" class="c8"/><circle cx="467.7" cy="183.3" r="2.6" class="c61"/><circle cx="471.8" cy="184.5" r="2.6" class="c3"/><circle cx="472.6" cy="186.1" r="2.2" class="c13"/><circle cx="476.1" cy="187.9" r="2.2" class="c36"/><circle cx="481.1" cy="192.6" r="2.7" class="c3"/><circle cx="484.6" cy="192.2" r="2.8" class="c1"/><circle cx="493.9" cy="199.2" r="2.8" class="c2"/><circle cx="495.5" cy="200.6" r="2.5" class="c7"/><circle cx="498.5" cy="200.0" r="2.2" class="c33"/><circle cx="502.5" cy="203.9" r="3.0" class="c15"/><circle cx="503.3" cy="204.5" r="2.8" class="c39"/><circle cx="505.8" cy="207.3" r="2.5" class="c33"/><circle cx="506.9" cy="208.4" r="3.1" class="c44"/><circle cx="511.7" cy="209.7" r="2.3" class="c11"/><circle cx="519.8" cy="213.4" r="2.8" class="c3"/><circle cx="521.8" cy="215.2" r="3.0" class="c8"/><circle cx="523.5" cy="216.2" r="2.5" class="c10"/><circle cx="528.7" cy="220.7" r="2.1" class="c33"/><circle cx="471.7" cy="156.5" r="2.7" class="c32"/><circle cx="474.4" cy="161.8" r="2.6" class="c2"/><circle cx="476.4" cy="163.4" r="2.2" class="c43"/><circle cx="479.6" cy="164.5" r="3.0" class="c6"/><circle cx="482.8" cy="165.7" r="2.8" class="c32"/><circle cx="484.3" cy="168.6" r="2.2" class="c20"/><circle cx="487.2" cy="168.2" r="2.4" class="c50"/><circle cx="491.2" cy="170.0" r="3.0" class="c24"/><circle cx="494.5" cy="172.4" r="3.1" class="c9"/><circle cx="496.1" cy="174.7" r="2.5" class="c47"/><circle cx="499.3" cy="176.1" r="2.4" class="c9"/><circle cx="502.6" cy="178.1" r="2.8" class="c33"/><circle cx="505.0" cy="180.3" r="2.2" class="c5"/><circle cx="507.2" cy="181.5" r="2.5" class="c48"/><circle cx="509.1" cy="183.6" r="2.7" class="c1"/><circle cx="514.5" cy="183.9" r="2.7" class="c47"/><circle cx="516.5" cy="186.1" r="3.0" class="c10"/><circle cx="519.5" cy="188.0" r="2.9" class="c20"/><circle cx="521.4" cy="190.0" r="2.2" class="c18"/><circle cx="524.8" cy="192.4" r="2.5" class="c44"/><circle cx="527.0" cy="192.0" r="2.4" class="c18"/><circle cx="533.9" cy="196.6" r="2.8" class="c37"/><circle cx="537.4" cy="199.1" r="2.5" class="c9"/><circle cx="546.5" cy="207.3" r="2.4" class="c10"/><circle cx="550.8" cy="205.3" r="2.6" class="c21"/><circle cx="414.7" cy="208.5" r="2.8" class="c5"/><circle cx="416.3" cy="205.7" r="3.1" class="c39"/><circle cx="417.3" cy="203.9" r="2.1" class="c9"/><circle cx="422.3" cy="203.0" r="2.6" class="c39"/><circle cx="422.9" cy="200.7" r="2.4" class="c16"/><circle cx="425.6" cy="198.8" r="2.8" class="c22"/><circle cx="427.9" cy="194.8" r="3.0" class="c48"/><circle cx="432.2" cy="192.7" r="2.4" class="c1"/><circle cx="433.1" cy="191.6" r="2.2" class="c9"/><circle cx="436.8" cy="188.1" r="2.6" class="c1"/><circle cx="436.4" cy="185.9" r="2.5" class="c20"/><circle cx="441.0" cy="185.2" r="2.3" class="c46"/><circle cx="443.7" cy="181.4" r="2.2" class="c15"/><circle cx="446.0" cy="180.8" r="2.4" class="c1"/><circle cx="448.3" cy="178.7" r="2.4" class="c10"/><circle cx="450.0" cy="176.0" r="3.0" class="c21"/><circle cx="453.7" cy="174.6" r="2.6" class="c47"/><circle cx="455.6" cy="171.5" r="2.5" class="c10"/><circle cx="457.9" cy="169.8" r="2.3" class="c5"/><circle cx="461.1" cy="167.4" r="2.9" class="c33"/><circle cx="466.2" cy="162.4" r="2.8" class="c61"/><circle cx="468.7" cy="160.4" r="2.6" class="c47"/><circle cx="432.0" cy="220.7" r="3.0" class="c7"/><circle cx="435.2" cy="219.1" r="2.2" class="c39"/><circle cx="436.9" cy="217.5" r="2.3" class="c12"/><circle cx="439.8" cy="216.1" r="2.8" class="c39"/><circle cx="444.8" cy="211.9" r="2.6" class="c39"/><circle cx="446.6" cy="210.5" r="2.6" class="c32"/><circle cx="449.1" cy="209.8" r="2.4" class="c2"/><circle cx="452.7" cy="207.9" r="2.1" class="c43"/><circle cx="454.5" cy="204.5" r="2.8" class="c24"/><circle cx="456.2" cy="203.6" r="3.0" class="c23"/><circle cx="459.1" cy="201.0" r="2.3" class="c32"/><circle cx="462.4" cy="199.5" r="2.6" class="c41"/><circle cx="465.2" cy="196.5" r="2.1" class="c50"/><circle cx="466.7" cy="195.0" r="2.9" class="c1"/><circle cx="472.1" cy="191.7" r="2.9" class="c36"/><circle cx="473.8" cy="189.6" r="2.2" class="c43"/><circle cx="478.4" cy="187.9" r="2.8" class="c39"/><circle cx="481.2" cy="186.6" r="3.0" class="c43"/><circle cx="482.6" cy="183.0" r="3.1" class="c33"/><circle cx="486.5" cy="182.1" r="2.3" class="c33"/><circle cx="450.7" cy="232.3" r="2.5" class="c1"/><circle cx="453.1" cy="231.0" r="2.5" class="c1"/><circle cx="455.6" cy="229.3" r="2.9" class="c1"/><circle cx="459.3" cy="227.1" r="2.3" class="c16"/><circle cx="462.8" cy="226.2" r="3.0" class="c10"/><circle cx="467.7" cy="221.8" r="2.8" class="c3"/><circle cx="471.6" cy="220.4" r="3.1" class="c7"/><circle cx="475.1" cy="218.7" r="2.5" class="c32"/><circle cx="474.7" cy="217.0" r="2.7" class="c3"/><circle cx="478.7" cy="216.1" r="2.4" class="c5"/><circle cx="482.8" cy="212.1" r="3.1" class="c47"/><circle cx="484.9" cy="212.2" r="2.3" class="c6"/><circle cx="486.4" cy="209.6" r="2.4" class="c8"/><circle cx="490.4" cy="208.9" r="2.9" class="c47"/><circle cx="494.1" cy="206.5" r="2.6" class="c12"/><circle cx="495.1" cy="206.0" r="3.0" class="c2"/><circle cx="500.9" cy="203.4" r="3.1" class="c47"/><circle cx="502.5" cy="202.0" r="2.4" class="c18"/><circle cx="506.9" cy="198.4" r="2.8" class="c10"/><circle cx="509.8" cy="195.9" r="2.9" class="c12"/><circle cx="514.1" cy="194.4" r="2.3" class="c22"/><circle cx="515.7" cy="193.8" r="2.2" class="c28"/><circle cx="520.3" cy="190.3" r="2.7" class="c7"/><circle cx="478.1" cy="248.3" r="3.0" class="c44"/><circle cx="480.0" cy="247.1" r="2.3" class="c20"/><circle cx="482.6" cy="246.1" r="3.1" class="c22"/><circle cx="485.1" cy="243.5" r="2.4" class="c6"/><circle cx="493.0" cy="241.9" r="2.7" class="c24"/><circle cx="498.5" cy="238.5" r="2.2" class="c21"/><circle cx="500.5" cy="238.0" r="2.3" class="c9"/><circle cx="502.7" cy="236.1" r="2.9" class="c16"/><circle cx="506.6" cy="234.1" r="2.3" class="c24"/><circle cx="508.8" cy="232.5" r="2.3" class="c33"/><circle cx="511.2" cy="230.9" r="2.5" class="c21"/><circle cx="514.6" cy="229.6" r="2.1" class="c47"/><circle cx="517.0" cy="228.9" r="2.6" class="c5"/><circle cx="519.1" cy="228.0" r="2.5" class="c23"/><circle cx="526.6" cy="224.3" r="2.6" class="c1"/><circle cx="532.7" cy="221.6" r="2.4" class="c37"/><circle cx="534.5" cy="218.4" r="2.8" class="c20"/><circle cx="539.5" cy="219.0" r="2.5" class="c18"/><circle cx="545.4" cy="213.1" r="3.0" class="c2"/><circle cx="548.5" cy="212.0" r="2.7" class="c1"/><circle cx="552.4" cy="211.2" r="3.1" class="c47"/><circle cx="516.2" cy="122.5" r="2.9" class="c6"/><circle cx="519.8" cy="124.3" r="3.0" class="c3"/><circle cx="522.5" cy="126.2" r="2.5" class="c48"/><circle cx="526.8" cy="126.9" r="2.3" class="c39"/><circle cx="528.8" cy="129.8" r="2.5" class="c24"/><circle cx="530.0" cy="129.7" r="2.3" class="c2"/><circle cx="535.3" cy="132.6" r="2.4" class="c10"/><circle cx="536.9" cy="136.1" r="2.3" class="c23"/><circle cx="540.1" cy="135.2" r="2.8" class="c5"/><circle cx="542.6" cy="137.4" r="2.9" class="c61"/><circle cx="545.4" cy="141.0" r="2.6" class="c2"/><circle cx="547.3" cy="141.1" r="2.2" class="c39"/><circle cx="548.3" cy="142.0" r="3.0" class="c22"/><circle cx="552.4" cy="146.0" r="2.7" class="c30"/><circle cx="556.3" cy="147.3" r="2.7" class="c33"/><circle cx="558.8" cy="150.2" r="2.2" class="c3"/><circle cx="561.7" cy="151.3" r="2.5" class="c39"/><circle cx="495.7" cy="141.4" r="2.6" class="c23"/><circle cx="499.3" cy="144.8" r="2.8" class="c47"/><circle cx="500.5" cy="144.0" r="2.9" class="c12"/><circle cx="503.4" cy="148.0" r="2.8" class="c20"/><circle cx="505.3" cy="152.0" r="2.7" class="c11"/><circle cx="509.5" cy="151.8" r="2.9" class="c37"/><circle cx="511.7" cy="153.1" r="2.5" class="c11"/><circle cx="513.6" cy="156.1" r="2.6" class="c12"/><circle cx="517.7" cy="157.6" r="2.6" class="c3"/><circle cx="519.7" cy="159.3" r="2.7" class="c46"/><circle cx="524.7" cy="159.9" r="2.4" class="c46"/><circle cx="525.7" cy="163.6" r="2.9" class="c16"/><circle cx="527.3" cy="165.3" r="2.9" class="c43"/><circle cx="530.5" cy="166.5" r="2.8" class="c13"/><circle cx="531.8" cy="169.2" r="2.1" class="c46"/><circle cx="536.7" cy="170.7" r="2.9" class="c3"/><circle cx="540.6" cy="173.7" r="3.0" class="c34"/><circle cx="539.2" cy="174.1" r="2.6" class="c5"/><circle cx="544.0" cy="178.8" r="2.7" class="c3"/><circle cx="564.9" cy="152.8" r="2.6" class="c31"/><circle cx="564.7" cy="155.3" r="2.8" class="c41"/><circle cx="561.3" cy="158.4" r="2.6" class="c3"/><circle cx="564.8" cy="160.8" r="3.1" class="c30"/><circle cx="562.7" cy="165.1" r="3.1" class="c15"/><circle cx="561.4" cy="168.5" r="2.5" class="c33"/><circle cx="561.2" cy="171.3" r="3.1" class="c6"/><circle cx="560.9" cy="175.3" r="2.8" class="c2"/><circle cx="559.7" cy="178.9" r="2.4" class="c37"/><circle cx="560.6" cy="181.4" r="2.5" class="c7"/><circle cx="560.5" cy="185.0" r="2.4" class="c7"/><circle cx="558.7" cy="186.5" r="2.3" class="c34"/><circle cx="559.1" cy="189.9" r="2.4" class="c12"/><circle cx="557.8" cy="194.7" r="3.1" class="c22"/><circle cx="557.0" cy="197.7" r="3.2" class="c34"/><circle cx="557.5" cy="200.7" r="2.3" class="c41"/><circle cx="555.5" cy="204.2" r="2.4" class="c34"/><circle cx="555.9" cy="209.8" r="3.2" class="c33"/><circle cx="552.9" cy="213.3" r="2.6" class="c61"/><circle cx="551.3" cy="213.1" r="2.4" class="c11"/><circle cx="548.1" cy="216.7" r="2.8" class="c24"/><circle cx="544.6" cy="218.0" r="2.8" class="c32"/><circle cx="542.1" cy="223.2" r="2.9" class="c10"/><circle cx="538.5" cy="223.0" r="2.9" class="c12"/><circle cx="538.6" cy="226.5" r="2.6" class="c32"/><circle cx="536.4" cy="227.0" r="2.7" class="c39"/><circle cx="531.8" cy="228.3" r="3.0" class="c31"/><circle cx="528.8" cy="231.7" r="2.2" class="c12"/><circle cx="527.8" cy="234.4" r="2.7" class="c46"/><circle cx="525.6" cy="235.6" r="2.3" class="c22"/><circle cx="553.7" cy="220.0" r="2.3" class="c16"/><circle cx="557.1" cy="226.2" r="2.3" class="c11"/><circle cx="560.9" cy="233.3" r="2.5" class="c29"/><circle cx="563.1" cy="241.6" r="2.4" class="c26"/><circle cx="566.4" cy="249.6" r="2.7" class="c15"/><circle cx="571.2" cy="257.2" r="2.3" class="c30"/><circle cx="571.7" cy="262.8" r="2.7" class="c15"/><circle cx="578.6" cy="271.7" r="2.4" class="c15"/><circle cx="580.3" cy="277.5" r="2.1" class="c46"/><circle cx="582.5" cy="285.8" r="2.6" class="c45"/><circle cx="586.9" cy="294.0" r="2.2" class="c3"/><circle cx="383.9" cy="156.6" r="2.5" class="c33"/><circle cx="517.2" cy="142.0" r="2.9" class="c23"/><circle cx="485.6" cy="158.8" r="2.4" class="c2"/><circle cx="347.7" cy="151.4" r="2.2" class="c7"/><circle cx="440.6" cy="124.3" r="2.9" class="c10"/><circle cx="450.2" cy="180.7" r="2.4" class="c15"/><circle cx="418.6" cy="138.7" r="3.0" class="c3"/><circle cx="369.1" cy="160.4" r="2.2" class="c13"/><circle cx="387.4" cy="135.2" r="2.8" class="c47"/><circle cx="353.5" cy="131.7" r="2.5" class="c7"/><circle cx="358.3" cy="154.2" r="2.8" class="c43"/><circle cx="494.2" cy="133.8" r="3.0" class="c7"/><circle cx="414.2" cy="132.2" r="2.9" class="c34"/><circle cx="389.2" cy="151.3" r="2.6" class="c44"/><circle cx="323.4" cy="140.8" r="2.0" class="c12"/><circle cx="350.0" cy="138.5" r="2.7" class="c12"/><circle cx="391.1" cy="167.5" r="2.3" class="c22"/><circle cx="493.9" cy="178.1" r="2.8" class="c24"/><circle cx="338.3" cy="180.3" r="2.4" class="c13"/><circle cx="319.7" cy="129.5" r="2.8" class="c13"/><circle cx="392.1" cy="148.8" r="2.2" class="c10"/><circle cx="499.1" cy="165.7" r="2.8" class="c8"/><circle cx="465.2" cy="157.6" r="2.8" class="c7"/><circle cx="435.7" cy="126.8" r="2.5" class="c39"/><circle cx="399.5" cy="166.6" r="2.5" class="c6"/><circle cx="323.0" cy="166.7" r="2.7" class="c1"/><circle cx="367.5" cy="173.0" r="2.5" class="c8"/><circle cx="468.9" cy="129.3" r="2.6" class="c47"/><circle cx="469.5" cy="175.6" r="2.2" class="c30"/><circle cx="327.0" cy="178.3" r="2.6" class="c21"/><circle cx="346.1" cy="160.9" r="2.2" class="c37"/><circle cx="525.0" cy="131.3" r="2.8" class="c41"/><circle cx="438.7" cy="145.3" r="2.1" class="c32"/><circle cx="386.4" cy="165.7" r="2.0" class="c10"/><circle cx="395.8" cy="126.6" r="2.5" class="c22"/><circle cx="464.4" cy="162.6" r="2.2" class="c28"/><circle cx="477.3" cy="157.3" r="2.7" class="c18"/><circle cx="423.7" cy="133.8" r="2.2" class="c6"/><circle cx="507.8" cy="136.9" r="2.4" class="c36"/><circle cx="437.5" cy="149.9" r="2.2" class="c3"/><circle cx="463.4" cy="173.6" r="2.5" class="c34"/><circle cx="361.3" cy="176.7" r="2.5" class="c10"/><circle cx="349.4" cy="177.2" r="2.3" class="c21"/><circle cx="449.7" cy="141.4" r="2.5" class="c29"/><circle cx="478.8" cy="125.5" r="2.6" class="c34"/><circle cx="379.4" cy="135.6" r="2.7" class="c2"/><circle cx="329.1" cy="132.5" r="2.3" class="c5"/><circle cx="387.6" cy="159.1" r="2.5" class="c6"/><circle cx="494.7" cy="136.1" r="2.3" class="c7"/><circle cx="426.2" cy="146.2" r="2.8" class="c22"/><circle cx="323.1" cy="172.8" r="2.5" class="c5"/><circle cx="358.5" cy="127.0" r="2.6" class="c6"/><circle cx="469.2" cy="171.5" r="2.1" class="c13"/><circle cx="415.8" cy="147.8" r="2.2" class="c3"/><circle cx="524.6" cy="129.6" r="2.5" class="c22"/><circle cx="418.8" cy="168.8" r="2.2" class="c16"/><circle cx="474.5" cy="180.8" r="2.2" class="c32"/><circle cx="514.7" cy="132.2" r="2.3" class="c9"/><circle cx="459.3" cy="161.2" r="2.3" class="c13"/><circle cx="444.7" cy="153.0" r="2.8" class="c21"/><circle cx="411.4" cy="154.5" r="2.8" class="c33"/><circle cx="464.1" cy="146.3" r="2.3" class="c36"/><circle cx="337.6" cy="150.7" r="2.5" class="c22"/><circle cx="437.8" cy="171.4" r="2.1" class="c34"/><circle cx="429.3" cy="138.8" r="2.1" class="c33"/><circle cx="319.5" cy="134.2" r="2.8" class="c44"/><circle cx="379.3" cy="180.3" r="2.9" class="c7"/><circle cx="329.8" cy="125.7" r="2.9" class="c20"/><circle cx="463.2" cy="137.9" r="2.9" class="c36"/><circle cx="490.7" cy="145.0" r="2.0" class="c10"/><circle cx="521.5" cy="157.9" r="2.8" class="c39"/><circle cx="474.4" cy="169.4" r="2.5" class="c34"/><circle cx="449.6" cy="131.5" r="2.6" class="c10"/><circle cx="376.8" cy="144.7" r="2.6" class="c32"/><circle cx="429.8" cy="134.3" r="2.4" class="c43"/><circle cx="513.0" cy="139.6" r="2.7" class="c29"/><circle cx="456.0" cy="148.6" r="2.7" class="c16"/><circle cx="428.2" cy="173.4" r="2.6" class="c1"/><circle cx="507.9" cy="164.7" r="2.1" class="c47"/><circle cx="330.1" cy="157.6" r="2.6" class="c18"/><circle cx="456.4" cy="171.3" r="2.2" class="c33"/><circle cx="421.2" cy="170.1" r="2.0" class="c12"/><circle cx="453.8" cy="159.3" r="2.9" class="c6"/><circle cx="483.3" cy="177.8" r="2.8" class="c23"/><circle cx="511.8" cy="146.2" r="2.1" class="c33"/><circle cx="383.0" cy="125.9" r="2.9" class="c3"/><circle cx="319.7" cy="161.1" r="2.7" class="c5"/><circle cx="503.0" cy="169.1" r="3.0" class="c44"/><circle cx="377.3" cy="141.4" r="2.6" class="c23"/><circle cx="436.7" cy="140.9" r="2.9" class="c34"/><circle cx="446.3" cy="172.9" r="2.1" class="c16"/><circle cx="327.7" cy="140.5" r="2.4" class="c34"/><circle cx="522.5" cy="124.8" r="2.2" class="c36"/><circle cx="385.0" cy="169.9" r="2.4" class="c1"/><circle cx="498.5" cy="127.7" r="2.5" class="c24"/><circle cx="319.4" cy="129.8" r="2.5" class="c33"/><circle cx="378.5" cy="138.8" r="2.8" class="c12"/><circle cx="501.5" cy="167.2" r="3.0" class="c47"/><circle cx="388.4" cy="180.5" r="2.7" class="c32"/><circle cx="463.1" cy="160.2" r="2.5" class="c33"/><circle cx="460.3" cy="180.2" r="2.1" class="c50"/><circle cx="390.1" cy="152.9" r="2.0" class="c22"/><circle cx="354.4" cy="165.9" r="2.9" class="c34"/><circle cx="452.1" cy="140.9" r="2.0" class="c23"/><circle cx="380.5" cy="161.6" r="2.6" class="c7"/><circle cx="338.1" cy="134.0" r="2.3" class="c46"/><circle cx="356.2" cy="162.8" r="2.7" class="c23"/><circle cx="460.7" cy="138.0" r="2.9" class="c10"/><circle cx="383.3" cy="143.8" r="2.6" class="c5"/><circle cx="394.5" cy="150.8" r="2.2" class="c31"/><circle cx="509.2" cy="158.6" r="2.1" class="c18"/><circle cx="438.0" cy="134.3" r="2.5" class="c12"/><circle cx="426.0" cy="151.4" r="2.5" class="c12"/><circle cx="484.6" cy="132.0" r="2.2" class="c24"/><circle cx="330.7" cy="161.5" r="2.3" class="c33"/><circle cx="522.4" cy="166.3" r="2.4" class="c12"/><circle cx="488.3" cy="142.6" r="2.6" class="c20"/><circle cx="482.1" cy="163.4" r="2.8" class="c5"/><circle cx="348.7" cy="141.4" r="2.0" class="c13"/><circle cx="354.4" cy="157.5" r="2.1" class="c18"/><circle cx="399.6" cy="128.8" r="2.6" class="c10"/><circle cx="343.3" cy="144.0" r="2.5" class="c2"/><circle cx="504.1" cy="134.0" r="3.0" class="c33"/><circle cx="514.7" cy="165.6" r="2.6" class="c12"/><circle cx="381.1" cy="172.9" r="2.5" class="c29"/><circle cx="445.5" cy="138.6" r="2.9" class="c18"/><circle cx="445.4" cy="161.8" r="2.7" class="c13"/><circle cx="408.6" cy="157.8" r="2.3" class="c41"/><circle cx="442.2" cy="135.2" r="2.8" class="c7"/><circle cx="485.0" cy="144.3" r="2.3" class="c3"/><circle cx="326.7" cy="166.3" r="2.4" class="c37"/><circle cx="478.5" cy="131.1" r="2.5" class="c16"/><circle cx="407.1" cy="146.0" r="2.5" class="c13"/><circle cx="339.4" cy="156.2" r="2.0" class="c1"/><circle cx="329.7" cy="149.7" r="2.7" class="c47"/><circle cx="343.4" cy="150.4" r="2.3" class="c12"/><circle cx="403.1" cy="125.5" r="2.9" class="c34"/><circle cx="438.3" cy="126.2" r="2.5" class="c15"/><circle cx="467.0" cy="125.6" r="2.8" class="c61"/><circle cx="353.2" cy="163.2" r="2.7" class="c15"/><circle cx="414.1" cy="165.1" r="2.9" class="c47"/><circle cx="357.5" cy="142.8" r="2.6" class="c34"/><circle cx="335.3" cy="161.7" r="2.2" class="c20"/><circle cx="419.6" cy="168.2" r="2.8" class="c6"/><circle cx="378.9" cy="175.8" r="2.9" class="c16"/><circle cx="346.7" cy="141.5" r="2.6" class="c7"/><circle cx="393.6" cy="126.9" r="2.5" class="c31"/><circle cx="400.7" cy="166.0" r="2.8" class="c18"/><circle cx="479.3" cy="148.1" r="2.8" class="c41"/><circle cx="489.2" cy="145.2" r="2.1" class="c1"/><circle cx="521.8" cy="133.0" r="2.4" class="c47"/><circle cx="510.1" cy="124.7" r="2.8" class="c2"/><circle cx="424.2" cy="157.2" r="2.2" class="c46"/><circle cx="461.8" cy="166.5" r="2.2" class="c18"/><circle cx="514.3" cy="155.2" r="2.1" class="c3"/><circle cx="432.8" cy="136.3" r="2.1" class="c43"/><circle cx="502.7" cy="136.5" r="2.6" class="c7"/><circle cx="401.5" cy="124.1" r="2.6" class="c12"/><circle cx="341.3" cy="163.4" r="2.9" class="c6"/><circle cx="398.2" cy="174.7" r="2.6" class="c34"/><circle cx="524.8" cy="140.4" r="2.0" class="c44"/><circle cx="376.1" cy="147.0" r="2.4" class="c3"/><circle cx="451.9" cy="148.6" r="2.6" class="c24"/><circle cx="361.7" cy="162.1" r="2.6" class="c32"/><circle cx="381.3" cy="134.6" r="2.8" class="c1"/><circle cx="377.8" cy="168.9" r="2.1" class="c12"/><circle cx="370.3" cy="128.2" r="2.5" class="c51"/><circle cx="456.7" cy="140.6" r="2.6" class="c31"/><circle cx="439.9" cy="153.6" r="2.3" class="c21"/><circle cx="319.7" cy="149.8" r="2.9" class="c5"/><circle cx="302.7" cy="159.7" r="1.9" class="c8"/><circle cx="338.2" cy="160.5" r="2.0" class="c33"/><circle cx="407.7" cy="183.2" r="2.9" class="c41"/><circle cx="377.6" cy="183.6" r="2.6" class="c28"/><circle cx="412.0" cy="154.3" r="2.4" class="c4"/><circle cx="294.7" cy="141.5" r="1.8" class="c45"/><circle cx="373.1" cy="150.7" r="1.8" class="c22"/><circle cx="444.0" cy="150.1" r="1.9" class="c33"/><circle cx="359.7" cy="137.5" r="2.4" class="c31"/><circle cx="293.5" cy="153.0" r="2.8" class="c22"/><circle cx="347.5" cy="173.9" r="2.9" class="c35"/><circle cx="345.1" cy="190.0" r="2.4" class="c8"/><circle cx="454.8" cy="171.0" r="2.7" class="c34"/><circle cx="400.6" cy="205.8" r="2.9" class="c27"/><circle cx="353.3" cy="197.4" r="2.1" class="c16"/><circle cx="361.7" cy="177.9" r="2.4" class="c33"/><circle cx="351.9" cy="143.9" r="1.8" class="c38"/><circle cx="286.8" cy="185.3" r="3.0" class="c24"/><circle cx="404.9" cy="136.5" r="2.1" class="c46"/><circle cx="310.5" cy="133.9" r="2.8" class="c16"/><circle cx="349.2" cy="136.9" r="2.8" class="c25"/><circle cx="350.8" cy="201.1" r="2.3" class="c36"/><circle cx="461.3" cy="149.8" r="3.0" class="c10"/><circle cx="414.2" cy="171.2" r="3.0" class="c53"/><circle cx="406.0" cy="203.3" r="2.3" class="c39"/><circle cx="430.6" cy="136.3" r="2.1" class="c24"/><circle cx="332.2" cy="141.9" r="2.8" class="c16"/><circle cx="417.8" cy="182.5" r="2.7" class="c1"/><circle cx="417.4" cy="152.6" r="2.1" class="c11"/><circle cx="422.3" cy="202.2" r="2.0" class="c31"/><circle cx="360.2" cy="184.9" r="2.4" class="c36"/><circle cx="395.8" cy="205.5" r="2.9" class="c11"/><circle cx="380.9" cy="195.1" r="2.1" class="c31"/><circle cx="386.0" cy="164.7" r="2.4" class="c32"/><circle cx="442.9" cy="155.7" r="2.8" class="c8"/><circle cx="441.1" cy="153.8" r="2.1" class="c45"/><circle cx="283.8" cy="170.1" r="2.8" class="c38"/><circle cx="282.4" cy="205.9" r="2.9" class="c55"/><circle cx="451.3" cy="192.5" r="2.0" class="c4"/><circle cx="440.0" cy="147.6" r="2.5" class="c22"/><circle cx="407.0" cy="145.4" r="2.2" class="c8"/><circle cx="441.0" cy="186.9" r="1.8" class="c13"/><circle cx="328.5" cy="131.1" r="2.6" class="c48"/><circle cx="395.1" cy="143.9" r="1.8" class="c10"/><circle cx="369.4" cy="202.7" r="2.4" class="c53"/><circle cx="387.6" cy="184.3" r="3.0" class="c30"/><circle cx="352.6" cy="137.6" r="2.2" class="c39"/><circle cx="318.4" cy="156.9" r="2.6" class="c29"/><circle cx="443.7" cy="188.0" r="2.9" class="c22"/><circle cx="383.2" cy="196.1" r="1.9" class="c15"/><circle cx="286.9" cy="147.1" r="2.6" class="c12"/><circle cx="313.8" cy="162.0" r="2.2" class="c46"/><circle cx="293.5" cy="171.2" r="2.9" class="c1"/><circle cx="327.7" cy="202.8" r="2.2" class="c5"/><circle cx="338.4" cy="163.8" r="2.1" class="c26"/><circle cx="353.6" cy="179.5" r="2.0" class="c4"/><circle cx="311.3" cy="139.4" r="2.2" class="c44"/><circle cx="316.6" cy="167.1" r="2.0" class="c3"/><circle cx="358.3" cy="205.3" r="2.0" class="c10"/><circle cx="380.0" cy="202.6" r="2.1" class="c10"/><circle cx="351.7" cy="203.5" r="2.4" class="c6"/><circle cx="388.5" cy="152.4" r="2.5" class="c44"/><circle cx="366.2" cy="153.1" r="1.9" class="c7"/><circle cx="288.8" cy="146.0" r="2.5" class="c13"/><circle cx="315.6" cy="193.1" r="3.0" class="c38"/><circle cx="353.0" cy="144.4" r="2.7" class="c31"/><circle cx="404.3" cy="188.2" r="2.2" class="c13"/><circle cx="340.9" cy="151.5" r="2.0" class="c50"/><circle cx="313.2" cy="140.7" r="1.9" class="c16"/><circle cx="340.4" cy="157.2" r="2.7" class="c47"/><circle cx="387.4" cy="205.5" r="2.8" class="c32"/><circle cx="361.9" cy="140.3" r="3.0" class="c47"/><circle cx="374.3" cy="182.7" r="2.8" class="c26"/><circle cx="386.7" cy="168.6" r="2.4" class="c45"/><circle cx="293.3" cy="164.5" r="2.4" class="c28"/><circle cx="274.5" cy="191.5" r="2.9" class="c45"/><circle cx="337.1" cy="156.1" r="2.2" class="c60"/><circle cx="386.2" cy="147.7" r="1.9" class="c45"/><circle cx="277.9" cy="189.2" r="2.5" class="c38"/><circle cx="404.1" cy="177.0" r="2.8" class="c35"/><circle cx="433.9" cy="159.4" r="2.3" class="c21"/><circle cx="380.6" cy="200.8" r="2.2" class="c36"/><circle cx="430.7" cy="205.8" r="2.5" class="c30"/><circle cx="451.4" cy="162.4" r="2.9" class="c10"/><circle cx="424.2" cy="185.5" r="2.7" class="c8"/><circle cx="405.5" cy="141.1" r="2.3" class="c46"/><circle cx="351.1" cy="158.7" r="2.8" class="c29"/><circle cx="325.3" cy="149.8" r="2.5" class="c5"/><circle cx="297.4" cy="160.7" r="3.0" class="c36"/><circle cx="275.7" cy="157.3" r="2.8" class="c28"/><circle cx="274.7" cy="193.4" r="2.4" class="c32"/><circle cx="371.5" cy="198.4" r="1.8" class="c1"/><circle cx="367.8" cy="157.1" r="2.5" class="c32"/><circle cx="443.9" cy="165.0" r="2.9" class="c3"/><circle cx="325.5" cy="142.9" r="2.5" class="c47"/><circle cx="375.2" cy="163.1" r="2.4" class="c8"/><circle cx="410.9" cy="174.0" r="2.7" class="c50"/><circle cx="349.4" cy="144.0" r="2.6" class="c36"/><circle cx="418.4" cy="182.3" r="2.6" class="c60"/><circle cx="396.0" cy="194.6" r="1.9" class="c31"/><circle cx="410.3" cy="190.3" r="1.8" class="c24"/><circle cx="377.3" cy="166.3" r="2.2" class="c15"/><circle cx="373.8" cy="161.4" r="2.3" class="c47"/><circle cx="304.7" cy="172.5" r="1.9" class="c27"/><circle cx="369.9" cy="161.3" r="2.0" class="c16"/><circle cx="288.7" cy="149.6" r="2.3" class="c31"/><circle cx="398.6" cy="148.9" r="2.6" class="c20"/><circle cx="402.7" cy="149.0" r="2.4" class="c24"/><circle cx="303.4" cy="185.6" r="2.1" class="c45"/><circle cx="395.4" cy="159.8" r="2.8" class="c26"/><circle cx="372.6" cy="178.7" r="2.1" class="c1"/><circle cx="318.5" cy="157.5" r="1.8" class="c1"/><circle cx="448.0" cy="199.4" r="2.6" class="c53"/><circle cx="360.5" cy="143.6" r="2.0" class="c18"/><circle cx="394.7" cy="136.1" r="2.8" class="c21"/><circle cx="317.5" cy="178.6" r="1.8" class="c32"/><circle cx="331.7" cy="192.2" r="2.8" class="c58"/><circle cx="350.0" cy="203.4" r="1.9" class="c22"/><circle cx="303.6" cy="162.4" r="2.3" class="c24"/><circle cx="384.7" cy="186.4" r="2.8" class="c13"/><circle cx="278.4" cy="140.2" r="2.3" class="c28"/><circle cx="355.4" cy="141.2" r="2.1" class="c10"/><circle cx="401.4" cy="168.7" r="1.8" class="c16"/><circle cx="336.8" cy="157.6" r="2.7" class="c3"/><circle cx="299.3" cy="142.5" r="2.6" class="c4"/><circle cx="419.0" cy="176.7" r="2.4" class="c26"/><circle cx="464.8" cy="186.0" r="2.1" class="c45"/><circle cx="284.9" cy="138.2" r="2.9" class="c34"/><circle cx="458.4" cy="152.0" r="2.0" class="c6"/><circle cx="330.5" cy="188.7" r="3.0" class="c7"/><circle cx="325.5" cy="133.0" r="2.2" class="c27"/><circle cx="454.2" cy="185.4" r="2.5" class="c7"/><circle cx="407.5" cy="195.9" r="1.9" class="c9"/><circle cx="287.5" cy="139.5" r="2.5" class="c46"/><circle cx="282.8" cy="180.8" r="2.0" class="c11"/><circle cx="428.6" cy="161.5" r="2.5" class="c60"/><circle cx="384.0" cy="195.9" r="2.8" class="c24"/><circle cx="419.4" cy="167.0" r="2.1" class="c35"/><circle cx="287.8" cy="148.0" r="1.9" class="c24"/><circle cx="346.0" cy="151.9" r="2.2" class="c26"/><circle cx="299.3" cy="171.8" r="2.6" class="c3"/><circle cx="354.9" cy="150.6" r="2.7" class="c10"/><circle cx="412.0" cy="149.8" r="2.4" class="c24"/><circle cx="464.4" cy="164.0" r="2.3" class="c45"/><circle cx="363.5" cy="169.8" r="2.1" class="c12"/><circle cx="390.3" cy="180.3" r="2.7" class="c38"/><circle cx="447.4" cy="189.3" r="3.0" class="c53"/><circle cx="437.9" cy="144.4" r="2.0" class="c10"/><circle cx="449.7" cy="184.8" r="2.3" class="c28"/><circle cx="388.7" cy="174.1" r="2.2" class="c32"/><circle cx="333.2" cy="140.4" r="2.0" class="c35"/><circle cx="317.3" cy="192.0" r="2.3" class="c6"/><circle cx="335.4" cy="190.8" r="2.5" class="c10"/><circle cx="397.4" cy="201.3" r="1.9" class="c58"/><circle cx="403.4" cy="133.6" r="2.5" class="c26"/><circle cx="424.1" cy="144.7" r="2.7" class="c12"/><circle cx="405.1" cy="187.9" r="2.5" class="c32"/><circle cx="413.0" cy="154.8" r="2.8" class="c35"/><circle cx="390.7" cy="147.5" r="2.9" class="c24"/><circle cx="293.6" cy="197.6" r="2.9" class="c32"/><circle cx="364.7" cy="165.6" r="1.8" class="c15"/><circle cx="323.6" cy="145.0" r="2.7" class="c41"/><circle cx="351.6" cy="150.6" r="2.5" class="c3"/><circle cx="320.3" cy="161.3" r="2.6" class="c26"/><circle cx="280.6" cy="184.5" r="2.3" class="c6"/><circle cx="382.3" cy="142.6" r="3.0" class="c8"/><circle cx="333.1" cy="188.8" r="2.6" class="c53"/><circle cx="403.0" cy="136.6" r="2.5" class="c48"/><circle cx="402.0" cy="190.2" r="2.0" class="c24"/><circle cx="352.3" cy="147.9" r="2.0" class="c31"/><circle cx="411.1" cy="206.1" r="2.2" class="c1"/><circle cx="496.1" cy="221.6" r="2.7" class="c5"/><circle cx="417.7" cy="225.2" r="2.3" class="c12"/><circle cx="420.5" cy="260.6" r="2.9" class="c39"/><circle cx="440.2" cy="243.3" r="2.3" class="c47"/><circle cx="477.3" cy="214.1" r="2.6" class="c59"/><circle cx="417.3" cy="204.1" r="2.3" class="c54"/><circle cx="549.1" cy="197.6" r="2.6" class="c6"/><circle cx="437.6" cy="233.0" r="2.0" class="c37"/><circle cx="396.5" cy="199.8" r="2.3" class="c45"/><circle cx="395.9" cy="203.3" r="2.1" class="c38"/><circle cx="549.0" cy="194.0" r="3.0" class="c38"/><circle cx="438.0" cy="247.3" r="2.3" class="c8"/><circle cx="493.5" cy="240.8" r="2.3" class="c39"/><circle cx="479.1" cy="235.4" r="2.1" class="c28"/><circle cx="469.5" cy="207.5" r="2.7" class="c7"/><circle cx="542.8" cy="203.5" r="2.4" class="c2"/><circle cx="451.4" cy="227.4" r="2.0" class="c27"/><circle cx="405.1" cy="208.3" r="2.4" class="c21"/><circle cx="537.3" cy="233.8" r="2.6" class="c11"/><circle cx="440.4" cy="212.8" r="2.2" class="c25"/><circle cx="383.4" cy="197.2" r="2.7" class="c33"/><circle cx="532.4" cy="231.9" r="1.9" class="c22"/><circle cx="380.7" cy="192.6" r="2.7" class="c3"/><circle cx="528.7" cy="217.3" r="2.4" class="c46"/><circle cx="536.8" cy="261.0" r="2.9" class="c28"/><circle cx="545.4" cy="209.5" r="2.1" class="c8"/><circle cx="393.0" cy="201.7" r="2.9" class="c16"/><circle cx="427.9" cy="256.3" r="2.7" class="c28"/><circle cx="440.7" cy="207.2" r="2.5" class="c46"/><circle cx="532.5" cy="241.7" r="2.0" class="c33"/><circle cx="438.6" cy="199.8" r="2.6" class="c1"/><circle cx="442.8" cy="226.7" r="2.8" class="c22"/><circle cx="470.4" cy="257.2" r="2.8" class="c36"/><circle cx="553.7" cy="214.6" r="2.6" class="c33"/><circle cx="485.1" cy="241.9" r="2.5" class="c6"/><circle cx="523.6" cy="256.9" r="2.9" class="c46"/><circle cx="499.1" cy="203.9" r="2.5" class="c3"/><circle cx="387.9" cy="201.5" r="2.8" class="c46"/><circle cx="416.0" cy="212.7" r="2.3" class="c32"/><circle cx="463.8" cy="241.3" r="2.8" class="c30"/><circle cx="533.8" cy="218.5" r="2.1" class="c58"/><circle cx="438.4" cy="227.6" r="2.0" class="c5"/><circle cx="513.6" cy="229.7" r="3.0" class="c16"/><circle cx="441.9" cy="253.3" r="2.6" class="c26"/><circle cx="511.1" cy="258.9" r="2.5" class="c2"/><circle cx="477.2" cy="247.7" r="3.0" class="c47"/><circle cx="468.4" cy="236.6" r="2.5" class="c47"/><circle cx="485.6" cy="231.7" r="2.4" class="c4"/><circle cx="389.5" cy="247.4" r="2.2" class="c39"/><circle cx="436.4" cy="231.5" r="2.6" class="c3"/><circle cx="421.6" cy="245.7" r="2.8" class="c4"/><circle cx="426.3" cy="242.9" r="1.9" class="c35"/><circle cx="438.4" cy="216.3" r="2.4" class="c35"/><circle cx="384.3" cy="237.6" r="2.5" class="c27"/><circle cx="425.2" cy="220.8" r="2.9" class="c28"/><circle cx="490.5" cy="244.5" r="2.1" class="c6"/><circle cx="466.6" cy="249.2" r="2.4" class="c22"/><circle cx="491.8" cy="210.1" r="2.7" class="c24"/><circle cx="418.5" cy="245.6" r="2.0" class="c33"/><circle cx="522.7" cy="215.4" r="2.1" class="c24"/><circle cx="531.8" cy="222.2" r="2.3" class="c10"/><circle cx="472.7" cy="211.5" r="1.9" class="c33"/><circle cx="458.2" cy="223.5" r="2.3" class="c24"/><circle cx="457.7" cy="252.7" r="2.6" class="c15"/><circle cx="500.1" cy="199.8" r="1.8" class="c12"/><circle cx="467.1" cy="253.3" r="2.6" class="c46"/><circle cx="427.7" cy="215.5" r="2.3" class="c5"/><circle cx="450.6" cy="216.4" r="1.9" class="c39"/><circle cx="547.9" cy="219.9" r="2.0" class="c3"/><circle cx="501.1" cy="197.2" r="1.9" class="c47"/><circle cx="507.3" cy="192.9" r="2.6" class="c58"/><circle cx="450.8" cy="251.2" r="2.2" class="c49"/><circle cx="430.9" cy="231.2" r="2.3" class="c24"/><circle cx="541.0" cy="235.4" r="2.1" class="c21"/><circle cx="452.3" cy="226.2" r="2.3" class="c13"/><circle cx="549.3" cy="191.1" r="1.9" class="c2"/><circle cx="536.8" cy="246.5" r="1.9" class="c16"/><circle cx="505.9" cy="191.1" r="2.9" class="c1"/><circle cx="513.4" cy="238.7" r="2.4" class="c12"/><circle cx="387.1" cy="238.5" r="2.2" class="c35"/><circle cx="512.8" cy="245.4" r="2.7" class="c36"/><circle cx="417.4" cy="234.7" r="1.9" class="c21"/><circle cx="537.8" cy="195.2" r="2.3" class="c47"/><circle cx="384.2" cy="228.4" r="2.1" class="c44"/><circle cx="552.6" cy="195.0" r="2.2" class="c10"/><circle cx="537.3" cy="210.1" r="2.2" class="c6"/><circle cx="471.4" cy="255.3" r="2.9" class="c36"/><circle cx="493.3" cy="191.3" r="2.8" class="c7"/><circle cx="551.7" cy="205.2" r="2.0" class="c47"/><circle cx="468.1" cy="201.5" r="2.5" class="c16"/><circle cx="466.8" cy="234.9" r="2.1" class="c32"/><circle cx="524.8" cy="257.3" r="1.8" class="c24"/><circle cx="518.6" cy="217.9" r="2.5" class="c2"/><circle cx="527.6" cy="239.0" r="1.9" class="c33"/><circle cx="482.3" cy="215.0" r="2.0" class="c50"/><circle cx="437.2" cy="214.9" r="2.8" class="c11"/><circle cx="552.6" cy="239.9" r="2.6" class="c45"/><circle cx="475.5" cy="196.6" r="2.3" class="c13"/><circle cx="404.9" cy="246.6" r="2.5" class="c7"/><circle cx="431.0" cy="208.2" r="2.6" class="c2"/><circle cx="451.0" cy="221.2" r="2.7" class="c8"/><circle cx="386.0" cy="220.4" r="2.6" class="c28"/><circle cx="452.7" cy="235.3" r="2.3" class="c5"/><circle cx="474.3" cy="213.3" r="2.5" class="c35"/><circle cx="376.2" cy="260.7" r="2.1" class="c22"/><circle cx="515.3" cy="246.0" r="2.0" class="c32"/><circle cx="549.2" cy="196.3" r="1.8" class="c1"/><circle cx="496.9" cy="201.6" r="2.5" class="c16"/><circle cx="453.7" cy="252.6" r="2.1" class="c49"/><circle cx="508.9" cy="207.0" r="2.4" class="c2"/><circle cx="473.5" cy="228.3" r="2.2" class="c39"/><circle cx="417.1" cy="232.2" r="2.0" class="c60"/><circle cx="419.5" cy="259.5" r="1.9" class="c27"/><circle cx="480.5" cy="224.2" r="2.6" class="c15"/><circle cx="387.2" cy="220.3" r="2.3" class="c27"/><circle cx="453.2" cy="194.2" r="2.8" class="c45"/><circle cx="527.7" cy="212.4" r="2.6" class="c36"/><circle cx="458.8" cy="199.9" r="2.0" class="c33"/><circle cx="542.1" cy="227.3" r="2.7" class="c47"/><circle cx="491.8" cy="242.6" r="2.4" class="c46"/><circle cx="542.9" cy="217.4" r="2.8" class="c6"/><circle cx="412.7" cy="218.5" r="2.0" class="c36"/><circle cx="402.3" cy="247.7" r="2.0" class="c11"/><circle cx="379.8" cy="195.4" r="2.2" class="c10"/><circle cx="528.4" cy="194.1" r="2.0" class="c29"/><circle cx="517.5" cy="250.3" r="2.9" class="c24"/><circle cx="489.0" cy="250.1" r="2.5" class="c13"/><circle cx="453.8" cy="198.6" r="3.0" class="c5"/><circle cx="431.5" cy="242.9" r="1.8" class="c43"/><circle cx="470.2" cy="209.5" r="2.3" class="c54"/><circle cx="537.0" cy="231.9" r="2.2" class="c35"/><circle cx="533.7" cy="228.4" r="2.5" class="c16"/><circle cx="503.9" cy="195.8" r="2.0" class="c55"/><circle cx="517.1" cy="256.0" r="2.0" class="c39"/><circle cx="394.9" cy="244.7" r="2.0" class="c5"/><circle cx="379.5" cy="239.1" r="2.7" class="c4"/><circle cx="495.5" cy="247.9" r="1.9" class="c34"/><circle cx="431.5" cy="208.6" r="2.2" class="c60"/><circle cx="449.4" cy="247.7" r="3.0" class="c26"/><circle cx="395.8" cy="241.5" r="2.3" class="c24"/><circle cx="401.0" cy="251.0" r="1.9" class="c12"/><circle cx="476.1" cy="198.6" r="1.8" class="c16"/><circle cx="385.3" cy="225.8" r="2.3" class="c5"/><circle cx="399.7" cy="221.0" r="2.9" class="c6"/><circle cx="525.7" cy="191.7" r="2.0" class="c30"/><circle cx="441.5" cy="258.0" r="2.0" class="c47"/><circle cx="501.8" cy="232.0" r="2.2" class="c44"/><circle cx="465.0" cy="192.7" r="1.9" class="c13"/><circle cx="545.1" cy="221.6" r="1.8" class="c44"/><circle cx="356.2" cy="260.3" r="2.0" class="c30"/><circle cx="322.1" cy="222.7" r="2.3" class="c34"/><circle cx="316.1" cy="251.6" r="2.1" class="c25"/><circle cx="353.9" cy="210.7" r="2.1" class="c22"/><circle cx="292.0" cy="260.1" r="2.3" class="c28"/><circle cx="287.8" cy="205.1" r="2.3" class="c16"/><circle cx="280.7" cy="212.6" r="1.8" class="c28"/><circle cx="312.3" cy="257.5" r="2.4" class="c55"/><circle cx="273.7" cy="246.8" r="2.6" class="c27"/><circle cx="277.0" cy="244.3" r="2.4" class="c2"/><circle cx="365.0" cy="248.1" r="2.4" class="c4"/><circle cx="276.6" cy="243.0" r="2.0" class="c4"/><circle cx="271.4" cy="211.1" r="2.2" class="c27"/><circle cx="361.4" cy="220.4" r="1.8" class="c26"/><circle cx="343.2" cy="250.9" r="2.6" class="c1"/><circle cx="289.1" cy="217.1" r="2.7" class="c32"/><circle cx="282.8" cy="234.4" r="2.8" class="c28"/><circle cx="369.3" cy="210.1" r="2.7" class="c6"/><circle cx="349.9" cy="242.9" r="2.6" class="c29"/><circle cx="287.4" cy="225.6" r="2.5" class="c6"/><circle cx="326.0" cy="231.7" r="1.9" class="c26"/><circle cx="339.0" cy="239.9" r="2.1" class="c11"/><circle cx="266.6" cy="236.5" r="2.6" class="c38"/><circle cx="283.2" cy="257.4" r="1.9" class="c22"/><circle cx="294.8" cy="256.8" r="2.7" class="c1"/><circle cx="340.2" cy="244.8" r="2.6" class="c36"/><circle cx="371.8" cy="212.8" r="2.4" class="c29"/><circle cx="365.6" cy="242.7" r="2.4" class="c30"/><circle cx="343.7" cy="207.2" r="2.3" class="c15"/><circle cx="267.9" cy="243.2" r="2.0" class="c54"/><circle cx="358.5" cy="234.0" r="2.3" class="c11"/><circle cx="328.8" cy="222.0" r="2.0" class="c21"/><circle cx="364.6" cy="218.6" r="2.0" class="c39"/><circle cx="357.0" cy="204.1" r="2.0" class="c6"/><circle cx="327.7" cy="255.9" r="2.8" class="c53"/><circle cx="366.7" cy="248.4" r="2.2" class="c35"/><circle cx="347.1" cy="243.7" r="2.3" class="c49"/><circle cx="339.5" cy="237.0" r="2.1" class="c30"/><circle cx="374.7" cy="224.3" r="1.8" class="c45"/><circle cx="271.8" cy="246.5" r="1.8" class="c34"/><circle cx="287.3" cy="238.9" r="2.0" class="c30"/><circle cx="280.7" cy="207.2" r="2.6" class="c54"/><circle cx="351.1" cy="236.1" r="2.1" class="c2"/><circle cx="325.4" cy="250.0" r="2.5" class="c49"/><circle cx="312.9" cy="230.2" r="2.6" class="c45"/><circle cx="335.5" cy="231.7" r="2.3" class="c30"/><circle cx="300.3" cy="252.2" r="2.8" class="c60"/><circle cx="358.0" cy="232.0" r="2.7" class="c41"/><circle cx="360.8" cy="249.9" r="1.9" class="c41"/><circle cx="301.4" cy="239.9" r="2.8" class="c27"/><circle cx="335.3" cy="218.4" r="2.6" class="c62"/><circle cx="329.1" cy="224.7" r="2.2" class="c31"/><circle cx="366.3" cy="224.9" r="2.1" class="c6"/><circle cx="372.0" cy="243.7" r="2.5" class="c49"/><circle cx="350.4" cy="232.0" r="2.0" class="c11"/><circle cx="326.5" cy="241.0" r="2.6" class="c38"/><circle cx="286.1" cy="236.5" r="2.8" class="c34"/><circle cx="346.8" cy="237.2" r="2.4" class="c3"/><circle cx="327.4" cy="205.1" r="2.7" class="c27"/><circle cx="311.5" cy="218.9" r="2.6" class="c54"/><circle cx="268.7" cy="254.9" r="2.2" class="c28"/><circle cx="322.7" cy="235.5" r="2.0" class="c35"/><circle cx="288.9" cy="245.3" r="2.2" class="c34"/><circle cx="352.4" cy="250.8" r="2.7" class="c35"/><circle cx="350.8" cy="241.6" r="2.8" class="c34"/><circle cx="294.3" cy="232.7" r="2.2" class="c31"/><circle cx="329.9" cy="246.5" r="1.9" class="c49"/><circle cx="273.8" cy="239.5" r="2.4" class="c26"/><circle cx="351.2" cy="234.3" r="2.7" class="c30"/><circle cx="296.9" cy="244.9" r="2.5" class="c3"/><circle cx="365.2" cy="165.6" r="2.1" class="c11"/><circle cx="366.2" cy="169.2" r="2.4" class="c24"/><circle cx="367.1" cy="174.8" r="2.4" class="c35"/><circle cx="365.0" cy="181.9" r="2.0" class="c21"/><circle cx="367.7" cy="187.6" r="2.5" class="c39"/><circle cx="367.2" cy="194.0" r="2.0" class="c34"/><circle cx="365.6" cy="202.2" r="2.2" class="c24"/><circle cx="368.2" cy="206.3" r="2.1" class="c6"/><circle cx="368.2" cy="212.1" r="2.3" class="c11"/><circle cx="369.6" cy="216.8" r="2.0" class="c30"/><circle cx="367.3" cy="221.1" r="2.2" class="c28"/><circle cx="368.4" cy="225.2" r="1.9" class="c22"/><circle cx="368.6" cy="234.3" r="2.2" class="c39"/><circle cx="370.0" cy="237.7" r="2.1" class="c8"/><circle cx="369.2" cy="243.9" r="2.4" class="c16"/><circle cx="368.8" cy="251.7" r="2.3" class="c24"/><circle cx="370.7" cy="256.0" r="2.3" class="c41"/><circle cx="370.5" cy="261.5" r="2.5" class="c16"/><circle cx="369.7" cy="265.8" r="2.3" class="c28"/><circle cx="322.0" cy="162.5" r="2.4" class="c27"/><circle cx="320.9" cy="165.4" r="2.1" class="c28"/><circle cx="322.4" cy="188.6" r="2.4" class="c1"/><circle cx="324.7" cy="193.4" r="2.0" class="c3"/><circle cx="323.6" cy="197.3" r="2.5" class="c27"/><circle cx="322.8" cy="201.1" r="2.3" class="c46"/><circle cx="324.1" cy="209.5" r="2.5" class="c33"/><circle cx="324.4" cy="213.5" r="2.5" class="c34"/><circle cx="324.7" cy="223.7" r="2.0" class="c3"/><circle cx="325.7" cy="224.8" r="2.4" class="c50"/><circle cx="327.4" cy="232.2" r="2.1" class="c7"/><circle cx="324.2" cy="241.7" r="2.5" class="c33"/><circle cx="326.8" cy="246.1" r="2.4" class="c6"/><circle cx="328.8" cy="252.1" r="2.1" class="c29"/><circle cx="325.9" cy="253.3" r="2.4" class="c32"/><circle cx="391.6" cy="273.5" r="3.2" class="c32"/><circle cx="395.8" cy="274.2" r="3.4" class="c13"/><circle cx="400.9" cy="271.8" r="2.9" class="c7"/><circle cx="404.8" cy="273.4" r="3.6" class="c24"/><circle cx="407.7" cy="272.7" r="2.8" class="c33"/><circle cx="409.3" cy="273.5" r="2.9" class="c43"/><circle cx="416.0" cy="272.9" r="3.2" class="c47"/><circle cx="419.9" cy="274.2" r="2.9" class="c23"/><circle cx="419.9" cy="273.2" r="3.7" class="c24"/><circle cx="424.1" cy="275.2" r="3.6" class="c34"/><circle cx="430.5" cy="276.3" r="3.8" class="c13"/><circle cx="432.3" cy="274.4" r="3.6" class="c1"/><circle cx="436.5" cy="273.8" r="3.6" class="c20"/><circle cx="440.4" cy="274.6" r="3.3" class="c5"/><circle cx="444.7" cy="275.1" r="3.5" class="c7"/><circle cx="444.5" cy="276.4" r="3.5" class="c11"/><circle cx="449.0" cy="277.4" r="3.6" class="c20"/><circle cx="447.6" cy="283.3" r="3.3" class="c1"/><circle cx="449.8" cy="287.4" r="3.6" class="c2"/><circle cx="452.1" cy="292.5" r="3.8" class="c32"/><circle cx="454.3" cy="292.1" r="3.0" class="c32"/><circle cx="455.0" cy="294.7" r="4.2" class="c16"/><circle cx="457.1" cy="298.7" r="3.7" class="c24"/><circle cx="456.6" cy="304.3" r="3.0" class="c11"/><circle cx="459.4" cy="304.7" r="3.4" class="c24"/><circle cx="460.9" cy="310.2" r="4.1" class="c44"/><circle cx="459.7" cy="311.1" r="3.6" class="c20"/><circle cx="462.3" cy="318.6" r="2.8" class="c16"/><circle cx="461.8" cy="322.6" r="3.3" class="c50"/><circle cx="464.1" cy="325.4" r="3.4" class="c3"/><circle cx="465.4" cy="327.0" r="3.2" class="c5"/><circle cx="467.6" cy="329.8" r="2.9" class="c33"/><circle cx="464.2" cy="334.3" r="3.4" class="c23"/><circle cx="467.6" cy="338.2" r="3.7" class="c6"/><circle cx="467.6" cy="343.8" r="3.9" class="c23"/><circle cx="469.5" cy="346.5" r="3.9" class="c47"/><circle cx="466.8" cy="349.3" r="2.8" class="c41"/><circle cx="470.1" cy="353.5" r="3.6" class="c43"/><circle cx="469.7" cy="355.2" r="3.2" class="c33"/><circle cx="472.3" cy="363.3" r="3.7" class="c1"/><circle cx="470.8" cy="363.5" r="4.2" class="c16"/><circle cx="471.1" cy="368.1" r="2.7" class="c1"/><circle cx="471.6" cy="373.4" r="3.9" class="c47"/><circle cx="471.3" cy="375.7" r="3.3" class="c42"/><circle cx="472.5" cy="377.9" r="4.0" class="c11"/><circle cx="471.1" cy="383.4" r="2.9" class="c31"/><circle cx="469.1" cy="388.7" r="4.4" class="c48"/><circle cx="467.3" cy="396.2" r="4.8" class="c2"/><circle cx="465.4" cy="405.1" r="3.0" class="c29"/><circle cx="458.9" cy="415.6" r="3.4" class="c1"/><circle cx="455.9" cy="418.9" r="4.8" class="c45"/><circle cx="455.3" cy="428.2" r="4.5" class="c36"/><circle cx="454.2" cy="434.5" r="4.9" class="c5"/><circle cx="443.7" cy="449.2" r="3.4" class="c24"/><circle cx="446.0" cy="455.0" r="4.9" class="c5"/><circle cx="445.6" cy="458.0" r="4.5" class="c32"/><circle cx="449.4" cy="463.6" r="3.6" class="c2"/><circle cx="454.1" cy="465.2" r="4.2" class="c16"/><circle cx="450.7" cy="474.5" r="3.9" class="c16"/><circle cx="453.4" cy="481.5" r="5.3" class="c43"/><circle cx="456.6" cy="481.9" r="5.1" class="c6"/><circle cx="457.6" cy="487.3" r="4.7" class="c32"/><circle cx="455.8" cy="492.2" r="5.3" class="c2"/><circle cx="461.2" cy="498.7" r="5.5" class="c24"/><circle cx="462.0" cy="502.2" r="4.1" class="c36"/><circle cx="465.4" cy="502.7" r="5.1" class="c47"/><circle cx="467.5" cy="509.7" r="4.2" class="c13"/><circle cx="467.5" cy="512.9" r="3.6" class="c6"/><circle cx="485.5" cy="262.1" r="1.2" class="c47"/><circle cx="486.0" cy="263.5" r="1.1" class="c5"/><circle cx="486.3" cy="264.8" r="1.0" class="c5"/><circle cx="486.7" cy="266.0" r="0.9" class="c47"/><circle cx="487.1" cy="267.2" r="0.9" class="c47"/><circle cx="487.4" cy="268.2" r="1.0" class="c33"/><circle cx="487.7" cy="269.4" r="1.0" class="c24"/><circle cx="488.2" cy="270.8" r="1.1" class="c43"/><circle cx="488.5" cy="271.8" r="1.2" class="c10"/><circle cx="488.9" cy="273.2" r="1.2" class="c6"/><circle cx="489.3" cy="274.5" r="1.1" class="c34"/><circle cx="489.6" cy="275.7" r="0.9" class="c13"/><circle cx="490.0" cy="276.9" r="0.9" class="c43"/><circle cx="490.4" cy="278.1" r="1.3" class="c12"/><circle cx="490.7" cy="279.3" r="1.1" class="c47"/><circle cx="491.1" cy="280.4" r="1.2" class="c24"/><circle cx="458.6" cy="265.6" r="2.6" class="c47"/><circle cx="461.3" cy="262.3" r="3.1" class="c39"/><circle cx="466.0" cy="259.8" r="2.9" class="c13"/><circle cx="468.8" cy="259.6" r="3.1" class="c44"/><circle cx="472.6" cy="257.5" r="2.9" class="c1"/><circle cx="477.2" cy="255.2" r="3.2" class="c7"/><circle cx="481.0" cy="250.2" r="2.7" class="c39"/><circle cx="484.8" cy="251.0" r="2.8" class="c11"/><circle cx="487.0" cy="249.0" r="2.7" class="c44"/><circle cx="491.6" cy="248.5" r="2.7" class="c6"/><circle cx="495.4" cy="247.0" r="3.0" class="c22"/><circle cx="506.8" cy="252.4" r="3.2" class="c34"/><circle cx="506.9" cy="257.7" r="3.3" class="c5"/><circle cx="508.0" cy="260.0" r="4.2" class="c22"/><circle cx="509.6" cy="263.7" r="4.4" class="c44"/><circle cx="508.3" cy="267.0" r="3.3" class="c6"/><circle cx="507.0" cy="270.6" r="4.4" class="c10"/><circle cx="510.1" cy="274.0" r="3.5" class="c3"/><circle cx="507.2" cy="280.0" r="3.3" class="c42"/><circle cx="508.9" cy="282.9" r="2.9" class="c22"/><circle cx="509.6" cy="287.0" r="2.9" class="c47"/><circle cx="511.2" cy="288.9" r="2.8" class="c20"/><circle cx="514.3" cy="289.2" r="3.3" class="c47"/><circle cx="518.8" cy="291.1" r="4.0" class="c1"/><circle cx="524.7" cy="291.1" r="4.3" class="c13"/><circle cx="525.6" cy="296.4" r="3.6" class="c5"/><circle cx="527.7" cy="298.1" r="3.9" class="c12"/><circle cx="528.4" cy="301.6" r="3.3" class="c31"/><circle cx="531.9" cy="303.1" r="4.0" class="c2"/><circle cx="532.9" cy="306.5" r="4.2" class="c18"/><circle cx="535.6" cy="312.9" r="4.0" class="c47"/><circle cx="534.0" cy="314.1" r="3.2" class="c32"/><circle cx="535.8" cy="321.7" r="3.4" class="c39"/><circle cx="536.1" cy="327.0" r="3.8" class="c5"/><circle cx="535.9" cy="326.7" r="4.5" class="c20"/><circle cx="537.2" cy="328.1" r="3.9" class="c51"/><circle cx="539.9" cy="336.5" r="4.4" class="c18"/><circle cx="540.2" cy="339.1" r="3.3" class="c14"/><circle cx="537.9" cy="346.0" r="4.2" class="c32"/><circle cx="539.7" cy="349.3" r="4.0" class="c16"/><circle cx="537.3" cy="353.3" r="4.2" class="c5"/><circle cx="535.2" cy="359.1" r="3.2" class="c20"/><circle cx="535.5" cy="361.5" r="4.3" class="c8"/><circle cx="535.3" cy="364.4" r="3.8" class="c33"/><circle cx="533.0" cy="364.8" r="3.4" class="c6"/><circle cx="532.8" cy="371.6" r="3.5" class="c14"/><circle cx="531.4" cy="375.8" r="4.7" class="c3"/><circle cx="530.5" cy="377.4" r="4.2" class="c47"/><circle cx="528.9" cy="385.0" r="4.4" class="c46"/><circle cx="531.3" cy="390.0" r="4.6" class="c18"/><circle cx="533.1" cy="392.0" r="3.7" class="c8"/><circle cx="531.1" cy="398.4" r="3.7" class="c3"/><circle cx="532.6" cy="401.7" r="4.4" class="c32"/><circle cx="530.5" cy="408.3" r="5.1" class="c3"/><circle cx="530.5" cy="411.8" r="5.0" class="c47"/><circle cx="525.8" cy="419.8" r="3.2" class="c5"/><circle cx="521.8" cy="421.8" r="4.6" class="c39"/><circle cx="519.5" cy="428.4" r="4.5" class="c41"/><circle cx="517.9" cy="431.1" r="3.4" class="c22"/><circle cx="511.6" cy="436.2" r="4.9" class="c43"/><circle cx="512.2" cy="438.7" r="3.9" class="c41"/><circle cx="506.6" cy="440.6" r="4.3" class="c23"/><circle cx="506.6" cy="443.3" r="3.6" class="c2"/><circle cx="500.7" cy="447.5" r="4.2" class="c13"/><circle cx="500.9" cy="449.8" r="3.4" class="c47"/><circle cx="497.6" cy="452.6" r="3.2" class="c1"/><circle cx="492.2" cy="457.6" r="3.6" class="c20"/><circle cx="488.9" cy="459.0" r="3.1" class="c33"/><circle cx="484.3" cy="464.5" r="4.7" class="c36"/><circle cx="484.8" cy="466.5" r="4.4" class="c42"/><circle cx="480.2" cy="471.9" r="3.6" class="c12"/><circle cx="478.6" cy="473.4" r="4.2" class="c43"/><circle cx="475.6" cy="477.6" r="4.8" class="c41"/><circle cx="473.7" cy="481.2" r="3.3" class="c39"/><circle cx="470.4" cy="484.8" r="4.0" class="c21"/><circle cx="467.1" cy="486.2" r="5.1" class="c21"/><circle cx="278.5" cy="512.9" r="4.0" class="c4"/><circle cx="285.9" cy="510.5" r="4.7" class="c49"/><circle cx="302.1" cy="505.0" r="3.2" class="c27"/><circle cx="309.9" cy="501.5" r="3.7" class="c55"/><circle cx="317.9" cy="500.7" r="4.3" class="c28"/><circle cx="327.6" cy="503.0" r="3.1" class="c46"/><circle cx="338.8" cy="501.5" r="4.4" class="c39"/><circle cx="349.6" cy="501.0" r="3.4" class="c4"/><circle cx="361.1" cy="505.5" r="3.1" class="c58"/><circle cx="372.0" cy="502.4" r="3.8" class="c36"/><circle cx="378.0" cy="505.3" r="3.6" class="c35"/><circle cx="394.3" cy="503.7" r="4.0" class="c31"/><circle cx="402.3" cy="501.0" r="4.8" class="c36"/><circle cx="417.9" cy="496.4" r="3.2" class="c2"/><circle cx="429.0" cy="488.0" r="4.1" class="c36"/><circle cx="439.7" cy="486.6" r="4.9" class="c53"/><circle cx="445.5" cy="485.3" r="4.8" class="c62"/><circle cx="334.7" cy="253.2" r="3.0" class="c3"/><circle cx="334.3" cy="259.8" r="3.1" class="c24"/><circle cx="336.3" cy="263.2" r="2.6" class="c29"/><circle cx="338.0" cy="268.1" r="3.0" class="c5"/><circle cx="338.8" cy="272.2" r="2.4" class="c13"/><circle cx="340.3" cy="276.3" r="3.1" class="c34"/><circle cx="341.9" cy="282.1" r="2.8" class="c51"/><circle cx="343.0" cy="288.7" r="2.8" class="c2"/><circle cx="343.6" cy="291.5" r="2.8" class="c23"/><circle cx="343.4" cy="296.8" r="2.8" class="c23"/><circle cx="344.2" cy="301.1" r="2.6" class="c33"/><circle cx="343.9" cy="304.8" r="2.1" class="c34"/><circle cx="344.9" cy="308.6" r="2.5" class="c22"/><circle cx="346.5" cy="314.2" r="2.6" class="c16"/><circle cx="344.7" cy="319.1" r="3.1" class="c16"/><circle cx="344.8" cy="322.2" r="2.1" class="c20"/><circle cx="345.6" cy="329.0" r="2.6" class="c22"/><circle cx="347.4" cy="331.9" r="3.1" class="c13"/><circle cx="345.3" cy="336.1" r="2.8" class="c33"/><circle cx="346.4" cy="341.1" r="2.7" class="c6"/><circle cx="348.5" cy="346.4" r="2.6" class="c21"/><circle cx="348.6" cy="351.3" r="2.8" class="c12"/><circle cx="346.6" cy="356.2" r="3.0" class="c11"/><circle cx="348.5" cy="359.9" r="2.1" class="c32"/><circle cx="348.9" cy="364.6" r="3.1" class="c18"/><circle cx="348.3" cy="369.4" r="2.7" class="c61"/><circle cx="349.2" cy="373.2" r="2.1" class="c33"/><circle cx="347.6" cy="377.3" r="2.9" class="c3"/><circle cx="349.4" cy="384.5" r="2.5" class="c43"/><circle cx="350.7" cy="387.2" r="2.8" class="c6"/><circle cx="350.6" cy="392.6" r="2.4" class="c2"/><circle cx="351.1" cy="397.0" r="2.8" class="c10"/><circle cx="350.2" cy="402.5" r="2.0" class="c13"/><circle cx="350.4" cy="406.9" r="3.1" class="c12"/><circle cx="351.1" cy="411.9" r="2.6" class="c6"/><circle cx="350.3" cy="416.0" r="2.5" class="c2"/><circle cx="351.4" cy="420.0" r="2.7" class="c5"/><circle cx="351.8" cy="424.1" r="2.9" class="c33"/><circle cx="351.5" cy="428.0" r="3.0" class="c24"/><circle cx="349.5" cy="433.5" r="3.2" class="c8"/><circle cx="349.1" cy="439.1" r="2.5" class="c47"/><circle cx="347.7" cy="442.4" r="2.5" class="c2"/><circle cx="345.5" cy="447.4" r="3.2" class="c6"/><circle cx="345.3" cy="452.1" r="3.2" class="c20"/><circle cx="343.2" cy="457.6" r="2.9" class="c5"/><circle cx="343.3" cy="460.8" r="2.1" class="c20"/><circle cx="342.5" cy="464.4" r="2.1" class="c16"/><circle cx="340.0" cy="469.3" r="2.7" class="c2"/><circle cx="338.9" cy="473.7" r="2.1" class="c6"/><circle cx="338.4" cy="478.5" r="2.2" class="c46"/><circle cx="335.7" cy="484.4" r="2.9" class="c39"/><circle cx="368.8" cy="277.0" r="1.9" class="c41"/><circle cx="367.6" cy="280.3" r="2.2" class="c48"/><circle cx="370.5" cy="283.2" r="2.4" class="c3"/><circle cx="368.6" cy="287.7" r="2.5" class="c41"/><circle cx="370.5" cy="289.9" r="2.1" class="c15"/><circle cx="370.4" cy="295.7" r="1.8" class="c8"/><circle cx="370.8" cy="299.5" r="1.8" class="c61"/><circle cx="371.5" cy="303.6" r="1.9" class="c29"/><circle cx="372.2" cy="305.8" r="2.3" class="c29"/><circle cx="372.2" cy="309.9" r="2.2" class="c44"/><circle cx="372.5" cy="315.0" r="2.2" class="c8"/><circle cx="373.8" cy="320.9" r="2.5" class="c41"/><circle cx="375.2" cy="324.2" r="2.2" class="c32"/><circle cx="372.3" cy="328.2" r="2.1" class="c3"/><circle cx="374.7" cy="333.6" r="2.6" class="c15"/><circle cx="373.9" cy="337.1" r="2.2" class="c12"/><circle cx="374.2" cy="340.3" r="2.4" class="c44"/><circle cx="375.2" cy="345.3" r="1.9" class="c41"/><circle cx="375.1" cy="348.3" r="1.9" class="c44"/><circle cx="376.1" cy="354.7" r="1.9" class="c41"/><circle cx="376.1" cy="357.1" r="2.1" class="c10"/><circle cx="376.3" cy="359.2" r="2.4" class="c50"/><circle cx="378.2" cy="364.9" r="2.4" class="c34"/><circle cx="376.3" cy="366.8" r="1.8" class="c44"/><circle cx="378.6" cy="371.0" r="2.5" class="c15"/><circle cx="378.9" cy="376.7" r="1.9" class="c47"/><circle cx="377.8" cy="380.7" r="1.8" class="c44"/><circle cx="377.8" cy="383.9" r="2.5" class="c31"/><circle cx="377.7" cy="386.3" r="2.1" class="c12"/><circle cx="380.4" cy="393.4" r="2.5" class="c50"/><circle cx="378.0" cy="395.4" r="2.3" class="c33"/><circle cx="382.0" cy="399.9" r="1.9" class="c11"/><circle cx="379.5" cy="403.2" r="2.2" class="c41"/><circle cx="384.3" cy="404.2" r="1.9" class="c11"/><circle cx="387.9" cy="403.0" r="2.4" class="c44"/><circle cx="391.9" cy="403.3" r="2.6" class="c8"/><circle cx="395.2" cy="402.4" r="2.1" class="c8"/><circle cx="400.5" cy="403.3" r="1.8" class="c31"/><circle cx="405.1" cy="403.3" r="2.4" class="c1"/><circle cx="406.6" cy="403.8" r="1.9" class="c50"/><circle cx="412.0" cy="403.1" r="2.5" class="c44"/><circle cx="415.9" cy="403.3" r="2.4" class="c11"/><circle cx="421.2" cy="403.7" r="1.9" class="c8"/><circle cx="424.8" cy="402.3" r="2.3" class="c44"/><circle cx="430.3" cy="402.6" r="2.0" class="c29"/><circle cx="433.9" cy="401.8" r="1.8" class="c44"/><circle cx="438.0" cy="401.2" r="2.3" class="c8"/><circle cx="440.8" cy="403.9" r="2.1" class="c44"/><circle cx="445.9" cy="402.5" r="2.3" class="c50"/><circle cx="449.6" cy="402.0" r="2.0" class="c8"/><circle cx="454.8" cy="401.2" r="2.3" class="c21"/><circle cx="461.0" cy="399.3" r="2.5" class="c15"/><circle cx="463.5" cy="400.1" r="2.5" class="c15"/><circle cx="467.0" cy="400.1" r="2.5" class="c41"/><circle cx="473.3" cy="399.8" r="2.3" class="c41"/><circle cx="477.2" cy="400.2" r="1.9" class="c8"/><circle cx="478.9" cy="397.9" r="2.2" class="c29"/><circle cx="485.9" cy="398.1" r="2.0" class="c8"/><circle cx="416.1" cy="313.1" r="0.9" class="c50"/><circle cx="417.3" cy="313.9" r="0.9" class="c44"/><circle cx="418.1" cy="314.4" r="1.1" class="c41"/><circle cx="419.0" cy="315.1" r="1.2" class="c50"/><circle cx="420.0" cy="315.8" r="1.1" class="c50"/><circle cx="421.2" cy="316.5" r="1.1" class="c51"/><circle cx="422.1" cy="317.2" r="1.0" class="c51"/><circle cx="423.1" cy="317.9" r="1.0" class="c41"/><circle cx="424.1" cy="318.5" r="0.9" class="c8"/><circle cx="425.0" cy="319.2" r="1.1" class="c44"/><circle cx="426.1" cy="319.9" r="1.2" class="c8"/><circle cx="427.2" cy="320.6" r="1.1" class="c41"/><circle cx="428.2" cy="321.4" r="0.9" class="c44"/><circle cx="429.1" cy="322.0" r="1.0" class="c41"/><circle cx="430.2" cy="322.7" r="0.9" class="c44"/><circle cx="431.2" cy="323.4" r="1.1" class="c8"/><circle cx="432.3" cy="324.1" r="1.0" class="c50"/><circle cx="517.0" cy="348.0" r="4.8" class="c6"/><circle cx="508.5" cy="405.5" r="4.8" class="c34"/><circle cx="488.0" cy="434.0" r="4.5" class="c2"/><circle cx="511.0" cy="475.0" r="4.8" class="c16"/><circle cx="514.0" cy="487.0" r="4.5" class="c27"/><circle cx="436.0" cy="493.0" r="4.5" class="c36"/><circle cx="420.0" cy="497.0" r="5.0" class="c46"/><circle cx="253.5" cy="404.8" r="2.2" class="c5"/><circle cx="261.6" cy="403.4" r="2.5" class="c1"/><circle cx="271.0" cy="403.4" r="2.6" class="c22"/><circle cx="279.1" cy="399.5" r="2.0" class="c28"/><circle cx="289.3" cy="400.0" r="2.1" class="c39"/><circle cx="301.2" cy="400.3" r="2.5" class="c1"/><circle cx="308.1" cy="397.9" r="2.7" class="c2"/><circle cx="316.3" cy="399.5" r="2.4" class="c33"/><circle cx="395.8" cy="275.4" r="2.8" class="c29"/><circle cx="396.3" cy="281.1" r="2.5" class="c47"/><circle cx="397.0" cy="285.7" r="2.0" class="c3"/><circle cx="399.3" cy="290.1" r="2.7" class="c39"/><circle cx="395.2" cy="296.1" r="2.3" class="c16"/><circle cx="397.7" cy="299.2" r="2.7" class="c47"/><circle cx="398.0" cy="306.0" r="2.7" class="c44"/><circle cx="398.7" cy="309.1" r="2.5" class="c1"/><circle cx="398.0" cy="314.5" r="2.4" class="c50"/><circle cx="398.8" cy="317.0" r="2.2" class="c39"/><circle cx="398.1" cy="321.6" r="2.8" class="c2"/><circle cx="398.9" cy="327.4" r="2.7" class="c2"/><circle cx="399.8" cy="331.4" r="2.1" class="c50"/><circle cx="401.6" cy="337.7" r="2.6" class="c1"/><circle cx="268.5" cy="254.5" r="1.9" class="c49"/><circle cx="270.1" cy="260.3" r="2.1" class="c16"/><circle cx="270.4" cy="264.0" r="2.0" class="c50"/><circle cx="271.7" cy="269.4" r="1.9" class="c45"/><circle cx="272.5" cy="273.8" r="1.8" class="c31"/><circle cx="271.9" cy="277.6" r="2.4" class="c45"/><circle cx="270.9" cy="285.7" r="2.1" class="c29"/><circle cx="273.7" cy="286.5" r="1.8" class="c11"/><circle cx="273.3" cy="292.9" r="2.0" class="c11"/><circle cx="273.8" cy="299.3" r="2.1" class="c29"/><circle cx="272.7" cy="306.0" r="2.3" class="c49"/><circle cx="275.8" cy="309.6" r="1.9" class="c16"/><circle cx="273.8" cy="314.4" r="2.5" class="c5"/><circle cx="276.5" cy="319.3" r="1.8" class="c47"/><circle cx="277.3" cy="323.3" r="2.1" class="c28"/><circle cx="277.6" cy="329.3" r="2.5" class="c8"/><circle cx="277.6" cy="333.7" r="2.0" class="c32"/><circle cx="286.4" cy="304.7" r="2.6" class="c6"/><circle cx="293.3" cy="301.7" r="2.6" class="c32"/><circle cx="302.6" cy="303.7" r="2.4" class="c35"/><circle cx="307.6" cy="303.2" r="2.6" class="c49"/><circle cx="314.8" cy="301.4" r="2.5" class="c6"/><circle cx="322.8" cy="303.8" r="2.6" class="c5"/><circle cx="329.1" cy="302.6" r="2.2" class="c34"/><circle cx="337.1" cy="303.1" r="2.3" class="c36"/><circle cx="347.9" cy="304.8" r="2.8" class="c12"/><circle cx="352.8" cy="303.0" r="2.3" class="c5"/><circle cx="358.7" cy="302.9" r="2.1" class="c39"/><circle cx="366.5" cy="302.3" r="2.4" class="c21"/><circle cx="376.7" cy="302.9" r="2.1" class="c36"/><circle cx="382.9" cy="302.5" r="2.7" class="c1"/><circle cx="390.6" cy="303.6" r="2.2" class="c39"/><circle cx="287.7" cy="321.6" r="2.4" class="c3"/><circle cx="294.9" cy="321.4" r="2.1" class="c45"/><circle cx="304.6" cy="322.9" r="2.4" class="c8"/><circle cx="312.7" cy="321.9" r="2.8" class="c1"/><circle cx="320.7" cy="321.8" r="2.6" class="c21"/><circle cx="329.5" cy="323.2" r="2.6" class="c21"/><circle cx="337.8" cy="321.0" r="2.6" class="c49"/><circle cx="344.5" cy="321.7" r="2.2" class="c11"/><circle cx="354.5" cy="323.1" r="2.1" class="c26"/><circle cx="379.1" cy="340.9" r="2.5" class="c11"/><circle cx="384.4" cy="338.6" r="2.6" class="c39"/><circle cx="391.2" cy="340.9" r="2.2" class="c5"/><circle cx="400.5" cy="340.9" r="2.1" class="c31"/><circle cx="400.3" cy="340.1" r="2.2" class="c39"/><circle cx="410.4" cy="339.6" r="2.2" class="c35"/><circle cx="562.0" cy="303.2" r="2.1" class="c3"/><circle cx="563.5" cy="312.5" r="2.2" class="c38"/><circle cx="564.2" cy="319.2" r="2.1" class="c39"/><circle cx="563.5" cy="324.6" r="1.9" class="c36"/><circle cx="565.1" cy="331.3" r="1.9" class="c46"/><circle cx="563.1" cy="336.5" r="2.2" class="c16"/><circle cx="564.1" cy="342.1" r="1.8" class="c46"/><circle cx="567.0" cy="347.0" r="2.2" class="c46"/><circle cx="565.1" cy="352.7" r="2.0" class="c1"/><circle cx="539.0" cy="290.2" r="2.3" class="c29"/><circle cx="543.3" cy="290.4" r="2.3" class="c1"/><circle cx="550.4" cy="290.0" r="1.9" class="c36"/><circle cx="556.1" cy="289.6" r="1.9" class="c22"/><circle cx="525.4" cy="386.0" r="2.7" class="c17"/><circle cx="525.0" cy="385.2" r="2.1" class="c17"/><circle cx="530.9" cy="382.4" r="3.0" class="c17"/><circle cx="525.7" cy="383.1" r="2.9" class="c17"/><circle cx="530.0" cy="385.9" r="2.9" class="c17"/><circle cx="521.8" cy="384.1" r="2.8" class="c17"/><circle cx="525.0" cy="389.8" r="2.0" class="c17"/><circle cx="527.0" cy="384.7" r="2.1" class="c17"/><circle cx="528.9" cy="385.3" r="2.6" class="c17"/><circle cx="523.6" cy="386.3" r="2.9" class="c17"/><circle cx="526.5" cy="385.6" r="2.9" class="c17"/><circle cx="534.7" cy="384.3" r="2.9" class="c17"/><circle cx="525.7" cy="384.7" r="2.9" class="c17"/><circle cx="529.7" cy="384.5" r="2.2" class="c17"/><circle cx="276.1" cy="331.5" r="2.1" class="c25"/><circle cx="344.0" cy="296.1" r="2.3" class="c63"/><circle cx="438.8" cy="353.5" r="2.0" class="c30"/><circle cx="327.4" cy="402.7" r="2.2" class="c45"/><circle cx="430.8" cy="410.5" r="2.0" class="c63"/><circle cx="377.6" cy="321.2" r="2.5" class="c45"/><circle cx="323.4" cy="310.9" r="2.8" class="c28"/><circle cx="305.4" cy="299.9" r="2.7" class="c56"/><circle cx="399.7" cy="388.4" r="2.2" class="c63"/><circle cx="440.7" cy="340.3" r="2.0" class="c39"/><circle cx="288.0" cy="338.2" r="1.9" class="c45"/><circle cx="295.3" cy="307.1" r="2.0" class="c54"/><circle cx="372.8" cy="419.8" r="2.3" class="c22"/><circle cx="327.8" cy="332.0" r="2.6" class="c38"/><circle cx="427.2" cy="368.9" r="2.1" class="c58"/><circle cx="388.2" cy="372.0" r="1.9" class="c53"/><circle cx="424.8" cy="348.4" r="2.5" class="c53"/><circle cx="408.2" cy="347.4" r="2.2" class="c62"/><circle cx="317.0" cy="411.7" r="2.4" class="c59"/><circle cx="409.3" cy="355.6" r="1.8" class="c25"/><circle cx="378.9" cy="393.6" r="1.9" class="c64"/><circle cx="420.7" cy="318.1" r="2.5" class="c60"/><circle cx="415.7" cy="347.5" r="2.0" class="c65"/><circle cx="354.6" cy="406.4" r="2.6" class="c46"/><circle cx="331.0" cy="379.6" r="2.7" class="c66"/><circle cx="443.6" cy="355.5" r="2.1" class="c27"/><circle cx="298.0" cy="303.6" r="2.5" class="c38"/><circle cx="366.9" cy="301.9" r="2.1" class="c62"/><circle cx="370.9" cy="335.4" r="2.3" class="c67"/><circle cx="279.2" cy="337.5" r="2.3" class="c62"/><circle cx="401.4" cy="404.3" r="2.4" class="c54"/><circle cx="278.9" cy="330.8" r="2.1" class="c45"/><circle cx="336.3" cy="385.9" r="2.7" class="c45"/><circle cx="408.7" cy="271.4" r="2.3" class="c59"/><circle cx="388.2" cy="351.9" r="2.8" class="c62"/><circle cx="367.5" cy="326.9" r="2.0" class="c56"/><circle cx="368.0" cy="292.5" r="2.0" class="c60"/><circle cx="362.9" cy="340.0" r="2.2" class="c4"/><circle cx="417.7" cy="371.0" r="1.8" class="c62"/><circle cx="430.0" cy="414.2" r="2.6" class="c49"/><circle cx="281.5" cy="284.3" r="2.4" class="c53"/><circle cx="351.1" cy="401.3" r="2.6" class="c59"/><circle cx="404.4" cy="326.8" r="2.6" class="c38"/><circle cx="411.6" cy="295.0" r="2.7" class="c67"/><circle cx="425.9" cy="409.6" r="1.8" class="c26"/><circle cx="444.7" cy="338.2" r="2.5" class="c21"/><circle cx="318.2" cy="364.3" r="2.2" class="c28"/><circle cx="330.2" cy="418.0" r="2.8" class="c58"/><circle cx="330.8" cy="276.0" r="2.7" class="c4"/><circle cx="362.6" cy="406.7" r="2.1" class="c22"/><circle cx="417.6" cy="373.3" r="1.9" class="c56"/><circle cx="408.9" cy="317.3" r="2.6" class="c53"/><circle cx="437.2" cy="408.8" r="2.5" class="c59"/><circle cx="341.6" cy="365.7" r="1.8" class="c25"/><circle cx="376.3" cy="294.0" r="2.7" class="c30"/><circle cx="306.8" cy="285.8" r="2.6" class="c49"/><circle cx="322.7" cy="356.8" r="2.3" class="c58"/><circle cx="413.2" cy="273.5" r="2.3" class="c27"/><circle cx="298.2" cy="376.2" r="2.7" class="c59"/><circle cx="415.3" cy="342.0" r="2.6" class="c62"/><circle cx="361.3" cy="391.0" r="1.9" class="c60"/><circle cx="361.5" cy="346.5" r="2.6" class="c38"/><circle cx="304.8" cy="349.7" r="2.4" class="c62"/><circle cx="356.3" cy="307.1" r="1.8" class="c15"/><circle cx="302.0" cy="409.3" r="2.4" class="c62"/><circle cx="269.3" cy="374.3" r="2.5" class="c28"/><circle cx="327.5" cy="318.4" r="2.0" class="c28"/><circle cx="416.2" cy="410.4" r="2.8" class="c25"/><circle cx="288.8" cy="305.7" r="1.8" class="c28"/><circle cx="349.6" cy="289.1" r="2.0" class="c15"/><circle cx="324.2" cy="326.2" r="2.7" class="c30"/><circle cx="346.4" cy="403.4" r="2.3" class="c59"/><circle cx="328.3" cy="362.2" r="2.4" class="c28"/><circle cx="355.9" cy="318.5" r="1.8" class="c28"/><circle cx="423.7" cy="324.0" r="2.7" class="c38"/><circle cx="276.7" cy="335.8" r="2.0" class="c45"/><circle cx="303.6" cy="332.1" r="2.1" class="c21"/><circle cx="354.1" cy="395.2" r="2.5" class="c45"/><circle cx="366.0" cy="289.4" r="2.0" class="c62"/><circle cx="358.5" cy="339.2" r="2.7" class="c30"/><circle cx="285.1" cy="276.4" r="1.9" class="c49"/><circle cx="400.2" cy="342.7" r="2.2" class="c25"/><circle cx="452.1" cy="361.9" r="2.2" class="c30"/><circle cx="367.6" cy="303.1" r="2.3" class="c27"/><circle cx="326.5" cy="385.4" r="2.1" class="c62"/><circle cx="373.2" cy="418.3" r="1.9" class="c59"/><circle cx="420.2" cy="336.4" r="2.1" class="c55"/><circle cx="313.9" cy="396.4" r="2.3" class="c58"/><circle cx="446.7" cy="317.8" r="2.4" class="c58"/><circle cx="282.5" cy="318.7" r="2.2" class="c26"/><circle cx="316.3" cy="376.3" r="2.8" class="c22"/><circle cx="295.3" cy="340.5" r="1.8" class="c59"/><circle cx="372.4" cy="368.5" r="1.8" class="c56"/><circle cx="344.5" cy="334.7" r="2.0" class="c27"/><circle cx="377.2" cy="278.8" r="2.5" class="c35"/><circle cx="305.4" cy="373.0" r="2.7" class="c30"/><circle cx="361.7" cy="278.3" r="2.1" class="c30"/><circle cx="273.8" cy="383.8" r="2.7" class="c60"/><circle cx="393.2" cy="279.8" r="2.6" class="c56"/><circle cx="280.6" cy="309.6" r="2.4" class="c55"/><circle cx="422.1" cy="381.0" r="2.8" class="c30"/><circle cx="294.5" cy="281.9" r="2.6" class="c36"/><circle cx="275.2" cy="319.1" r="2.7" class="c45"/><circle cx="274.8" cy="336.7" r="1.9" class="c55"/><circle cx="386.6" cy="315.5" r="2.1" class="c46"/><circle cx="388.4" cy="277.4" r="2.3" class="c49"/><circle cx="297.6" cy="292.8" r="2.7" class="c26"/><circle cx="379.1" cy="329.7" r="2.3" class="c63"/><circle cx="407.4" cy="379.2" r="2.2" class="c30"/><circle cx="306.2" cy="389.1" r="1.8" class="c26"/><circle cx="307.4" cy="413.6" r="2.0" class="c4"/><circle cx="338.9" cy="352.0" r="2.8" class="c45"/><circle cx="282.6" cy="291.9" r="2.1" class="c53"/><circle cx="393.7" cy="378.4" r="2.7" class="c22"/><circle cx="266.3" cy="311.5" r="2.3" class="c62"/><circle cx="300.6" cy="356.7" r="2.0" class="c28"/><circle cx="391.6" cy="312.0" r="1.9" class="c21"/><circle cx="448.3" cy="372.5" r="2.4" class="c49"/><circle cx="359.6" cy="320.8" r="2.1" class="c49"/><circle cx="350.1" cy="307.7" r="2.6" class="c60"/><circle cx="429.1" cy="382.9" r="2.5" class="c62"/><circle cx="338.7" cy="342.9" r="2.3" class="c59"/><circle cx="314.3" cy="302.3" r="2.4" class="c58"/><circle cx="423.3" cy="334.9" r="2.4" class="c35"/><circle cx="268.7" cy="354.8" r="1.9" class="c26"/><circle cx="273.6" cy="347.9" r="1.8" class="c4"/><circle cx="390.9" cy="368.1" r="1.8" class="c53"/><circle cx="428.8" cy="389.3" r="2.8" class="c30"/><circle cx="380.7" cy="413.5" r="2.7" class="c59"/><circle cx="369.5" cy="362.5" r="2.5" class="c27"/><circle cx="411.7" cy="387.1" r="2.7" class="c28"/><circle cx="445.4" cy="310.4" r="2.6" class="c56"/><circle cx="414.4" cy="380.0" r="2.6" class="c58"/><circle cx="422.5" cy="346.3" r="2.4" class="c62"/><circle cx="269.6" cy="319.0" r="2.3" class="c4"/><circle cx="410.1" cy="404.0" r="2.3" class="c21"/><circle cx="423.3" cy="308.9" r="1.9" class="c26"/><circle cx="455.4" cy="375.4" r="2.1" class="c54"/><circle cx="422.8" cy="386.5" r="2.5" class="c62"/><circle cx="321.1" cy="408.2" r="2.0" class="c25"/><circle cx="280.0" cy="369.8" r="2.7" class="c59"/><circle cx="382.8" cy="381.5" r="2.2" class="c30"/><circle cx="334.0" cy="292.8" r="2.1" class="c45"/><circle cx="334.1" cy="379.8" r="2.7" class="c38"/><circle cx="269.3" cy="335.2" r="2.2" class="c28"/><circle cx="272.7" cy="415.7" r="2.7" class="c28"/><circle cx="396.5" cy="366.9" r="1.9" class="c45"/><circle cx="288.1" cy="296.7" r="2.1" class="c36"/><circle cx="305.3" cy="365.7" r="2.5" class="c45"/><circle cx="280.4" cy="366.0" r="2.7" class="c36"/><circle cx="337.2" cy="376.2" r="2.4" class="c67"/><circle cx="322.5" cy="304.5" r="2.7" class="c58"/><circle cx="333.4" cy="335.2" r="2.7" class="c39"/><circle cx="382.4" cy="365.3" r="2.3" class="c56"/><circle cx="326.7" cy="272.6" r="1.9" class="c38"/><circle cx="322.9" cy="372.7" r="2.1" class="c26"/><circle cx="398.8" cy="347.6" r="2.5" class="c49"/><circle cx="388.8" cy="282.9" r="2.6" class="c46"/><circle cx="402.9" cy="385.7" r="2.3" class="c49"/><circle cx="447.1" cy="290.9" r="2.4" class="c45"/><circle cx="457.4" cy="442.2" r="3.6" class="c11"/><circle cx="417.9" cy="436.9" r="4.6" class="c2"/><circle cx="527.9" cy="416.2" r="4.2" class="c54"/><circle cx="535.4" cy="440.5" r="4.3" class="c3"/><circle cx="531.6" cy="499.7" r="3.2" class="c45"/><circle cx="525.7" cy="468.1" r="3.9" class="c15"/><circle cx="490.9" cy="506.7" r="3.7" class="c39"/><circle cx="483.0" cy="465.2" r="3.9" class="c60"/><circle cx="425.5" cy="434.2" r="4.5" class="c11"/><circle cx="486.5" cy="412.3" r="3.8" class="c21"/><circle cx="481.1" cy="404.2" r="3.6" class="c3"/><circle cx="446.5" cy="480.3" r="3.3" class="c55"/><circle cx="433.6" cy="419.4" r="4.4" class="c27"/><circle cx="431.8" cy="411.1" r="4.9" class="c49"/><circle cx="502.2" cy="455.5" r="3.1" class="c25"/><circle cx="510.9" cy="505.4" r="4.5" class="c49"/><circle cx="442.1" cy="427.6" r="4.4" class="c46"/><circle cx="445.4" cy="447.2" r="3.4" class="c39"/><circle cx="447.8" cy="459.5" r="3.8" class="c38"/><circle cx="462.1" cy="414.4" r="3.5" class="c60"/><circle cx="506.9" cy="437.7" r="4.6" class="c22"/><circle cx="471.9" cy="424.9" r="4.3" class="c56"/><circle cx="432.7" cy="450.0" r="4.3" class="c4"/><circle cx="429.4" cy="417.2" r="3.4" class="c22"/><circle cx="440.0" cy="404.1" r="4.3" class="c54"/><circle cx="471.1" cy="500.0" r="4.3" class="c15"/><circle cx="515.1" cy="481.4" r="3.2" class="c2"/><circle cx="472.4" cy="411.7" r="4.5" class="c1"/><circle cx="507.6" cy="407.2" r="3.3" class="c39"/><circle cx="528.2" cy="478.7" r="4.7" class="c49"/><circle cx="439.6" cy="463.1" r="3.8" class="c27"/><circle cx="435.6" cy="409.2" r="4.1" class="c21"/><circle cx="527.4" cy="443.1" r="4.7" class="c3"/><circle cx="514.6" cy="483.0" r="3.9" class="c36"/><circle cx="459.4" cy="475.0" r="4.9" class="c45"/><circle cx="529.3" cy="419.4" r="3.7" class="c58"/><circle cx="470.4" cy="501.0" r="3.4" class="c21"/><circle cx="459.8" cy="498.7" r="4.4" class="c28"/><circle cx="424.5" cy="502.5" r="4.7" class="c11"/><circle cx="533.6" cy="442.5" r="4.2" class="c55"/><circle cx="479.2" cy="418.8" r="3.2" class="c38"/><circle cx="533.8" cy="485.1" r="5.0" class="c3"/><circle cx="433.3" cy="502.6" r="3.9" class="c55"/><circle cx="521.2" cy="475.7" r="3.9" class="c16"/><circle cx="489.3" cy="476.6" r="4.0" class="c35"/><circle cx="360.5" cy="441.9" r="2.5" class="c44"/><circle cx="361.2" cy="434.0" r="2.1" class="c13"/><circle cx="364.3" cy="429.0" r="2.5" class="c32"/><circle cx="368.1" cy="425.1" r="2.3" class="c6"/><circle cx="732.5" cy="2.5" r="4.0" class="c44"/><circle cx="728.6" cy="14.2" r="4.0" class="c8"/><circle cx="710.3" cy="20.4" r="4.5" class="c8"/><circle cx="700.6" cy="29.7" r="4.0" class="c8"/><circle cx="701.4" cy="33.6" r="4.5" class="c35"/><circle cx="684.9" cy="44.1" r="4.0" class="c51"/><circle cx="682.0" cy="46.0" r="4.0" class="c31"/><circle cx="669.3" cy="58.9" r="4.0" class="c26"/><circle cx="662.1" cy="65.5" r="4.0" class="c44"/><circle cx="657.6" cy="70.6" r="4.0" class="c38"/><circle cx="649.3" cy="77.4" r="4.0" class="c50"/><circle cx="643.4" cy="77.7" r="3.5" class="c5"/><circle cx="645.0" cy="82.2" r="4.0" class="c31"/><circle cx="644.0" cy="91.4" r="4.0" class="c60"/><circle cx="624.0" cy="100.0" r="4.0" class="c68"/><circle cx="618.2" cy="99.5" r="3.5" class="c33"/><circle cx="620.7" cy="105.6" r="4.0" class="c58"/><circle cx="609.0" cy="114.7" r="5.0" class="c33"/><circle cx="635.3" cy="110.8" r="4.5" class="c22"/><circle cx="592.9" cy="120.9" r="3.5" class="c3"/><circle cx="599.3" cy="125.0" r="4.0" class="c11"/><circle cx="592.9" cy="129.7" r="4.0" class="c15"/><circle cx="589.0" cy="133.2" r="4.0" class="c8"/><circle cx="589.6" cy="136.0" r="4.0" class="c60"/><circle cx="580.8" cy="141.9" r="3.0" class="c11"/><circle cx="568.2" cy="142.5" r="3.0" class="c6"/><circle cx="576.0" cy="147.2" r="3.0" class="c34"/><circle cx="568.2" cy="152.6" r="3.0" class="c69"/><circle cx="793.7" cy="22.9" r="4.5" class="c16"/><circle cx="810.3" cy="13.0" r="4.5" class="c35"/><circle cx="754.9" cy="39.2" r="4.5" class="c58"/><circle cx="740.9" cy="52.1" r="4.5" class="c2"/><circle cx="699.4" cy="65.5" r="4.5" class="c53"/><circle cx="688.2" cy="81.6" r="4.5" class="c21"/></g></defs><g style="isolation:isolate"><use href="#dots" filter="url(#gl)" opacity="0.4"/><use href="#dots" filter="url(#bl)" style="mix-blend-mode:plus-lighter"/></g></svg>
</body></html>
